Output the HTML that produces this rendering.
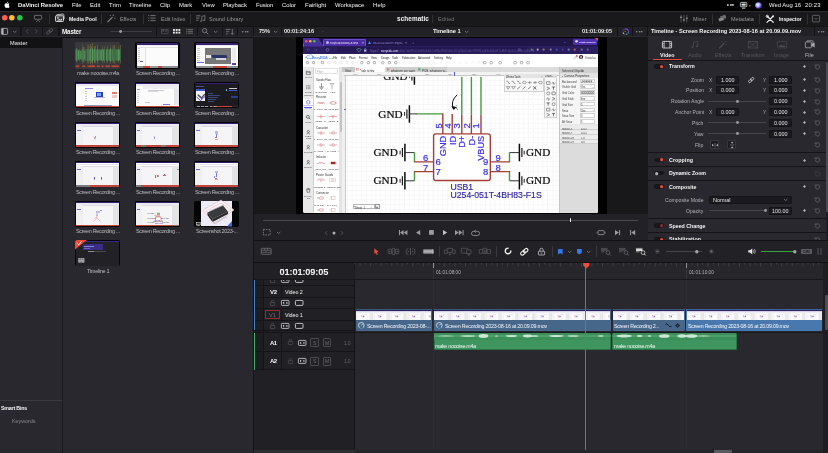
<!DOCTYPE html>
<html lang="en"><head><meta charset="utf-8"><title>DaVinci Resolve - schematic</title>
<style>
html,body{margin:0;padding:0;}
body{width:828px;height:453px;overflow:hidden;background:#28282e;position:relative;font-family:'Liberation Sans',sans-serif;}
#r{position:absolute;left:0;top:0;width:828px;height:453px;overflow:hidden;will-change:transform;}
#r div,#r svg,#r span{position:absolute;}
#r div{box-sizing:border-box;}
#r svg{overflow:visible;}
.t{white-space:nowrap;}
</style></head>
<body><div id="r">
<div style="left:0px;top:0px;width:828px;height:10.7px;background:#000;"></div>
<div style="left:0px;top:10.7px;width:828px;height:0.8px;background:#2c2c31;"></div>
<svg style="left:3.6px;top:1.2px;" width="6.2" height="7.6" viewBox="0 0 19 20"><path fill="#fff" d="M12.2 3.1c.7-.9 1.2-2 1.1-3.1-1 .1-2.200.7-2.900 1.500-.6.700-1.200 1.900-1 3 1.100.100 2.200-.600 2.800-1.400zM13.300 4.900c-1.600-.100-2.900.900-3.700.900-.800 0-1.900-.800-3.200-.800C4.700 5 3.200 6 2.400 7.500c-1.700 3-.400 7.400 1.200 9.800.800 1.200 1.800 2.500 3 2.500 1.200-.100 1.700-.800 3.100-.800 1.500 0 1.900.800 3.200.700 1.300 0 2.200-1.200 3-2.400.900-1.400 1.300-2.700 1.300-2.800 0 0-2.600-1-2.600-3.900 0-2.500 2-3.600 2.100-3.700-1.200-1.700-3-1.900-3.400-2z"/></svg>
<span class="t" style="left:18px;top:1px;font-size:23.6px;line-height:28.32px;color:#f4f4f4;transform:scale(0.25);transform-origin:0 0;font-weight:bold;letter-spacing:-0.21px;">DaVinci Resolve</span>
<span class="t" style="left:71.5px;top:1px;font-size:23.6px;line-height:28.32px;color:#f4f4f4;transform:scale(0.25);transform-origin:0 0;">File</span>
<span class="t" style="left:89.5px;top:1px;font-size:23.6px;line-height:28.32px;color:#f4f4f4;transform:scale(0.25);transform-origin:0 0;letter-spacing:0.33px;">Edit</span>
<span class="t" style="left:109px;top:1px;font-size:23.6px;line-height:28.32px;color:#f4f4f4;transform:scale(0.25);transform-origin:0 0;letter-spacing:0.42px;">Trim</span>
<span class="t" style="left:129px;top:1px;font-size:23.6px;line-height:28.32px;color:#f4f4f4;transform:scale(0.25);transform-origin:0 0;letter-spacing:0.21px;">Timeline</span>
<span class="t" style="left:160px;top:1px;font-size:23.6px;line-height:28.32px;color:#f4f4f4;transform:scale(0.25);transform-origin:0 0;letter-spacing:-0.16px;">Clip</span>
<span class="t" style="left:179px;top:1px;font-size:23.6px;line-height:28.32px;color:#f4f4f4;transform:scale(0.25);transform-origin:0 0;letter-spacing:0.19px;">Mark</span>
<span class="t" style="left:201.5px;top:1px;font-size:23.6px;line-height:28.32px;color:#f4f4f4;transform:scale(0.25);transform-origin:0 0;letter-spacing:0.12px;">View</span>
<span class="t" style="left:223px;top:1px;font-size:23.6px;line-height:28.32px;color:#f4f4f4;transform:scale(0.25);transform-origin:0 0;letter-spacing:0.03px;">Playback</span>
<span class="t" style="left:256px;top:1px;font-size:23.6px;line-height:28.32px;color:#f4f4f4;transform:scale(0.25);transform-origin:0 0;letter-spacing:-0.47px;">Fusion</span>
<span class="t" style="left:282px;top:1px;font-size:23.6px;line-height:28.32px;color:#f4f4f4;transform:scale(0.25);transform-origin:0 0;letter-spacing:-0.08px;">Color</span>
<span class="t" style="left:305px;top:1px;font-size:23.6px;line-height:28.32px;color:#f4f4f4;transform:scale(0.25);transform-origin:0 0;letter-spacing:0.14px;">Fairlight</span>
<span class="t" style="left:335px;top:1px;font-size:23.6px;line-height:28.32px;color:#f4f4f4;transform:scale(0.25);transform-origin:0 0;letter-spacing:-0.05px;">Workspace</span>
<span class="t" style="left:372.5px;top:1px;font-size:23.6px;line-height:28.32px;color:#f4f4f4;transform:scale(0.25);transform-origin:0 0;letter-spacing:0.67px;">Help</span>
<svg style="left:726.6px;top:4.4px;" width="1.8" height="1.8" viewBox="0 0 1.8 1.8"><circle cx=".9" cy=".9" r=".9" fill="#e8e8e8"/></svg>
<svg style="left:729.5px;top:4.4px;" width="1.8" height="1.8" viewBox="0 0 1.8 1.8"><circle cx=".9" cy=".9" r=".9" fill="#e8e8e8"/></svg>
<svg style="left:732.4px;top:4.4px;" width="1.8" height="1.8" viewBox="0 0 1.8 1.8"><circle cx=".9" cy=".9" r=".9" fill="#e8e8e8"/></svg>
<svg style="left:739.5px;top:2.2px;" width="8.5" height="6.5" viewBox="0 0 8.5 6.5"><rect x=".4" y=".4" width="6.4" height="4.4" rx="1" fill="none" stroke="#eee" stroke-width=".8"/><rect x="1.6" y="1.6" width="4" height="2" fill="#eee"/><path d="M2 6.200h3.200" stroke="#eee" stroke-width=".8"/></svg>
<svg style="left:749.3px;top:4.6px;" width="1.6" height="1.6" viewBox="0 0 1.6 1.6"><circle cx=".8" cy=".8" r=".8" fill="#ff5a4c"/></svg>
<svg style="left:755.3px;top:2px;" width="7" height="7" viewBox="0 0 7 7"><defs><radialGradient id="sg" cx="40%" cy="40%"><stop offset="0" stop-color="#fff"/><stop offset=".45" stop-color="#9fd0ff"/><stop offset=".8" stop-color="#b06cff"/><stop offset="1" stop-color="#3a3aa0"/></radialGradient></defs><circle cx="3.5" cy="3.5" r="3.3" fill="url(#sg)"/></svg>
<span class="t" style="left:769.3px;top:1px;font-size:23.6px;line-height:28.32px;color:#f4f4f4;transform:scale(0.25);transform-origin:0 0;">Wed Aug 16</span>
<span class="t" style="left:804.7px;top:1px;font-size:23.6px;line-height:28.32px;color:#f4f4f4;transform:scale(0.25);transform-origin:0 0;letter-spacing:0.67px;">20:23</span>
<div style="left:0px;top:11.5px;width:828px;height:14.6px;background:#19191c;"></div>
<svg style="left:1.6px;top:15.4px;" width="5.6" height="5.6" viewBox="0 0 5.6 5.6"><circle cx="2.8" cy="2.8" r="2.8" fill="#fe5f57"/></svg>
<svg style="left:9.1px;top:15.4px;" width="5.6" height="5.6" viewBox="0 0 5.6 5.6"><circle cx="2.8" cy="2.8" r="2.8" fill="#febc2e"/></svg>
<svg style="left:17.1px;top:15.4px;" width="5.6" height="5.6" viewBox="0 0 5.6 5.6"><circle cx="2.8" cy="2.8" r="2.8" fill="#28c840"/></svg>
<svg style="left:34px;top:14.8px;" width="8" height="7.5" viewBox="0 0 8 7.5"><rect x=".4" y=".4" width="7.200" height="3.900" rx=".5" fill="none" stroke="#7d7d82" stroke-width=".8"/><path d="M2.200 7 4 5.200 5.800 7" fill="none" stroke="#7d7d82" stroke-width=".8"/></svg>
<div style="left:49.1px;top:13.5px;width:0.8px;height:10.5px;background:#303035;"></div>
<svg style="left:54.5px;top:14.3px;" width="9.5" height="8" viewBox="0 0 9.5 8"><rect x="1.600" y=".4" width="7.400" height="5.400" rx=".8" fill="none" stroke="#d8d8d8" stroke-width=".8" transform="rotate(-6 5 3)"/><rect x=".5" y="1.800" width="8" height="5.700" rx=".8" fill="#3a3a3e" stroke="#e4e4e4" stroke-width=".9"/><circle cx="3" cy="3.900" r=".8" fill="#e4e4e4"/><path d="M2 6.500 4.200 5 5.400 5.800 7 4.600v1.900z" fill="#e4e4e4"/></svg>
<span class="t" style="left:68.5px;top:16px;font-size:20.8px;line-height:24.96px;color:#f4f4f4;transform:scale(0.25);transform-origin:0 0;font-weight:bold;letter-spacing:0.1px;">Media Pool</span>
<div style="left:101.1px;top:13.5px;width:0.8px;height:10.5px;background:#303035;"></div>
<svg style="left:106.5px;top:14.3px;" width="9" height="8.5" viewBox="0 0 9 8.5"><path d="M.8 7.800 5.200 3.400" stroke="#8a8a8f" stroke-width="1.100" stroke-linecap="round"/><path d="M6.300 .5v1.600M5.500 1.300h1.600M7.800 3.600v1.200M7.200 4.200h1.200M3.300 1v1M2.800 1.500h1" stroke="#8a8a8f" stroke-width=".5"/></svg>
<span class="t" style="left:120px;top:16px;font-size:22px;line-height:26.4px;color:#98989d;transform:scale(0.25);transform-origin:0 0;letter-spacing:-0.24px;">Effects</span>
<div style="left:142.6px;top:13.5px;width:0.8px;height:10.5px;background:#303035;"></div>
<svg style="left:147.5px;top:15.3px;" width="8" height="6.5" viewBox="0 0 8 6.5"><path d="M2.400 .6h5.200M2.400 3.100h5.200M2.400 5.600h5.200" stroke="#8a8a8f" stroke-width=".8"/><path d="M.2 .6h1.100M.2 3.100h1.100M.2 5.600h1.100" stroke="#8a8a8f" stroke-width=".8"/></svg>
<span class="t" style="left:160.5px;top:16px;font-size:22px;line-height:26.4px;color:#98989d;transform:scale(0.25);transform-origin:0 0;">Edit Index</span>
<div style="left:190.1px;top:13.5px;width:0.8px;height:10.5px;background:#303035;"></div>
<svg style="left:195.5px;top:14.8px;" width="9.5" height="7.5" viewBox="0 0 9.5 7.5"><path d="M.2 .8h4.200M.2 3h3.200M.2 5.200h2.200" stroke="#8a8a8f" stroke-width=".8"/><path d="M5.800 6V1.300L8.900.6v4.600" fill="none" stroke="#8a8a8f" stroke-width=".7"/><ellipse cx="5" cy="6.100" rx=".9" ry=".7" fill="#8a8a8f"/><ellipse cx="8.100" cy="5.300" rx=".9" ry=".7" fill="#8a8a8f"/></svg>
<span class="t" style="left:209px;top:16px;font-size:22px;line-height:26.4px;color:#98989d;transform:scale(0.25);transform-origin:0 0;">Sound Library</span>
<span class="t" style="left:396.7px;top:15px;font-size:25.6px;line-height:30.72px;color:#f4f4f4;transform:scale(0.25);transform-origin:0 0;font-weight:bold;letter-spacing:0.31px;">schematic</span>
<div style="left:432.3px;top:14.5px;width:0.8px;height:8.5px;background:#303035;"></div>
<span class="t" style="left:437.7px;top:16px;font-size:22px;line-height:26.4px;color:#77777c;transform:scale(0.25);transform-origin:0 0;letter-spacing:0.67px;">Edited</span>
<svg style="left:679.8px;top:14.8px;" width="7.8" height="7.4" viewBox="0 0 7.8 7.4"><path d="M1 0v7.400M3.900 0v7.400M6.800 0v7.400" stroke="#77777c" stroke-width=".6"/><path d="M0 2.200h2M2.900 5h2M5.800 3.200h2" stroke="#9a9a9f" stroke-width="1.100"/></svg>
<span class="t" style="left:692.7px;top:16px;font-size:22px;line-height:26.4px;color:#98989d;transform:scale(0.25);transform-origin:0 0;letter-spacing:0.04px;">Mixer</span>
<div style="left:711.6px;top:13.5px;width:0.8px;height:10.5px;background:#303035;"></div>
<svg style="left:717.5px;top:15px;" width="9" height="7" viewBox="0 0 9 7"><rect x="2.600" y=".6" width="5.600" height="3.400" rx=".7" fill="#77777c" transform="rotate(-18 5 3)"/><rect x=".4" y="2.600" width="5.600" height="3.400" rx=".7" fill="#8a8a8f" stroke="#19191c" stroke-width=".4" transform="rotate(-18 3 4)"/></svg>
<span class="t" style="left:731px;top:16px;font-size:22px;line-height:26.4px;color:#98989d;transform:scale(0.25);transform-origin:0 0;letter-spacing:-0.12px;">Metadata</span>
<div style="left:758.9px;top:13.5px;width:0.8px;height:10.5px;background:#303035;"></div>
<svg style="left:765.5px;top:14.6px;" width="8.5" height="8" viewBox="0 0 8.5 8"><path d="M1 7.300 7.300 1M1 1 7.300 7.300" stroke="#f0f0f0" stroke-width="1.200" stroke-linecap="round"/><circle cx="1.300" cy="1.300" r="1.200" fill="none" stroke="#f0f0f0" stroke-width=".7"/><circle cx="7" cy="1.300" r=".9" fill="#f0f0f0"/></svg>
<span class="t" style="left:778.7px;top:16px;font-size:20.8px;line-height:24.96px;color:#f4f4f4;transform:scale(0.25);transform-origin:0 0;font-weight:bold;letter-spacing:-0.4px;">Inspector</span>
<div style="left:806.6px;top:13.5px;width:0.8px;height:10.5px;background:#303035;"></div>
<svg style="left:812.3px;top:14.7px;" width="8" height="7.4" viewBox="0 0 8 7.4"><rect x=".4" y=".4" width="7.200" height="6.600" rx="1" fill="none" stroke="#7d7d82" stroke-width=".7"/><path d="M2.400 3 4 4.600 5.600 3" fill="none" stroke="#7d7d82" stroke-width=".7"/></svg>
<div style="left:0px;top:26.1px;width:828px;height:10.4px;background:#141416;"></div>
<div style="left:0px;top:26.5px;width:20.3px;height:9.6px;background:#222226;"></div>
<div style="left:21.6px;top:26.5px;width:20.2px;height:9.6px;background:#222226;"></div>
<div style="left:43px;top:26.5px;width:15.3px;height:9.6px;background:#222226;"></div>
<div style="left:59.6px;top:26.5px;width:96.7px;height:9.6px;background:#222226;"></div>
<div style="left:157.4px;top:26.5px;width:39.5px;height:9.6px;background:#222226;"></div>
<div style="left:198.1px;top:26.5px;width:23.9px;height:9.6px;background:#222226;"></div>
<div style="left:223.2px;top:26.5px;width:13.8px;height:9.6px;background:#222226;"></div>
<div style="left:238.2px;top:26.5px;width:14.8px;height:9.6px;background:#222226;"></div>
<div style="left:254.2px;top:26.5px;width:26.4px;height:9.6px;background:#222226;"></div>
<div style="left:281.6px;top:26.5px;width:335.4px;height:9.6px;background:#222226;"></div>
<div style="left:618.2px;top:26.5px;width:13.8px;height:9.6px;background:#222226;"></div>
<div style="left:633.2px;top:26.5px;width:14.1px;height:9.6px;background:#222226;"></div>
<div style="left:648.3px;top:26.5px;width:165.7px;height:9.6px;background:#222226;"></div>
<div style="left:815.2px;top:26.5px;width:12.8px;height:9.6px;background:#222226;"></div>
<svg style="left:1.2px;top:27.7px;" width="7" height="6.8" viewBox="0 0 7 6.8"><rect x=".4" y=".4" width="6.200" height="6" rx=".8" fill="none" stroke="#b4b4b8" stroke-width=".8"/><rect x=".6" y=".6" width="2" height="5.600" fill="#b4b4b8"/></svg>
<svg style="left:12.8px;top:30.65px;" width="3.4" height="1.7" viewBox="0 0 3.4 1.7"><path d="M0 0 1.7 1.53 3.4 0" fill="none" stroke="#8a8a8f" stroke-width="0.7"/></svg>
<svg style="left:25.6px;top:29.2px;" width="2.4" height="4.4" viewBox="0 0 2.4 4.4"><path d="M2.100 .2.400 2.200 2.100 4.200" fill="none" stroke="#5a5a60" stroke-width=".7"/></svg>
<svg style="left:35px;top:29.2px;" width="2.4" height="4.4" viewBox="0 0 2.4 4.4"><path d="M.3 .2 2 2.200.3 4.200" fill="none" stroke="#5a5a60" stroke-width=".7"/></svg>
<svg style="left:46.3px;top:27.8px;" width="7.4" height="6.8" viewBox="0 0 7.4 6.8"><g fill="none" stroke="#5a5a60" stroke-width=".8" transform="rotate(-40 3.700 3.400)"><rect x=".2" y="2.200" width="4" height="2.400" rx="1.200"/><rect x="3.200" y="2.200" width="4" height="2.400" rx="1.200"/></g></svg>
<span class="t" style="left:62px;top:28px;font-size:25.2px;line-height:30.24px;color:#f4f4f4;transform:scale(0.25);transform-origin:0 0;font-weight:bold;letter-spacing:-0.74px;">Master</span>
<div style="left:110px;top:31.1px;width:42px;height:0.6px;background:#3c3c42;"></div>
<svg style="left:118.9px;top:29.7px;" width="3.2" height="3.2" viewBox="0 0 3.2 3.2"><circle cx="1.600" cy="1.600" r="1.500" fill="#9a9a9f"/></svg>
<svg style="left:160.5px;top:29px;" width="7.4" height="4.6" viewBox="0 0 7.4 4.6"><rect x=".3" y=".3" width="6.800" height="4" fill="none" stroke="#5a5a60" stroke-width=".6"/><rect x="1.200" y="1.200" width="2" height="1.300" fill="#5a5a60"/><path d="M4 1.500h2.300M4 2.600h2.300" stroke="#5a5a60" stroke-width=".5"/></svg>
<svg style="left:173.2px;top:29.1px;" width="7.4" height="4.6" viewBox="0 0 7.4 4.6"><rect x="0" y="0" width="1.900" height="1.900" fill="#e8e8e8"/><rect x="0" y="2.7" width="1.900" height="1.900" fill="#e8e8e8"/><rect x="2.7" y="0" width="1.900" height="1.900" fill="#e8e8e8"/><rect x="2.7" y="2.7" width="1.900" height="1.900" fill="#e8e8e8"/><rect x="5.4" y="0" width="1.900" height="1.900" fill="#e8e8e8"/><rect x="5.4" y="2.7" width="1.900" height="1.900" fill="#e8e8e8"/></svg>
<svg style="left:185.8px;top:29.1px;" width="7" height="4.6" viewBox="0 0 7 4.6"><path d="M1.600 .4h5.400M1.600 2.300h5.400M1.600 4.200h5.400" stroke="#8a8a8f" stroke-width=".7"/><path d="M0 .4h.9M0 2.300h.9M0 4.200h.9" stroke="#8a8a8f" stroke-width=".7"/></svg>
<svg style="left:202px;top:28.3px;" width="6.6" height="6.6" viewBox="0 0 6.6 6.6"><circle cx="2.600" cy="2.600" r="2.100" fill="none" stroke="#8a8a8f" stroke-width=".8"/><path d="M4.200 4.200 6.200 6.200" stroke="#8a8a8f" stroke-width=".9"/></svg>
<svg style="left:213.6px;top:30.75px;" width="3.4" height="1.7" viewBox="0 0 3.4 1.7"><path d="M0 0 1.7 1.53 3.4 0" fill="none" stroke="#8a8a8f" stroke-width="0.7"/></svg>
<svg style="left:225.5px;top:28.6px;" width="8" height="5.8" viewBox="0 0 8 5.8"><path d="M0 .5h4.400M0 2.700h3.200M0 4.900h2" stroke="#8a8a8f" stroke-width=".7"/><path d="M6.300 0v5.400M4.900 4 6.300 5.500 7.700 4" fill="none" stroke="#8a8a8f" stroke-width=".7"/></svg>
<svg style="left:242.35px;top:30.55px;" width="1.5" height="1.5" viewBox="0 0 1.5 1.5"><circle cx="0.75" cy="0.75" r="0.75" fill="#9a9a9f"/></svg>
<svg style="left:244.85px;top:30.55px;" width="1.5" height="1.5" viewBox="0 0 1.5 1.5"><circle cx="0.75" cy="0.75" r="0.75" fill="#9a9a9f"/></svg>
<svg style="left:247.35px;top:30.55px;" width="1.5" height="1.5" viewBox="0 0 1.5 1.5"><circle cx="0.75" cy="0.75" r="0.75" fill="#9a9a9f"/></svg>
<span class="t" style="left:259.3px;top:28px;font-size:22.4px;line-height:26.88px;color:#e8e8e8;transform:scale(0.25);transform-origin:0 0;font-weight:bold;letter-spacing:-0.54px;">75%</span>
<svg style="left:273.8px;top:30.65px;" width="3.4" height="1.7" viewBox="0 0 3.4 1.7"><path d="M0 0 1.7 1.53 3.4 0" fill="none" stroke="#8a8a8f" stroke-width="0.7"/></svg>
<span class="t" style="left:284.3px;top:28px;font-size:22.4px;line-height:26.88px;color:#e8e8e8;transform:scale(0.25);transform-origin:0 0;font-weight:bold;letter-spacing:-0.19px;">00:01:24:16</span>
<svg style="left:322px;top:30.7px;" width="1.4" height="1.4" viewBox="0 0 1.4 1.4"><circle cx=".7" cy=".7" r=".6" fill="#4a4a50"/></svg>
<span class="t" style="left:432.7px;top:28px;font-size:23.2px;line-height:27.84px;color:#f4f4f4;transform:scale(0.25);transform-origin:0 0;font-weight:bold;letter-spacing:-0.26px;">Timeline 1</span>
<svg style="left:464.6px;top:30.65px;" width="3.4" height="1.7" viewBox="0 0 3.4 1.7"><path d="M0 0 1.7 1.53 3.4 0" fill="none" stroke="#8a8a8f" stroke-width="0.7"/></svg>
<span class="t" style="left:582px;top:28px;font-size:22.4px;line-height:26.88px;color:#e8e8e8;transform:scale(0.25);transform-origin:0 0;font-weight:bold;letter-spacing:-0.19px;">01:01:09:05</span>
<svg style="left:621.5px;top:27.8px;" width="7.4" height="7.4" viewBox="0 0 7.4 7.4"><circle cx="3.700" cy="3.700" r="2.900" fill="#1c1c20" stroke="#4a3a8a" stroke-width=".9"/><path d="M3.700 .8a2.900 2.900 0 0 1 2.900 2.900" fill="none" stroke="#7a5ad8" stroke-width=".9"/><circle cx="1.500" cy="5.300" r=".8" fill="#f0c030"/><circle cx="3.200" cy="3.300" r=".6" fill="#f09030"/><circle cx="4.600" cy="6.300" r=".7" fill="#40b060"/><circle cx="6.300" cy="4.800" r=".7" fill="#4a70e0"/><circle cx="3.400" cy="1" r=".6" fill="#e04a3a"/></svg>
<svg style="left:636.25px;top:30.55px;" width="1.5" height="1.5" viewBox="0 0 1.5 1.5"><circle cx="0.75" cy="0.75" r="0.75" fill="#9a9a9f"/></svg>
<svg style="left:638.75px;top:30.55px;" width="1.5" height="1.5" viewBox="0 0 1.5 1.5"><circle cx="0.75" cy="0.75" r="0.75" fill="#9a9a9f"/></svg>
<svg style="left:641.25px;top:30.55px;" width="1.5" height="1.5" viewBox="0 0 1.5 1.5"><circle cx="0.75" cy="0.75" r="0.75" fill="#9a9a9f"/></svg>
<span class="t" style="left:651px;top:28px;font-size:22.4px;line-height:26.88px;color:#f4f4f4;transform:scale(0.25);transform-origin:0 0;font-weight:bold;letter-spacing:0.12px;">Timeline - Screen Recording 2023-08-16 at 20.09.09.mov</span>
<svg style="left:818.05px;top:30.55px;" width="1.5" height="1.5" viewBox="0 0 1.5 1.5"><circle cx="0.75" cy="0.75" r="0.75" fill="#9a9a9f"/></svg>
<svg style="left:820.55px;top:30.55px;" width="1.5" height="1.5" viewBox="0 0 1.5 1.5"><circle cx="0.75" cy="0.75" r="0.75" fill="#9a9a9f"/></svg>
<svg style="left:823.05px;top:30.55px;" width="1.5" height="1.5" viewBox="0 0 1.5 1.5"><circle cx="0.75" cy="0.75" r="0.75" fill="#9a9a9f"/></svg>
<div style="left:0px;top:36.5px;width:253.4px;height:416.5px;background:#28282e;"></div>
<div style="left:0px;top:36.5px;width:828px;height:0.5px;background:#101012;"></div>
<div style="left:0px;top:37px;width:62px;height:10.8px;background:#121214;"></div>
<span class="t" style="left:9.5px;top:40px;font-size:22.4px;line-height:26.88px;color:#f0f0f0;transform:scale(0.25);transform-origin:0 0;letter-spacing:0.26px;">Master</span>
<div style="left:62px;top:37px;width:0.9px;height:416px;background:#1b1b1f;"></div>
<div style="left:0px;top:400.3px;width:62px;height:0.6px;background:#3a3a40;"></div>
<span class="t" style="left:0.6px;top:405px;font-size:21.2px;line-height:25.44px;color:#f4f4f4;transform:scale(0.25);transform-origin:0 0;font-weight:bold;letter-spacing:-0.79px;">Smart Bins</span>
<span class="t" style="left:11.9px;top:418px;font-size:22px;line-height:26.4px;color:#85858a;transform:scale(0.25);transform-origin:0 0;letter-spacing:-0.37px;">Keywords</span>
<div style="left:253px;top:37px;width:0.9px;height:416px;background:#151517;"></div>
<div style="left:75.3px;top:42.4px;width:45.2px;height:26.2px;background:#38383b;border-radius:2px;overflow:hidden;"></div>
<svg style="left:75.3px;top:42.4px;" width="45.2" height="26.2" viewBox="0 0 45.2 26.2"><rect x="0.4" y="7.73" width=".9" height="10.53" fill="#457f4c"/><rect x="1.3" y="6.41" width=".9" height="13.18" fill="#5a9f5d"/><rect x="2.2" y="7.58" width=".9" height="10.84" fill="#457f4c"/><rect x="3.1" y="8.48" width=".9" height="9.03" fill="#5a9f5d"/><rect x="4" y="7.24" width=".9" height="11.53" fill="#457f4c"/><rect x="4.9" y="8.74" width=".9" height="8.53" fill="#5a9f5d"/><rect x="5.8" y="8.75" width=".9" height="8.51" fill="#457f4c"/><rect x="6.7" y="7.06" width=".9" height="11.88" fill="#5a9f5d"/><rect x="6.9" y="1.92" width=".5" height="5.14" fill="#66664f"/><rect x="6.9" y="18.94" width=".5" height="3.09" fill="#66664f"/><rect x="7.6" y="7.17" width=".9" height="11.66" fill="#457f4c"/><rect x="7.8" y="4.67" width=".5" height="2.5" fill="#8f8340"/><rect x="7.8" y="18.83" width=".5" height="1.5" fill="#8f8340"/><rect x="8.5" y="7.52" width=".9" height="10.96" fill="#5a9f5d"/><rect x="8.7" y="4.91" width=".5" height="2.61" fill="#8f8340"/><rect x="8.7" y="18.48" width=".5" height="1.57" fill="#8f8340"/><rect x="9.4" y="8.92" width=".9" height="8.17" fill="#5a9f5d"/><rect x="10.3" y="7.1" width=".9" height="11.81" fill="#457f4c"/><rect x="11.7" y="6.97" width=".9" height="12.06" fill="#457f4c"/><rect x="11.9" y="3.37" width=".5" height="3.6" fill="#66664f"/><rect x="11.9" y="19.03" width=".5" height="2.16" fill="#66664f"/><rect x="12.6" y="7.07" width=".9" height="11.86" fill="#5a9f5d"/><rect x="12.8" y="1.88" width=".5" height="5.19" fill="#66664f"/><rect x="12.8" y="18.93" width=".5" height="3.12" fill="#66664f"/><rect x="13.5" y="6.46" width=".9" height="13.09" fill="#457f4c"/><rect x="13.7" y="3.45" width=".5" height="3.01" fill="#8f8340"/><rect x="13.7" y="19.54" width=".5" height="1.81" fill="#8f8340"/><rect x="14.4" y="7.34" width=".9" height="11.32" fill="#5a9f5d"/><rect x="15.3" y="6.57" width=".9" height="12.85" fill="#5a9f5d"/><rect x="15.5" y="1.86" width=".5" height="4.71" fill="#8f8340"/><rect x="15.5" y="19.43" width=".5" height="2.83" fill="#8f8340"/><rect x="16.2" y="6.27" width=".9" height="13.47" fill="#457f4c"/><rect x="16.4" y="4.27" width=".5" height="2" fill="#8f8340"/><rect x="16.4" y="19.73" width=".5" height="1.2" fill="#8f8340"/><rect x="17.1" y="6.34" width=".9" height="13.31" fill="#5a9f5d"/><rect x="17.3" y="1.21" width=".5" height="5.14" fill="#8f8340"/><rect x="17.3" y="19.66" width=".5" height="3.08" fill="#8f8340"/><rect x="18" y="7.68" width=".9" height="10.63" fill="#457f4c"/><rect x="18.9" y="6.55" width=".9" height="12.89" fill="#5a9f5d"/><rect x="19.1" y="4.28" width=".5" height="2.28" fill="#8f8340"/><rect x="19.1" y="19.45" width=".5" height="1.37" fill="#8f8340"/><rect x="19.8" y="6.26" width=".9" height="13.49" fill="#457f4c"/><rect x="20" y="3.88" width=".5" height="2.38" fill="#8f8340"/><rect x="20" y="19.74" width=".5" height="1.43" fill="#8f8340"/><rect x="20.7" y="7.64" width=".9" height="10.72" fill="#5a9f5d"/><rect x="22.1" y="6.52" width=".9" height="12.95" fill="#5a9f5d"/><rect x="22.3" y="2.74" width=".5" height="3.79" fill="#8f8340"/><rect x="22.3" y="19.48" width=".5" height="2.27" fill="#8f8340"/><rect x="23" y="7.49" width=".9" height="11.01" fill="#457f4c"/><rect x="23.9" y="7.59" width=".9" height="10.82" fill="#457f4c"/><rect x="24.8" y="7.61" width=".9" height="10.77" fill="#5a9f5d"/><rect x="26.2" y="7.46" width=".9" height="11.08" fill="#5a9f5d"/><rect x="27.1" y="6.25" width=".9" height="13.51" fill="#457f4c"/><rect x="27.3" y="3.27" width=".5" height="2.97" fill="#66664f"/><rect x="27.3" y="19.75" width=".5" height="1.78" fill="#66664f"/><rect x="28" y="7.46" width=".9" height="11.07" fill="#5a9f5d"/><rect x="28.9" y="6.43" width=".9" height="13.13" fill="#457f4c"/><rect x="29.1" y="4.11" width=".5" height="2.32" fill="#66664f"/><rect x="29.1" y="19.57" width=".5" height="1.39" fill="#66664f"/><rect x="30.8" y="7.46" width=".9" height="11.08" fill="#5a9f5d"/><rect x="31.7" y="6.56" width=".9" height="12.87" fill="#5a9f5d"/><rect x="31.9" y="3.62" width=".5" height="2.95" fill="#8f8340"/><rect x="31.9" y="19.44" width=".5" height="1.77" fill="#8f8340"/><rect x="32.6" y="7.66" width=".9" height="10.69" fill="#457f4c"/><rect x="33.5" y="7.41" width=".9" height="11.18" fill="#457f4c"/><rect x="34.4" y="7.21" width=".9" height="11.59" fill="#5a9f5d"/><rect x="35.3" y="6.27" width=".9" height="13.47" fill="#5a9f5d"/><rect x="35.5" y="2.43" width=".5" height="3.84" fill="#66664f"/><rect x="35.5" y="19.73" width=".5" height="2.3" fill="#66664f"/><rect x="36.7" y="7.51" width=".9" height="10.99" fill="#5a9f5d"/><rect x="37.6" y="6.35" width=".9" height="13.31" fill="#457f4c"/><rect x="37.8" y="3.55" width=".5" height="2.8" fill="#8f8340"/><rect x="37.8" y="19.65" width=".5" height="1.68" fill="#8f8340"/><rect x="38.5" y="6.62" width=".9" height="12.77" fill="#457f4c"/><rect x="38.7" y="3.99" width=".5" height="2.63" fill="#66664f"/><rect x="38.7" y="19.38" width=".5" height="1.58" fill="#66664f"/><rect x="39.4" y="6.39" width=".9" height="13.22" fill="#457f4c"/><rect x="39.6" y="3.04" width=".5" height="3.35" fill="#8f8340"/><rect x="39.6" y="19.61" width=".5" height="2.01" fill="#8f8340"/><rect x="40.3" y="7.74" width=".9" height="10.52" fill="#457f4c"/><rect x="41.2" y="7.42" width=".9" height="11.16" fill="#457f4c"/><rect x="42.1" y="7.39" width=".9" height="11.22" fill="#457f4c"/><rect x="43" y="6.85" width=".9" height="12.31" fill="#5a9f5d"/><rect x="43.2" y="4.28" width=".5" height="2.56" fill="#66664f"/><rect x="43.2" y="19.15" width=".5" height="1.54" fill="#66664f"/><rect x="43.9" y="7.69" width=".9" height="10.62" fill="#5a9f5d"/><rect x="44.8" y="6.91" width=".9" height="12.19" fill="#457f4c"/><rect x="45" y="2.94" width=".5" height="3.97" fill="#8f8340"/><rect x="45" y="19.09" width=".5" height="2.38" fill="#8f8340"/><rect x="0.7" y="23.400" width="3.5" height="1.700" fill="#c4432e"/><rect x="7.4" y="23.400" width="2.8" height="1.700" fill="#c4432e"/><rect x="12.4" y="23.400" width="7.7" height="1.700" fill="#c4432e"/><rect x="21.9" y="23.400" width="2.8" height="1.700" fill="#c4432e"/><rect x="26.5" y="23.400" width="2.1" height="1.700" fill="#c4432e"/><rect x="30.4" y="23.400" width="4.6" height="1.700" fill="#c4432e"/><rect x="36.4" y="23.400" width="7.4" height="1.700" fill="#c4432e"/></svg>
<div style="left:134.7px;top:42.4px;width:45.2px;height:26.2px;background:#050505;border-radius:2px;"></div>
<div style="left:136.8px;top:43.3px;width:41.5px;height:24.4px;background:#fbfbfb;"></div>
<div style="left:136.8px;top:43.3px;width:41.5px;height:1.4px;background:#34226f;"></div>
<div style="left:136.8px;top:44.7px;width:41.5px;height:1.8px;background:#e9e7f2;"></div>
<div style="left:136.8px;top:66.2px;width:41.5px;height:1.5px;background:#c2453b;"></div>
<div style="left:136.8px;top:46.7px;width:41.5px;height:0.6px;background:#e2e2e8;"></div>
<div style="left:137.8px;top:48.3px;width:2.5px;height:0.6px;background:#c9c9d2;"></div>
<div style="left:137.8px;top:50.3px;width:2.5px;height:0.6px;background:#c9c9d2;"></div>
<div style="left:137.8px;top:52.3px;width:2.5px;height:0.6px;background:#c9c9d2;"></div>
<div style="left:137.8px;top:54.3px;width:2.5px;height:0.6px;background:#c9c9d2;"></div>
<div style="left:137.8px;top:56.3px;width:2.5px;height:0.6px;background:#c9c9d2;"></div>
<div style="left:137.8px;top:58.3px;width:2.5px;height:0.6px;background:#c9c9d2;"></div>
<div style="left:137.8px;top:60.3px;width:2.5px;height:0.6px;background:#c9c9d2;"></div>
<div style="left:140.1px;top:60.6px;width:3px;height:1.6px;background:#5b5e9a;"></div>
<div style="left:144.8px;top:46.7px;width:0.4px;height:19.5px;background:#e0e0e6;"></div>
<div style="left:136.8px;top:66.2px;width:6px;height:1.5px;background:#8d8d92;"></div>
<div style="left:149.8px;top:66.2px;width:8px;height:1.5px;background:#9a9a9e;"></div>
<div style="left:161.8px;top:66.2px;width:16.5px;height:1.5px;background:#8d8d92;"></div>
<div style="left:194.2px;top:42.4px;width:45.2px;height:26.2px;background:#050505;border-radius:2px;"></div>
<div style="left:196.3px;top:43.3px;width:41.5px;height:24.4px;background:#fbfbfb;"></div>
<div style="left:196.3px;top:43.3px;width:41.5px;height:1.4px;background:#34226f;"></div>
<div style="left:196.3px;top:44.7px;width:41.5px;height:1.8px;background:#e9e7f2;"></div>
<div style="left:196.3px;top:66.2px;width:41.5px;height:1.5px;background:#c2453b;"></div>
<div style="left:197.3px;top:48.3px;width:3px;height:0.6px;background:#c9c9d2;"></div>
<div style="left:197.3px;top:50.3px;width:3px;height:0.6px;background:#c9c9d2;"></div>
<div style="left:197.3px;top:52.3px;width:3px;height:0.6px;background:#c9c9d2;"></div>
<div style="left:197.3px;top:54.3px;width:3px;height:0.6px;background:#c9c9d2;"></div>
<div style="left:197.3px;top:56.3px;width:3px;height:0.6px;background:#c9c9d2;"></div>
<div style="left:197.3px;top:58.3px;width:3px;height:0.6px;background:#c9c9d2;"></div>
<div style="left:197.3px;top:60.3px;width:3px;height:0.6px;background:#c9c9d2;"></div>
<div style="left:196.8px;top:61.7px;width:7px;height:1.3px;background:#6d6af0;"></div>
<div style="left:205.3px;top:48.3px;width:25.3px;height:15.8px;background:#77777a;"></div>
<div style="left:206.3px;top:54.8px;width:4.5px;height:3px;background:#e8e8ea;"></div>
<div style="left:211.8px;top:54.6px;width:15px;height:3.4px;background:#2a3566;transform:skewX(18deg);"></div>
<div style="left:215.8px;top:57.8px;width:10px;height:2.2px;background:#d6d6dc;"></div>
<div style="left:232.3px;top:47.8px;width:4px;height:14px;background:#ececf0;"></div>
<div style="left:232.3px;top:62.8px;width:4px;height:2px;background:#5a3fc0;"></div>
<div style="left:196.3px;top:66.2px;width:17px;height:1.5px;background:#8d8d92;"></div>
<div style="left:227.3px;top:66.2px;width:10.5px;height:1.5px;background:#8d8d92;"></div>
<div style="left:75.3px;top:82px;width:45.2px;height:26.2px;background:#050505;border-radius:2px;"></div>
<div style="left:76.4px;top:82.9px;width:43px;height:24.4px;background:#fbfbfb;"></div>
<div style="left:76.4px;top:82.9px;width:43px;height:1.4px;background:#34226f;"></div>
<div style="left:76.4px;top:84.3px;width:43px;height:1.8px;background:#e9e7f2;"></div>
<div style="left:76.4px;top:105.8px;width:43px;height:1.5px;background:#c2453b;"></div>
<div style="left:85.4px;top:88.2px;width:8px;height:1.1px;background:#8f8cf5;"></div>
<div style="left:95.9px;top:91.9px;width:7.5px;height:6px;background:#2c3fb8;"></div>
<div style="left:96.9px;top:92.9px;width:4px;height:3px;background:#6fa4f0;"></div>
<div style="left:94.4px;top:97.4px;width:11px;height:0.8px;background:#b9b9e8;"></div>
<div style="left:111.9px;top:91.9px;width:5px;height:2px;background:#e07a6a;"></div>
<div style="left:111.9px;top:94.9px;width:5px;height:3.5px;background:#f1c9c4;"></div>
<div style="left:85.4px;top:90.9px;width:2px;height:0.6px;background:#d0d0d8;"></div>
<div style="left:85.4px;top:93.2px;width:2px;height:0.6px;background:#d0d0d8;"></div>
<div style="left:85.4px;top:95.5px;width:2px;height:0.6px;background:#d0d0d8;"></div>
<div style="left:85.4px;top:97.8px;width:2px;height:0.6px;background:#d0d0d8;"></div>
<div style="left:85.4px;top:100.1px;width:2px;height:0.6px;background:#d0d0d8;"></div>
<div style="left:84.4px;top:105px;width:28px;height:0.8px;background:#8aa0c8;"></div>
<div style="left:134.7px;top:82px;width:45.2px;height:26.2px;background:#050505;border-radius:2px;"></div>
<div style="left:135.8px;top:82.9px;width:43px;height:24.4px;background:#fbfbfb;"></div>
<div style="left:135.8px;top:82.9px;width:43px;height:1.4px;background:#34226f;"></div>
<div style="left:135.8px;top:84.3px;width:43px;height:1.8px;background:#e9e7f2;"></div>
<div style="left:135.8px;top:105.8px;width:43px;height:1.5px;background:#c2453b;"></div>
<div style="left:142.8px;top:86.3px;width:36px;height:2.6px;background:#ececf0;"></div>
<div style="left:136.6px;top:88.9px;width:3.5px;height:1.2px;background:#8f8cf5;"></div>
<div style="left:136.6px;top:91.9px;width:2.5px;height:0.5px;background:#d0d0d8;"></div>
<div style="left:136.6px;top:93.9px;width:2.5px;height:0.5px;background:#d0d0d8;"></div>
<div style="left:136.6px;top:95.9px;width:2.5px;height:0.5px;background:#d0d0d8;"></div>
<div style="left:136.6px;top:97.9px;width:2.5px;height:0.5px;background:#d0d0d8;"></div>
<div style="left:136.6px;top:99.9px;width:2.5px;height:0.5px;background:#d0d0d8;"></div>
<div style="left:136.6px;top:101.9px;width:2.5px;height:0.5px;background:#d0d0d8;"></div>
<div style="left:147.8px;top:89.9px;width:16px;height:0.6px;background:#c9c9d2;"></div>
<div style="left:147.8px;top:91.4px;width:10px;height:0.6px;background:#d9d9e0;"></div>
<div style="left:174.3px;top:88.9px;width:4.5px;height:16.4px;background:#e6e6ea;"></div>
<div style="left:162.8px;top:103.7px;width:7.5px;height:1px;background:#7e7bf2;"></div>
<div style="left:144.8px;top:102.4px;width:5px;height:0.6px;background:#c9c9d2;"></div>
<div style="left:194.2px;top:82px;width:45.2px;height:26.2px;background:#050505;border-radius:2px;"></div>
<div style="left:195.3px;top:82.9px;width:43px;height:24.4px;background:#1c1c20;"></div>
<div style="left:195.3px;top:82.9px;width:43px;height:1.4px;background:#34226f;"></div>
<div style="left:195.3px;top:105.8px;width:43px;height:1.5px;background:#c2453b;"></div>
<div style="left:196.3px;top:86.4px;width:8px;height:0.8px;background:#4a4a90;"></div>
<div style="left:195.9px;top:89.4px;width:9.5px;height:1.6px;background:#3d59c9;"></div>
<div style="left:195.9px;top:91px;width:9.5px;height:9.5px;background:#f2f2f6;"></div>
<svg style="left:195.9px;top:91px;" width="9.5" height="9.5" viewBox="0 0 9.5 9.5"><path d="M2 3 5.500 6 8.500 2.500 9 4 5.500 8 1.500 4.500z" fill="#4a4a52"/><path d="M.5 6 4.500 9.500 9.500 5" fill="none" stroke="#4a35c8" stroke-width=".9"/></svg>
<div style="left:207.8px;top:92.9px;width:5px;height:0.5px;background:#3a4a78;"></div>
<div style="left:207.8px;top:95px;width:12px;height:0.5px;background:#3a4a78;"></div>
<div style="left:207.8px;top:97.1px;width:10px;height:0.5px;background:#3a4a78;"></div>
<div style="left:207.8px;top:99.2px;width:8px;height:0.5px;background:#3a4a78;"></div>
<div style="left:207.8px;top:101.3px;width:6px;height:0.5px;background:#3a4a78;"></div>
<div style="left:225.8px;top:88.9px;width:0.7px;height:2px;background:#5ab0f0;"></div>
<div style="left:229.3px;top:89.7px;width:8px;height:1.4px;background:#3d59c9;"></div>
<div style="left:231.3px;top:95.9px;width:6.5px;height:1.8px;background:#2c3f8a;"></div>
<div style="left:228.8px;top:87.9px;width:8px;height:0.7px;background:#c8c8d0;"></div>
<div style="left:195.3px;top:105.8px;width:17px;height:1.5px;background:#2e2e33;"></div>
<div style="left:232.3px;top:105.8px;width:6px;height:1.5px;background:#2e2e33;"></div>
<div style="left:196.8px;top:106px;width:2.8px;height:0.7px;background:#9a9aa0;"></div>
<div style="left:201.1px;top:106px;width:2.8px;height:0.7px;background:#9a9aa0;"></div>
<div style="left:205.4px;top:106px;width:2.8px;height:0.7px;background:#9a9aa0;"></div>
<div style="left:209.7px;top:106px;width:2.8px;height:0.7px;background:#9a9aa0;"></div>
<div style="left:214px;top:106px;width:2.8px;height:0.7px;background:#9a9aa0;"></div>
<div style="left:75.3px;top:121.6px;width:45.2px;height:26.2px;background:#050505;border-radius:2px;"></div>
<div style="left:76.4px;top:122.5px;width:43px;height:24.4px;background:#fbfbfb;"></div>
<div style="left:76.4px;top:122.5px;width:43px;height:1.4px;background:#34226f;"></div>
<div style="left:76.4px;top:123.9px;width:43px;height:1.8px;background:#e9e7f2;"></div>
<div style="left:76.4px;top:145.4px;width:43px;height:1.5px;background:#c2453b;"></div>
<div style="left:76.4px;top:125.9px;width:6.5px;height:19.5px;background:#f0f0f3;"></div>
<div style="left:77.2px;top:129.5px;width:3.5px;height:0.7px;background:#6d6af0;"></div>
<div style="left:112.9px;top:125.9px;width:6.5px;height:19.5px;background:#e3e3e6;"></div>
<div style="left:82.9px;top:125.9px;width:30px;height:1px;background:#dcdce0;"></div>
<div style="left:82.9px;top:126.9px;width:30px;height:18.5px;background:#f5f5f7;"></div>
<div style="left:82.9px;top:126.9px;width:30px;height:18.5px;background:transparent;background-image:linear-gradient(90deg,rgba(0,0,0,.05) .4px,transparent .4px),linear-gradient(rgba(0,0,0,.05) .4px,transparent .4px);background-size:3.300px 3.300px;"></div>
<div style="left:94.4px;top:137px;width:1.3px;height:2px;background:#e0a0a8;"></div>
<div style="left:94.7px;top:136px;width:0.6px;height:0.8px;background:#9a9ad8;"></div>
<div style="left:134.7px;top:121.6px;width:45.2px;height:26.2px;background:#050505;border-radius:2px;"></div>
<div style="left:135.8px;top:122.5px;width:43px;height:24.4px;background:#fbfbfb;"></div>
<div style="left:135.8px;top:122.5px;width:43px;height:1.4px;background:#34226f;"></div>
<div style="left:135.8px;top:123.9px;width:43px;height:1.8px;background:#e9e7f2;"></div>
<div style="left:135.8px;top:145.4px;width:43px;height:1.5px;background:#c2453b;"></div>
<div style="left:135.8px;top:125.9px;width:6.5px;height:19.5px;background:#f0f0f3;"></div>
<div style="left:136.6px;top:129.5px;width:3.5px;height:0.7px;background:#6d6af0;"></div>
<div style="left:172.3px;top:125.9px;width:6.5px;height:19.5px;background:#e3e3e6;"></div>
<div style="left:142.3px;top:125.9px;width:30px;height:1px;background:#dcdce0;"></div>
<div style="left:142.3px;top:126.9px;width:30px;height:18.5px;background:#f5f5f7;"></div>
<div style="left:142.3px;top:126.9px;width:30px;height:18.5px;background:transparent;background-image:linear-gradient(90deg,rgba(0,0,0,.05) .4px,transparent .4px),linear-gradient(rgba(0,0,0,.05) .4px,transparent .4px);background-size:3.300px 3.300px;"></div>
<div style="left:140.8px;top:145.4px;width:5px;height:1.5px;background:#7a7a80;"></div>
<div style="left:160.8px;top:145.4px;width:5px;height:1.5px;background:#7a7a80;"></div>
<div style="left:154.1px;top:137px;width:1.1px;height:1.8px;background:#9a9ae0;"></div>
<div style="left:154.3px;top:135.9px;width:0.5px;height:0.8px;background:#c0c0e8;"></div>
<div style="left:194.2px;top:121.6px;width:45.2px;height:26.2px;background:#050505;border-radius:2px;"></div>
<div style="left:195.3px;top:122.5px;width:43px;height:24.4px;background:#fbfbfb;"></div>
<div style="left:195.3px;top:122.5px;width:43px;height:1.4px;background:#34226f;"></div>
<div style="left:195.3px;top:123.9px;width:43px;height:1.8px;background:#e9e7f2;"></div>
<div style="left:195.3px;top:145.4px;width:43px;height:1.5px;background:#c2453b;"></div>
<div style="left:195.3px;top:125.9px;width:6.5px;height:19.5px;background:#f0f0f3;"></div>
<div style="left:196.1px;top:129.5px;width:3.5px;height:0.7px;background:#6d6af0;"></div>
<div style="left:231.8px;top:125.9px;width:6.5px;height:19.5px;background:#e3e3e6;"></div>
<div style="left:201.8px;top:125.9px;width:30px;height:1px;background:#dcdce0;"></div>
<div style="left:201.8px;top:126.9px;width:30px;height:18.5px;background:#f5f5f7;"></div>
<div style="left:201.8px;top:126.9px;width:30px;height:18.5px;background:transparent;background-image:linear-gradient(90deg,rgba(0,0,0,.05) .4px,transparent .4px),linear-gradient(rgba(0,0,0,.05) .4px,transparent .4px);background-size:3.300px 3.300px;"></div>
<div style="left:214.8px;top:131px;width:3px;height:2.5px;background:#b8b4f0;"></div>
<div style="left:215.8px;top:133.5px;width:0.5px;height:3.5px;background:#7a7ae8;"></div>
<div style="left:215.3px;top:137px;width:2px;height:0.6px;background:#d86a6a;"></div>
<div style="left:214.8px;top:138.5px;width:3px;height:0.5px;background:#e8a0a0;"></div>
<div style="left:75.3px;top:161.2px;width:45.2px;height:26.2px;background:#050505;border-radius:2px;"></div>
<div style="left:76.4px;top:162.1px;width:43px;height:24.4px;background:#fbfbfb;"></div>
<div style="left:76.4px;top:162.1px;width:43px;height:1.4px;background:#34226f;"></div>
<div style="left:76.4px;top:163.5px;width:43px;height:1.8px;background:#e9e7f2;"></div>
<div style="left:76.4px;top:185px;width:43px;height:1.5px;background:#c2453b;"></div>
<div style="left:76.4px;top:165.5px;width:6.5px;height:19.5px;background:#f0f0f3;"></div>
<div style="left:77.2px;top:169.1px;width:3.5px;height:0.7px;background:#6d6af0;"></div>
<div style="left:112.9px;top:165.5px;width:6.5px;height:19.5px;background:#e3e3e6;"></div>
<div style="left:82.9px;top:165.5px;width:30px;height:1px;background:#dcdce0;"></div>
<div style="left:82.9px;top:166.5px;width:30px;height:18.5px;background:#f5f5f7;"></div>
<div style="left:82.9px;top:166.5px;width:30px;height:18.5px;background:transparent;background-image:linear-gradient(90deg,rgba(0,0,0,.05) .4px,transparent .4px),linear-gradient(rgba(0,0,0,.05) .4px,transparent .4px);background-size:3.300px 3.300px;"></div>
<div style="left:76.4px;top:185px;width:14px;height:1.5px;background:#7a7a80;"></div>
<div style="left:93.7px;top:177.3px;width:0.9px;height:1.7px;background:#5a5ae0;"></div>
<div style="left:93.7px;top:179.1px;width:0.9px;height:0.8px;background:#e08080;"></div>
<div style="left:101.2px;top:177.3px;width:0.9px;height:1.7px;background:#5a5ae0;"></div>
<div style="left:100.9px;top:179.1px;width:1.5px;height:0.8px;background:#e08080;"></div>
<div style="left:134.7px;top:161.2px;width:45.2px;height:26.2px;background:#050505;border-radius:2px;"></div>
<div style="left:135.8px;top:162.1px;width:43px;height:24.4px;background:#fbfbfb;"></div>
<div style="left:135.8px;top:162.1px;width:43px;height:1.4px;background:#34226f;"></div>
<div style="left:135.8px;top:163.5px;width:43px;height:1.8px;background:#e9e7f2;"></div>
<div style="left:135.8px;top:185px;width:43px;height:1.5px;background:#c2453b;"></div>
<div style="left:135.8px;top:165.5px;width:6.5px;height:19.5px;background:#f0f0f3;"></div>
<div style="left:136.6px;top:169.1px;width:3.5px;height:0.7px;background:#6d6af0;"></div>
<div style="left:172.3px;top:165.5px;width:6.5px;height:19.5px;background:#e3e3e6;"></div>
<div style="left:142.3px;top:165.5px;width:30px;height:1px;background:#dcdce0;"></div>
<div style="left:142.3px;top:166.5px;width:30px;height:18.5px;background:#f5f5f7;"></div>
<div style="left:142.3px;top:166.5px;width:30px;height:18.5px;background:transparent;background-image:linear-gradient(90deg,rgba(0,0,0,.05) .4px,transparent .4px),linear-gradient(rgba(0,0,0,.05) .4px,transparent .4px);background-size:3.300px 3.300px;"></div>
<div style="left:135.8px;top:185px;width:5px;height:1.5px;background:#7a7a80;"></div>
<div style="left:155.3px;top:175.1px;width:0.5px;height:2.5px;background:#d85a5a;"></div>
<div style="left:156.8px;top:175.4px;width:0.5px;height:2px;background:#d85a5a;"></div>
<div style="left:158px;top:175.1px;width:0.5px;height:2.2px;background:#e09090;"></div>
<div style="left:162.8px;top:174.9px;width:3.5px;height:0.6px;background:#d85a5a;"></div>
<div style="left:164.3px;top:173.6px;width:0.8px;height:1.3px;background:#5a5ae0;"></div>
<div style="left:176.8px;top:169.1px;width:2px;height:1px;background:#4fb86a;"></div>
<div style="left:194.2px;top:161.2px;width:45.2px;height:26.2px;background:#050505;border-radius:2px;"></div>
<div style="left:195.3px;top:162.1px;width:43px;height:24.4px;background:#fbfbfb;"></div>
<div style="left:195.3px;top:162.1px;width:43px;height:1.4px;background:#34226f;"></div>
<div style="left:195.3px;top:163.5px;width:43px;height:1.8px;background:#e9e7f2;"></div>
<div style="left:195.3px;top:185px;width:43px;height:1.5px;background:#c2453b;"></div>
<div style="left:195.3px;top:165.5px;width:6.5px;height:19.5px;background:#f0f0f3;"></div>
<div style="left:196.1px;top:169.1px;width:3.5px;height:0.7px;background:#6d6af0;"></div>
<div style="left:231.8px;top:165.5px;width:6.5px;height:19.5px;background:#e3e3e6;"></div>
<div style="left:201.8px;top:165.5px;width:30px;height:1px;background:#dcdce0;"></div>
<div style="left:201.8px;top:166.5px;width:30px;height:18.5px;background:#f5f5f7;"></div>
<div style="left:201.8px;top:166.5px;width:30px;height:18.5px;background:transparent;background-image:linear-gradient(90deg,rgba(0,0,0,.05) .4px,transparent .4px),linear-gradient(rgba(0,0,0,.05) .4px,transparent .4px);background-size:3.300px 3.300px;"></div>
<div style="left:214.8px;top:170.6px;width:3px;height:2.5px;background:#b8b4f0;"></div>
<div style="left:216.1px;top:173.1px;width:0.5px;height:4px;background:#7a7ae8;"></div>
<div style="left:214.3px;top:175.6px;width:1px;height:2.5px;background:#8a8aea;"></div>
<div style="left:215.3px;top:177.6px;width:2.2px;height:0.6px;background:#d86a6a;"></div>
<div style="left:214.8px;top:179.4px;width:3px;height:0.5px;background:#e8a0a0;"></div>
<div style="left:75.3px;top:200.8px;width:45.2px;height:26.2px;background:#050505;border-radius:2px;"></div>
<div style="left:76.4px;top:201.7px;width:43px;height:24.4px;background:#fbfbfb;"></div>
<div style="left:76.4px;top:201.7px;width:43px;height:1.4px;background:#34226f;"></div>
<div style="left:76.4px;top:203.1px;width:43px;height:1.8px;background:#e9e7f2;"></div>
<div style="left:76.4px;top:224.6px;width:43px;height:1.5px;background:#c2453b;"></div>
<div style="left:76.4px;top:205.1px;width:6.5px;height:19.5px;background:#f0f0f3;"></div>
<div style="left:77.2px;top:208.7px;width:3.5px;height:0.7px;background:#6d6af0;"></div>
<div style="left:112.9px;top:205.1px;width:6.5px;height:19.5px;background:#e3e3e6;"></div>
<div style="left:82.9px;top:205.1px;width:30px;height:1px;background:#dcdce0;"></div>
<div style="left:82.9px;top:206.1px;width:30px;height:18.5px;background:#f5f5f7;"></div>
<div style="left:82.9px;top:206.1px;width:30px;height:18.5px;background:transparent;background-image:linear-gradient(90deg,rgba(0,0,0,.05) .4px,transparent .4px),linear-gradient(rgba(0,0,0,.05) .4px,transparent .4px);background-size:3.300px 3.300px;"></div>
<div style="left:95.9px;top:210.7px;width:4px;height:2px;background:#c0bcf2;"></div>
<div style="left:100.4px;top:210.2px;width:2px;height:1.2px;background:#9a9ae8;"></div>
<svg style="left:91.4px;top:210.7px;" width="12" height="12" viewBox="0 0 12 12"><path d="M6 2.500V7L2.500 10.500M6 7 9.500 10.500M3.500 7.500 6 5.500" fill="none" stroke="#e0848a" stroke-width=".5"/><path d="M6 2.500V5" stroke="#7a7ae8" stroke-width=".6"/></svg>
<div style="left:134.7px;top:200.8px;width:45.2px;height:26.2px;background:#050505;border-radius:2px;"></div>
<div style="left:135.8px;top:201.7px;width:43px;height:24.4px;background:#fbfbfb;"></div>
<div style="left:135.8px;top:201.7px;width:43px;height:1.4px;background:#34226f;"></div>
<div style="left:135.8px;top:203.1px;width:43px;height:1.8px;background:#e9e7f2;"></div>
<div style="left:135.8px;top:224.6px;width:43px;height:1.5px;background:#c2453b;"></div>
<div style="left:135.8px;top:205.1px;width:6.5px;height:19.5px;background:#f0f0f3;"></div>
<div style="left:136.6px;top:208.7px;width:3.5px;height:0.7px;background:#6d6af0;"></div>
<div style="left:172.3px;top:205.1px;width:6.5px;height:19.5px;background:#e3e3e6;"></div>
<div style="left:142.3px;top:205.1px;width:30px;height:1px;background:#dcdce0;"></div>
<div style="left:142.3px;top:206.1px;width:30px;height:18.5px;background:#f5f5f7;"></div>
<div style="left:142.3px;top:206.1px;width:30px;height:18.5px;background:transparent;background-image:linear-gradient(90deg,rgba(0,0,0,.05) .4px,transparent .4px),linear-gradient(rgba(0,0,0,.05) .4px,transparent .4px);background-size:3.300px 3.300px;"></div>
<div style="left:173.8px;top:224.6px;width:3px;height:1.5px;background:#7a7a80;"></div>
<svg style="left:145.8px;top:209.7px;" width="24" height="15" viewBox="0 0 24 15"><g font-family="Liberation Serif,serif" font-size="2.400" fill="#111"><text x="1.500" y="4.300">GND</text><text x="18" y="9.300">GND</text><text x="1.500" y="9.300">GND</text><text x="18" y="13.300">GND</text><text x="1.500" y="13.300">GND</text></g><rect x="9.500" y="7" width="5.500" height="4.800" fill="#fff" stroke="#b8433f" stroke-width=".5"/><path d="M10.500 7V5.500H8M11.500 7V3M12.500 7V3M13.500 7V3" fill="none" stroke="#d05a5a" stroke-width=".4"/><path d="M11.500 5V2.500M12.500 5V2.500M13.500 5V2.500" stroke="#4aa04a" stroke-width=".4"/><text x="10" y="10.500" font-family="Liberation Sans,sans-serif" font-size="2" fill="#3a3ae0">USB</text><path d="M6.500 3.500H8M6.500 8.500H9.500M6.500 12.500H8V11H9.500M15 8.500H17.500M15 11H16.500V12.500H17.500" fill="none" stroke="#444" stroke-width=".4"/><text x="9" y="14.300" font-family="Liberation Sans,sans-serif" font-size="1.600" fill="#3a3ae0">U254-051T</text></svg>
<div style="left:194.2px;top:200.8px;width:45.2px;height:26.2px;background:#050505;border-radius:2px;"></div>
<div style="left:201.1px;top:200.8px;width:31px;height:25.4px;background:#eeeaf8;overflow:hidden;"></div>
<svg style="left:201.1px;top:200.8px;" width="31" height="25.4" viewBox="0 0 31 25.4"><path d="M2 9 20 -1 33 9 14 23z" fill="#f8f6fc" stroke="#e8a8a8" stroke-width=".5"/><path d="M5 10 20 2 30 9 15 19z" fill="none" stroke="#e08888" stroke-width=".4"/><path d="M6.500 11.500 22 4.500 27 10.500 11.500 18z" fill="#3a3a3e"/><path d="M6.500 11.500 11.500 18v3L6.500 14z" fill="#1e1e20"/><path d="M11.500 18 27 10.500v2.500L11.500 21z" fill="#2a2a2d"/><path d="M13 21v2M15 20v2M17 19v2M19 18v2M21 17v2M23 16v2M25 15v2" stroke="#b0b0b8" stroke-width=".9"/><path d="M8 10.500 22.500 4" stroke="#77777c" stroke-width=".5"/><path d="M31 20v5.400h-5z" fill="#3a6ad8"/></svg>
<svg style="left:196.3px;top:222px;" width="4.5" height="4" viewBox="0 0 4.5 4"><rect x=".3" y=".3" width="3.900" height="2.600" fill="none" stroke="#ddd" stroke-width=".6"/><path d="M.5 3.600h3.500" stroke="#ddd" stroke-width=".6"/><path d="M1.300 1.800l.8.700 1.200-1.400" fill="none" stroke="#ddd" stroke-width=".5"/></svg>
<div style="left:75.3px;top:240.2px;width:45.2px;height:26.2px;background:#050505;border-radius:2px;"></div>
<div style="left:75.9px;top:241px;width:43.6px;height:24.6px;background:#222226;"></div>
<div style="left:75.9px;top:241px;width:43.6px;height:1.2px;background:#3a2780;"></div>
<div style="left:83px;top:244.4px;width:19.5px;height:6px;background:#3b2d86;"></div>
<div style="left:84.3px;top:245.7px;width:10px;height:0.7px;background:#8a86d8;"></div>
<div style="left:84.3px;top:247.5px;width:6px;height:0.7px;background:#6a66c0;"></div>
<div style="left:88.3px;top:251px;width:18px;height:0.6px;background:#4a4a52;"></div>
<div style="left:88.3px;top:251px;width:6px;height:0.6px;background:#8a8a92;"></div>
<svg style="left:75.3px;top:240.2px;" width="12" height="9.5" viewBox="0 0 12 9.5"><path d="M0 2Q0 0 2 0H12L0 9.500z" fill="#ee4a35"/><path d="M2.200 3.400 3.700 4.900 6.500 1.300" fill="none" stroke="#fff" stroke-width=".9"/></svg>
<svg style="left:78.2px;top:258px;" width="6.6" height="4.8" viewBox="0 0 6.6 4.8"><rect x=".2" y=".2" width="6.200" height="4.400" rx=".5" fill="#d8d8dc"/><path d="M.2 1.700h6.200M.2 3.100h6.200" stroke="#222226" stroke-width=".5"/><path d="M2.200 .2v1.500M4.200 .2v1.500M3.200 3.100v1.500" stroke="#222226" stroke-width=".4"/></svg>
<span class="t" style="left:76.85px;top:70px;font-size:22px;line-height:26.4px;color:#bcbcc0;transform:scale(0.25);transform-origin:0 0;letter-spacing:-1.09px;">make noooise.m4a</span>
<span class="t" style="left:135.5px;top:70px;font-size:22px;line-height:26.4px;color:#bcbcc0;transform:scale(0.25);transform-origin:0 0;letter-spacing:-1.31px;">Screen Recording ...</span>
<span class="t" style="left:195px;top:70px;font-size:22px;line-height:26.4px;color:#bcbcc0;transform:scale(0.25);transform-origin:0 0;letter-spacing:-1.31px;">Screen Recording ...</span>
<span class="t" style="left:76.1px;top:110px;font-size:22px;line-height:26.4px;color:#bcbcc0;transform:scale(0.25);transform-origin:0 0;letter-spacing:-1.31px;">Screen Recording ...</span>
<span class="t" style="left:135.5px;top:110px;font-size:22px;line-height:26.4px;color:#bcbcc0;transform:scale(0.25);transform-origin:0 0;letter-spacing:-1.31px;">Screen Recording ...</span>
<span class="t" style="left:195px;top:110px;font-size:22px;line-height:26.4px;color:#bcbcc0;transform:scale(0.25);transform-origin:0 0;letter-spacing:-1.31px;">Screen Recording ...</span>
<span class="t" style="left:76.1px;top:149px;font-size:22px;line-height:26.4px;color:#bcbcc0;transform:scale(0.25);transform-origin:0 0;letter-spacing:-1.31px;">Screen Recording ...</span>
<span class="t" style="left:135.5px;top:149px;font-size:22px;line-height:26.4px;color:#bcbcc0;transform:scale(0.25);transform-origin:0 0;letter-spacing:-1.31px;">Screen Recording ...</span>
<span class="t" style="left:195px;top:149px;font-size:22px;line-height:26.4px;color:#bcbcc0;transform:scale(0.25);transform-origin:0 0;letter-spacing:-1.31px;">Screen Recording ...</span>
<span class="t" style="left:76.1px;top:189px;font-size:22px;line-height:26.4px;color:#bcbcc0;transform:scale(0.25);transform-origin:0 0;letter-spacing:-1.31px;">Screen Recording ...</span>
<span class="t" style="left:135.5px;top:189px;font-size:22px;line-height:26.4px;color:#bcbcc0;transform:scale(0.25);transform-origin:0 0;letter-spacing:-1.31px;">Screen Recording ...</span>
<span class="t" style="left:195px;top:189px;font-size:22px;line-height:26.4px;color:#bcbcc0;transform:scale(0.25);transform-origin:0 0;letter-spacing:-1.31px;">Screen Recording ...</span>
<span class="t" style="left:76.1px;top:228px;font-size:22px;line-height:26.4px;color:#bcbcc0;transform:scale(0.25);transform-origin:0 0;letter-spacing:-1.31px;">Screen Recording ...</span>
<span class="t" style="left:135.5px;top:228px;font-size:22px;line-height:26.4px;color:#bcbcc0;transform:scale(0.25);transform-origin:0 0;letter-spacing:-1.31px;">Screen Recording ...</span>
<span class="t" style="left:196.05px;top:228px;font-size:22px;line-height:26.4px;color:#bcbcc0;transform:scale(0.25);transform-origin:0 0;letter-spacing:-1.37px;">Screenshot 2023-...</span>
<span class="t" style="left:86.7px;top:268px;font-size:22px;line-height:26.4px;color:#bcbcc0;transform:scale(0.25);transform-origin:0 0;letter-spacing:-1.11px;">Timeline 1</span>
<div style="left:253.9px;top:37px;width:394.2px;height:177.2px;background:#18181b;"></div>
<div style="left:253.9px;top:214.2px;width:394.2px;height:26.4px;background:#222226;"></div>
<div style="left:295.6px;top:37px;width:311.4px;height:177.2px;background:#000;"></div>
<div style="left:303px;top:37.8px;width:295px;height:175.2px;background:#fff;overflow:hidden;border-radius:0 0 2px 2px;">
<div style="left:0px;top:0px;width:295px;height:8.5px;background:#1f1546;"></div>
<div style="left:0px;top:8.5px;width:295px;height:7.3px;background:#2b1e5e;"></div>
<svg style="left:0px;top:0px;" width="21" height="8.5" viewBox="0 0 21 8.5"><path d="M0 0H15.500L21 8.500H0z" fill="#4a2f9c"/><path d="M0 4.500 1.200 8.500H0z" fill="#e0523a"/></svg>
<svg style="left:2.2px;top:2.5px;" width="2.6" height="2.6" viewBox="0 0 2.6 2.6"><circle cx="1.300" cy="1.300" r="1.300" fill="#f0574c"/></svg>
<svg style="left:6.3px;top:2.5px;" width="2.6" height="2.6" viewBox="0 0 2.6 2.6"><circle cx="1.300" cy="1.300" r="1.300" fill="#f5b22e"/></svg>
<svg style="left:10.3px;top:2.5px;" width="2.6" height="2.6" viewBox="0 0 2.6 2.6"><circle cx="1.300" cy="1.300" r="1.300" fill="#3fc24a"/></svg>
<div style="left:20.4px;top:0.8px;width:42.3px;height:7.7px;background:#4b2da2;border-radius:1.500px 1.500px 0 0;border:.5px solid #6a4ed0;border-bottom:none;"></div>
<svg style="left:22.5px;top:2.9px;" width="3" height="3" viewBox="0 0 3 3"><circle cx="1.500" cy="1.500" r="1.500" fill="#b9a8ff"/></svg>
<span class="t" style="left:27px;top:4px;font-size:10.4px;line-height:12.48px;color:#d8d0ff;transform:scale(0.25);transform-origin:0 0;letter-spacing:-0.95px;">EasyEDA(Standard) - A Simpl</span>
<span class="t" style="left:58.5px;top:3px;font-size:14.4px;line-height:17.28px;color:#e8e0ff;transform:scale(0.25);transform-origin:0 0;">×</span>
<svg style="left:65px;top:2.9px;" width="3" height="3" viewBox="0 0 3 3"><path d="M1.500 0 3 3H0z" fill="#3f8cff"/></svg>
<span class="t" style="left:69.5px;top:4px;font-size:10.4px;line-height:12.48px;color:#8e84c8;transform:scale(0.25);transform-origin:0 0;letter-spacing:-0.69px;">BS2-16102116109S_eng.tst...</span>
<span class="t" style="left:102px;top:3px;font-size:14.4px;line-height:17.28px;color:#b0a8e0;transform:scale(0.25);transform-origin:0 0;">×</span>
<span class="t" style="left:109px;top:2px;font-size:15.2px;line-height:18.24px;color:#8a6cf0;transform:scale(0.25);transform-origin:0 0;">+</span>
<span class="t" style="left:259.5px;top:1px;font-size:16px;line-height:19.2px;color:#9088c8;transform:scale(0.25);transform-origin:0 0;">⌄</span>
<div style="left:269.5px;top:1.2px;width:24px;height:5.6px;background:#4d2fb0;border-radius:1px;"></div>
<span class="t" style="left:276px;top:3px;font-size:9.2px;line-height:11.04px;color:#ece8ff;transform:scale(0.25);transform-origin:0 0;font-weight:bold;letter-spacing:-0.51px;">Private browsing</span>
<svg style="left:271.5px;top:2.7px;" width="3" height="2.6" viewBox="0 0 3 2.6"><ellipse cx="1.500" cy="1.300" rx="1.500" ry="1.100" fill="#efeaff"/></svg>
<svg style="left:291.5px;top:0px;" width="3.5" height="3.5" viewBox="0 0 3.5 3.5"><path d="M0 0H3.500V3.500z" fill="#f0523a"/></svg>
<div style="left:34px;top:9.7px;width:190px;height:5px;background:#241852;border-radius:1px;"></div>
<svg style="left:3px;top:10.5px;" width="24" height="3.6" viewBox="0 0 24 3.6"><path d="M2.500 .4 1 1.800 2.500 3.200M1 1.800H4M9.500 .4 11 1.800 9.500 3.200M11 1.800H8" fill="none" stroke="#5a4e96" stroke-width=".5"/><circle cx="21.500" cy="1.800" r="1.300" fill="none" stroke="#8a80c0" stroke-width=".5"/></svg>
<svg style="left:52.5px;top:10.4px;" width="12" height="4" viewBox="0 0 12 4"><path d="M.5 1.500Q3 -1 5.500 1.500L3 3.800z" fill="none" stroke="#5ac8a0" stroke-width=".5"/><rect x="8" y="1.600" width="2.400" height="2" fill="#b8b0e0"/><path d="M8.600 1.600V.9a.6.600 0 0 1 1.200 0v.7" fill="none" stroke="#b8b0e0" stroke-width=".4"/></svg>
<span class="t" style="left:67px;top:11px;font-size:11.6px;line-height:13.92px;color:#7a70b0;transform:scale(0.25);transform-origin:0 0;">https:</span>
<span class="t" style="left:74.09px;top:11px;font-size:11.6px;line-height:13.92px;color:#7a70b0;transform:scale(0.25);transform-origin:0 0;">//</span>
<span class="t" style="left:77.6px;top:11px;font-size:11.6px;line-height:13.92px;color:#e8e4ff;transform:scale(0.25);transform-origin:0 0;">easyeda.com</span>
<span class="t" style="left:93.5px;top:11px;font-size:11.6px;line-height:13.92px;color:#5e5496;transform:scale(0.25);transform-origin:0 0;">/editor#id=9f3c2e0b7a1d4c5e8f6a7b8c9d0e1f2a|3b4c5d6e7f8091a2b3c4d5e6f7a8b9c0|e1f2a3b4c5d6e7f8</span>
<svg style="left:215px;top:10.7px;" width="6" height="3" viewBox="0 0 6 3"><path d="M1.500 .2 1.900 1.100 2.900 1.200 2.200 1.900 2.400 2.800 1.500 2.400.6 2.800.8 1.900.100 1.200 1.100 1.100z" fill="none" stroke="#8a80c0" stroke-width=".3"/></svg>
<svg style="left:227px;top:10.6px;" width="3.4" height="3.4" viewBox="0 0 3.4 3.4"><circle cx="1.700" cy="1.700" r="1.100" fill="#7aa060" opacity=".7"/></svg>
<svg style="left:233.2px;top:10.6px;" width="3.4" height="3.4" viewBox="0 0 3.4 3.4"><circle cx="1.700" cy="1.700" r="1.100" fill="#d8d8e8" opacity=".7"/></svg>
<svg style="left:239.4px;top:10.6px;" width="3.4" height="3.4" viewBox="0 0 3.4 3.4"><circle cx="1.700" cy="1.700" r="1.100" fill="#c0a050" opacity=".7"/></svg>
<svg style="left:245.6px;top:10.6px;" width="3.4" height="3.4" viewBox="0 0 3.4 3.4"><circle cx="1.700" cy="1.700" r="1.100" fill="#a0a0e0" opacity=".7"/></svg>
<svg style="left:251.8px;top:10.6px;" width="3.4" height="3.4" viewBox="0 0 3.4 3.4"><circle cx="1.700" cy="1.700" r="1.100" fill="#5a60c0" opacity=".7"/></svg>
<svg style="left:258px;top:10.6px;" width="3.4" height="3.4" viewBox="0 0 3.4 3.4"><circle cx="1.700" cy="1.700" r="1.100" fill="#4a50b0" opacity=".7"/></svg>
<svg style="left:264.2px;top:10.6px;" width="3.4" height="3.4" viewBox="0 0 3.4 3.4"><circle cx="1.700" cy="1.700" r="1.100" fill="#9a90d0" opacity=".7"/></svg>
<svg style="left:270.4px;top:10.6px;" width="3.4" height="3.4" viewBox="0 0 3.4 3.4"><circle cx="1.700" cy="1.700" r="1.100" fill="#e08040" opacity=".7"/></svg>
<svg style="left:276.6px;top:10.6px;" width="3.4" height="3.4" viewBox="0 0 3.4 3.4"><circle cx="1.700" cy="1.700" r="1.100" fill="#8a80c0" opacity=".7"/></svg>
<svg style="left:282.8px;top:10.6px;" width="3.4" height="3.4" viewBox="0 0 3.4 3.4"><circle cx="1.700" cy="1.700" r="1.100" fill="#7a70b8" opacity=".7"/></svg>
<svg style="left:1.6px;top:17.6px;" width="9" height="4" viewBox="0 0 9 4"><path d="M2 3.500H7.500A1.300 1.300 0 0 0 7.500 1 2 2 0 0 0 3.800.8 1.500 1.500 0 0 0 2 3.500z" fill="none" stroke="#5a8cff" stroke-width=".6"/><circle cx="1" cy="2.500" r=".6" fill="#5a8cff"/></svg>
<span class="t" style="left:9.3px;top:17px;font-size:15.2px;line-height:18.24px;color:#5a8cff;transform:scale(0.25);transform-origin:0 0;font-weight:bold;letter-spacing:-0.8px;">EasyEDA</span>
<span class="t" style="left:25.7px;top:19px;font-size:10px;line-height:12px;color:#4db06a;transform:scale(0.25);transform-origin:0 0;">STD</span>
<span class="t" style="left:30.3px;top:18px;font-size:11.6px;line-height:13.92px;color:#333;transform:scale(0.25);transform-origin:0 0;letter-spacing:-0.27px;">File</span>
<span class="t" style="left:38.3px;top:18px;font-size:11.6px;line-height:13.92px;color:#333;transform:scale(0.25);transform-origin:0 0;letter-spacing:-0.6px;">Edit</span>
<span class="t" style="left:46px;top:18px;font-size:11.6px;line-height:13.92px;color:#333;transform:scale(0.25);transform-origin:0 0;letter-spacing:-0.52px;">Place</span>
<span class="t" style="left:56.2px;top:18px;font-size:11.6px;line-height:13.92px;color:#333;transform:scale(0.25);transform-origin:0 0;letter-spacing:-0.59px;">Format</span>
<span class="t" style="left:68.1px;top:18px;font-size:11.6px;line-height:13.92px;color:#333;transform:scale(0.25);transform-origin:0 0;letter-spacing:-0.43px;">View</span>
<span class="t" style="left:77.5px;top:18px;font-size:11.6px;line-height:13.92px;color:#333;transform:scale(0.25);transform-origin:0 0;letter-spacing:-0.48px;">Design</span>
<span class="t" style="left:89.4px;top:18px;font-size:11.6px;line-height:13.92px;color:#333;transform:scale(0.25);transform-origin:0 0;letter-spacing:-0.7px;">Tools</span>
<span class="t" style="left:98.7px;top:18px;font-size:11.6px;line-height:13.92px;color:#333;transform:scale(0.25);transform-origin:0 0;letter-spacing:-0.42px;">Fabrication</span>
<span class="t" style="left:115.2px;top:18px;font-size:11.6px;line-height:13.92px;color:#333;transform:scale(0.25);transform-origin:0 0;letter-spacing:-0.45px;">Advanced</span>
<span class="t" style="left:130.5px;top:18px;font-size:11.6px;line-height:13.92px;color:#333;transform:scale(0.25);transform-origin:0 0;">Setting</span>
<span class="t" style="left:143px;top:18px;font-size:11.6px;line-height:13.92px;color:#333;transform:scale(0.25);transform-origin:0 0;letter-spacing:-0.46px;">Help</span>
<svg style="left:0px;top:23.2px;" width="295" height="3.4" viewBox="0 0 295 3.4"><rect x="3" y="0.500" width="2.300" height="2.300" rx=".5" fill="none" stroke="#707074" stroke-width=".5"/><rect x="9" y="0.500" width="2.300" height="2.300" rx=".5" fill="none" stroke="#707074" stroke-width=".5"/><rect x="18" y="0.500" width="2.300" height="2.300" rx=".5" fill="none" stroke="#707074" stroke-width=".5"/><rect x="24.5" y="0.500" width="2.300" height="2.300" rx=".5" fill="none" stroke="#d4d4d8" stroke-width=".5"/><rect x="30.5" y="0.500" width="2.300" height="2.300" rx=".5" fill="none" stroke="#d4d4d8" stroke-width=".5"/><rect x="36.5" y="0.500" width="2.300" height="2.300" rx=".5" fill="none" stroke="#d4d4d8" stroke-width=".5"/><rect x="42.5" y="0.500" width="2.300" height="2.300" rx=".5" fill="none" stroke="#d4d4d8" stroke-width=".5"/><rect x="48.5" y="0.500" width="2.300" height="2.300" rx=".5" fill="none" stroke="#d4d4d8" stroke-width=".5"/><rect x="57.5" y="0.500" width="2.300" height="2.300" rx=".5" fill="none" stroke="#707074" stroke-width=".5"/><rect x="64" y="0.500" width="2.300" height="2.300" rx=".5" fill="none" stroke="#707074" stroke-width=".5"/><rect x="70" y="0.500" width="2.300" height="2.300" rx=".5" fill="none" stroke="#707074" stroke-width=".5"/><rect x="78.5" y="0.500" width="2.300" height="2.300" rx=".5" fill="none" stroke="#707074" stroke-width=".5"/><rect x="85" y="0.500" width="2.300" height="2.300" rx=".5" fill="none" stroke="#707074" stroke-width=".5"/><rect x="91.5" y="0.500" width="2.300" height="2.300" rx=".5" fill="none" stroke="#707074" stroke-width=".5"/><path d="M100 2.900l1.300-2.600 1.300 2.600" fill="none" stroke="#e0e0e4" stroke-width=".4"/><path d="M106.2 2.900l1.300-2.600 1.300 2.600" fill="none" stroke="#e0e0e4" stroke-width=".4"/><path d="M112.4 2.900l1.300-2.600 1.300 2.600" fill="none" stroke="#e0e0e4" stroke-width=".4"/><path d="M118.6 2.900l1.300-2.600 1.300 2.600" fill="none" stroke="#e0e0e4" stroke-width=".4"/><path d="M124.8 2.900l1.300-2.600 1.300 2.600" fill="none" stroke="#e0e0e4" stroke-width=".4"/><path d="M131 2.900l1.300-2.600 1.300 2.600" fill="none" stroke="#e0e0e4" stroke-width=".4"/><path d="M137.2 2.900l1.300-2.600 1.300 2.600" fill="none" stroke="#e0e0e4" stroke-width=".4"/><path d="M143.4 2.900l1.300-2.600 1.300 2.600" fill="none" stroke="#e0e0e4" stroke-width=".4"/><path d="M149.6 2.900l1.300-2.600 1.300 2.600" fill="none" stroke="#e0e0e4" stroke-width=".4"/><path d="M155.8 2.900l1.300-2.600 1.300 2.600" fill="none" stroke="#e0e0e4" stroke-width=".4"/><path d="M162 2.900l1.300-2.600 1.300 2.600" fill="none" stroke="#e0e0e4" stroke-width=".4"/><path d="M168.2 2.900l1.300-2.600 1.300 2.600" fill="none" stroke="#e0e0e4" stroke-width=".4"/><path d="M174.4 2.900l1.300-2.600 1.300 2.600" fill="none" stroke="#e0e0e4" stroke-width=".4"/><path d="M15 -.3v3.800" stroke="#ddd" stroke-width=".4"/><path d="M54 -.3v3.800" stroke="#ddd" stroke-width=".4"/><path d="M75 -.3v3.800" stroke="#ddd" stroke-width=".4"/><path d="M96.5 -.3v3.800" stroke="#ddd" stroke-width=".4"/><path d="M179 -.3v3.800" stroke="#ddd" stroke-width=".4"/><rect x="180.5" y="0.500" width="2.500" height="2.300" rx=".5" fill="none" stroke="#77777b" stroke-width=".5"/><rect x="187" y="0.500" width="2.500" height="2.300" rx=".5" fill="none" stroke="#77777b" stroke-width=".5"/><rect x="196" y="0.500" width="2.500" height="2.300" rx=".5" fill="none" stroke="#77777b" stroke-width=".5"/><rect x="211" y="0.500" width="2.500" height="2.300" rx=".5" fill="none" stroke="#77777b" stroke-width=".5"/><rect x="217.5" y="0.500" width="2.500" height="2.300" rx=".5" fill="none" stroke="#77777b" stroke-width=".5"/><rect x="224" y="0.500" width="2.500" height="2.300" rx=".5" fill="none" stroke="#77777b" stroke-width=".5"/></svg>
<svg style="left:270px;top:17.7px;" width="5" height="4" viewBox="0 0 5 4"><path d="M.5 3 3.500 .5 4.500 1.800 1.500 4z" fill="#e8e8ee" stroke="#aaa" stroke-width=".3"/><circle cx="3.800" cy=".9" r=".9" fill="#f04a3a"/></svg>
<svg style="left:275.8px;top:17.3px;" width="4.2" height="4.2" viewBox="0 0 4.2 4.2"><circle cx="2.100" cy="2.100" r="2.100" fill="#1a1a1a"/><circle cx="2.100" cy="1.600" r=".8" fill="#f0e0d0"/><path d="M.7 3.600a1.400 1.400 0 0 1 2.800 0z" fill="#f0e0d0"/></svg>
<span class="t" style="left:282px;top:18px;font-size:11.2px;line-height:13.44px;color:#555;transform:scale(0.25);transform-origin:0 0;">Digitalua ⌄</span>
<div style="left:0px;top:29px;width:295px;height:5.6px;background:#dcdcdc;"></div>
<div style="left:0px;top:29px;width:43.2px;height:8px;background:#f4f4f4;"></div>
<div style="left:39px;top:29.5px;width:12.8px;height:5.1px;background:#c8c8c8;"></div>
<span class="t" style="left:41.5px;top:31px;font-size:12px;line-height:14.4px;color:#444;transform:scale(0.25);transform-origin:0 0;">Start</span>
<div style="left:51.8px;top:29.5px;width:30.2px;height:5.2px;background:#fff;"></div>
<svg style="left:53.3px;top:30.6px;" width="2.6" height="2.8" viewBox="0 0 2.6 2.8"><rect x=".2" y=".2" width="2.200" height="2.400" fill="none" stroke="#e05a5a" stroke-width=".4"/><path d="M.2 1h2.200" stroke="#e05a5a" stroke-width=".4"/></svg>
<span class="t" style="left:57.3px;top:31px;font-size:12px;line-height:14.4px;color:#222;transform:scale(0.25);transform-origin:0 0;">*usb to ttry</span>
<div style="left:82.6px;top:29.5px;width:30px;height:5.1px;background:#d0d0d0;"></div>
<span class="t" style="left:88px;top:31px;font-size:12px;line-height:14.4px;color:#333;transform:scale(0.25);transform-origin:0 0;">whatever we want</span>
<svg style="left:83.8px;top:30.6px;" width="2.6" height="2.8" viewBox="0 0 2.6 2.8"><path d="M.5 0v2.800M1.700 0v2.800" stroke="#e04a4a" stroke-width=".5"/></svg>
<div style="left:113.2px;top:29.5px;width:30.6px;height:5.1px;background:#d0d0d0;"></div>
<span class="t" style="left:119px;top:31px;font-size:12px;line-height:14.4px;color:#333;transform:scale(0.25);transform-origin:0 0;">PCB_whatever w...</span>
<svg style="left:114.5px;top:30.6px;" width="2.6" height="2.8" viewBox="0 0 2.6 2.8"><rect x=".2" y=".2" width="2.200" height="2.400" fill="#4db06a"/></svg>
<div style="left:256.6px;top:29px;width:38.4px;height:147px;background:#e9e9e9;"></div>
<div style="left:256.6px;top:29px;width:38.4px;height:6px;background:#cfcfcf;"></div>
<span class="t" style="left:259px;top:31px;font-size:11.6px;line-height:13.92px;color:#333;transform:scale(0.25);transform-origin:0 0;">Selected Objects</span>
<span class="t" style="left:277.8px;top:31px;font-size:11.6px;line-height:13.92px;color:#333;transform:scale(0.25);transform-origin:0 0;">0</span>
<div style="left:256.6px;top:35.6px;width:38.4px;height:4.5px;background:#e2e2e2;"></div>
<span class="t" style="left:258.8px;top:36px;font-size:12.4px;line-height:14.88px;color:#333;transform:scale(0.25);transform-origin:0 0;">- Canvas Properties</span>
<div style="left:257.3px;top:40.1px;width:37.7px;height:46.3px;background:#f5f5f5;"></div>
<span class="t" style="left:259.1px;top:42px;font-size:10.8px;line-height:12.96px;color:#444;transform:scale(0.25);transform-origin:0 0;">Background</span>
<div style="left:276.9px;top:40.8px;width:15px;height:4.6px;background:#fff;border:.3px solid #d4d4d4;"></div>
<span class="t" style="left:278px;top:42px;font-size:10.8px;line-height:12.96px;color:#333;transform:scale(0.25);transform-origin:0 0;">#FFFFFF</span>
<span class="t" style="left:259.1px;top:47px;font-size:10.8px;line-height:12.96px;color:#444;transform:scale(0.25);transform-origin:0 0;">Visible Grid</span>
<div style="left:276.9px;top:46.59px;width:15px;height:4.6px;background:#fff;border:.3px solid #d4d4d4;"></div>
<span class="t" style="left:278px;top:47px;font-size:10.8px;line-height:12.96px;color:#333;transform:scale(0.25);transform-origin:0 0;">Yes</span>
<span class="t" style="left:289.3px;top:47px;font-size:12px;line-height:14.4px;color:#555;transform:scale(0.25);transform-origin:0 0;">⌄</span>
<span class="t" style="left:259.1px;top:53px;font-size:10.8px;line-height:12.96px;color:#444;transform:scale(0.25);transform-origin:0 0;">Grid Color</span>
<div style="left:276.9px;top:52.38px;width:15px;height:4.6px;background:#c9c9c9;border:.3px solid #d4d4d4;"></div>
<span class="t" style="left:278px;top:53px;font-size:10.8px;line-height:12.96px;color:#333;transform:scale(0.25);transform-origin:0 0;">#CCCCCC</span>
<span class="t" style="left:259.1px;top:59px;font-size:10.8px;line-height:12.96px;color:#444;transform:scale(0.25);transform-origin:0 0;">Grid Style</span>
<div style="left:276.9px;top:58.17px;width:15px;height:4.6px;background:#fff;border:.3px solid #d4d4d4;"></div>
<span class="t" style="left:278px;top:59px;font-size:10.8px;line-height:12.96px;color:#333;transform:scale(0.25);transform-origin:0 0;">line</span>
<span class="t" style="left:289.3px;top:59px;font-size:12px;line-height:14.4px;color:#555;transform:scale(0.25);transform-origin:0 0;">⌄</span>
<span class="t" style="left:259.1px;top:65px;font-size:10.8px;line-height:12.96px;color:#444;transform:scale(0.25);transform-origin:0 0;">Grid Size</span>
<div style="left:276.9px;top:63.96px;width:15px;height:4.6px;background:#fff;border:.3px solid #d4d4d4;"></div>
<span class="t" style="left:278px;top:65px;font-size:10.8px;line-height:12.96px;color:#333;transform:scale(0.25);transform-origin:0 0;">5</span>
<span class="t" style="left:259.1px;top:71px;font-size:10.8px;line-height:12.96px;color:#444;transform:scale(0.25);transform-origin:0 0;">Snap</span>
<div style="left:276.9px;top:69.75px;width:15px;height:4.6px;background:#fff;border:.3px solid #d4d4d4;"></div>
<span class="t" style="left:278px;top:71px;font-size:10.8px;line-height:12.96px;color:#333;transform:scale(0.25);transform-origin:0 0;">Yes</span>
<span class="t" style="left:289.3px;top:70px;font-size:12px;line-height:14.4px;color:#555;transform:scale(0.25);transform-origin:0 0;">⌄</span>
<span class="t" style="left:259.1px;top:76px;font-size:10.8px;line-height:12.96px;color:#444;transform:scale(0.25);transform-origin:0 0;">Snap Size</span>
<div style="left:276.9px;top:75.54px;width:15px;height:4.6px;background:#fff;border:.3px solid #d4d4d4;"></div>
<span class="t" style="left:278px;top:76px;font-size:10.8px;line-height:12.96px;color:#333;transform:scale(0.25);transform-origin:0 0;">5</span>
<span class="t" style="left:259.1px;top:82px;font-size:10.8px;line-height:12.96px;color:#444;transform:scale(0.25);transform-origin:0 0;">Alt Snap</span>
<div style="left:276.9px;top:81.33px;width:15px;height:4.6px;background:#fff;border:.3px solid #d4d4d4;"></div>
<span class="t" style="left:278px;top:82px;font-size:10.8px;line-height:12.96px;color:#333;transform:scale(0.25);transform-origin:0 0;">5</span>
<div style="left:257.3px;top:88.5px;width:37.7px;height:4.2px;background:#ececec;border-bottom:.4px solid #d0d0d0;"></div>
<span class="t" style="left:259.1px;top:90px;font-size:10.4px;line-height:12.48px;color:#444;transform:scale(0.25);transform-origin:0 0;">Mouse-X</span>
<span class="t" style="left:277.5px;top:90px;font-size:10.4px;line-height:12.48px;color:#444;transform:scale(0.25);transform-origin:0 0;">4215</span>
<div style="left:257.3px;top:93.05px;width:37.7px;height:4.2px;background:#ececec;border-bottom:.4px solid #d0d0d0;"></div>
<span class="t" style="left:259.1px;top:94px;font-size:10.4px;line-height:12.48px;color:#444;transform:scale(0.25);transform-origin:0 0;">Mouse-Y</span>
<span class="t" style="left:277.5px;top:94px;font-size:10.4px;line-height:12.48px;color:#444;transform:scale(0.25);transform-origin:0 0;">4215</span>
<div style="left:257.3px;top:97.6px;width:37.7px;height:4.2px;background:#ececec;border-bottom:.4px solid #d0d0d0;"></div>
<span class="t" style="left:259.1px;top:99px;font-size:10.4px;line-height:12.48px;color:#444;transform:scale(0.25);transform-origin:0 0;">Mouse-DX</span>
<span class="t" style="left:277.5px;top:99px;font-size:10.4px;line-height:12.48px;color:#444;transform:scale(0.25);transform-origin:0 0;">1.0</span>
<div style="left:257.3px;top:102.15px;width:37.7px;height:4.2px;background:#ececec;border-bottom:.4px solid #d0d0d0;"></div>
<span class="t" style="left:259.1px;top:103px;font-size:10.4px;line-height:12.48px;color:#444;transform:scale(0.25);transform-origin:0 0;">Mouse-DY</span>
<span class="t" style="left:277.5px;top:103px;font-size:10.4px;line-height:12.48px;color:#444;transform:scale(0.25);transform-origin:0 0;">0.8</span>
<div style="left:256.6px;top:106.5px;width:38.4px;height:70px;background:#dcdcdc;"></div>
<div style="left:256.3px;top:29px;width:0.5px;height:147px;background:#c4c4c4;"></div>
<div style="left:0px;top:29px;width:10.2px;height:147px;background:#e9e9e9;"></div>
<div style="left:0px;top:61.5px;width:10.2px;height:10.2px;background:#fff;"></div>
<div style="left:10.2px;top:29px;width:26px;height:147px;background:#fff;"></div>
<div style="left:36.2px;top:29px;width:3.2px;height:147px;background:#e4e4e4;"></div>
<div style="left:36.8px;top:44.2px;width:2px;height:50px;background:#c2c2c2;border-radius:1px;"></div>
<div style="left:39.4px;top:34.6px;width:3.8px;height:141px;background:#f0f0f0;"></div>
<div style="left:10px;top:29px;width:0.4px;height:147px;background:#d0d0d0;"></div>
<svg style="left:2.8px;top:32px;" width="4.6" height="4.4" viewBox="0 0 4.6 4.4"><path d="M.3 1.200h1.500l.5.600h2v2.600h-4z" fill="none" stroke="#444" stroke-width=".6"/><path d="M.3 2.300h4" stroke="#444" stroke-width=".4"/></svg>
<span class="t" style="left:1.68px;top:38px;font-size:8.8px;line-height:10.56px;color:#444;transform:scale(0.25);transform-origin:0 0;">Project</span>
<svg style="left:2.8px;top:47.5px;" width="4.6" height="4.4" viewBox="0 0 4.6 4.4"><path d="M.3 .7h1M.3 2.200h1M.3 3.700h1" stroke="#444" stroke-width=".8"/><path d="M2 .7h2.400M2 2.200h2.400M2 3.700h2.400" stroke="#444" stroke-width=".5"/></svg>
<span class="t" style="left:1.68px;top:53px;font-size:8.8px;line-height:10.56px;color:#444;transform:scale(0.25);transform-origin:0 0;">Design</span>
<span class="t" style="left:0.76px;top:56px;font-size:8.8px;line-height:10.56px;color:#444;transform:scale(0.25);transform-origin:0 0;">Manager</span>
<svg style="left:2.8px;top:62.2px;" width="4.6" height="4.4" viewBox="0 0 4.6 4.4"><rect x="1" y=".3" width="2.600" height="3.800" rx="1" fill="none" stroke="#5a5af0" stroke-width=".6"/><path d="M0 1.500h1M0 3h1M3.600 1.500h1M3.600 3h1" stroke="#5a5af0" stroke-width=".4"/></svg>
<span class="t" style="left:-0.16px;top:66px;font-size:8.8px;line-height:10.56px;color:#5a5af0;transform:scale(0.25);transform-origin:0 0;">Commonly</span>
<span class="t" style="left:1.74px;top:69px;font-size:8.8px;line-height:10.56px;color:#5a5af0;transform:scale(0.25);transform-origin:0 0;">Library</span>
<svg style="left:2.8px;top:77px;" width="4.6" height="4.4" viewBox="0 0 4.6 4.4"><circle cx="1.900" cy="1.900" r="1.500" fill="none" stroke="#444" stroke-width=".7"/><path d="M3 3 4.300 4.300" stroke="#444" stroke-width=".8"/></svg>
<span class="t" style="left:1.74px;top:83px;font-size:8.8px;line-height:10.56px;color:#444;transform:scale(0.25);transform-origin:0 0;">Library</span>
<svg style="left:2.8px;top:92px;" width="4.6" height="4.4" viewBox="0 0 4.6 4.4"><circle cx="2.300" cy="1.500" r="1.100" fill="none" stroke="#444" stroke-width=".6"/><path d="M.6 4.200q1.700-2.400 3.400 0" fill="none" stroke="#444" stroke-width=".6"/></svg>
<span class="t" style="left:2.17px;top:97px;font-size:8.8px;line-height:10.56px;color:#444;transform:scale(0.25);transform-origin:0 0;">LCSC</span>
<span class="t" style="left:2.53px;top:99px;font-size:8.8px;line-height:10.56px;color:#444;transform:scale(0.25);transform-origin:0 0;">Parts</span>
<svg style="left:2.8px;top:107px;" width="4.6" height="4.4" viewBox="0 0 4.6 4.4"><circle cx="2.300" cy="1.500" r="1.100" fill="none" stroke="#444" stroke-width=".6"/><path d="M.6 4.200q1.700-2.400 3.400 0" fill="none" stroke="#444" stroke-width=".6"/></svg>
<span class="t" style="left:0.88px;top:113px;font-size:8.8px;line-height:10.56px;color:#444;transform:scale(0.25);transform-origin:0 0;">JLCPCB</span>
<svg style="left:2.8px;top:122px;" width="4.6" height="4.4" viewBox="0 0 4.6 4.4"><circle cx="2.300" cy="1.500" r="1.100" fill="none" stroke="#444" stroke-width=".6"/><path d="M.6 4.200q1.700-2.400 3.400 0" fill="none" stroke="#444" stroke-width=".6"/></svg>
<span class="t" style="left:1.25px;top:128px;font-size:8.8px;line-height:10.56px;color:#444;transform:scale(0.25);transform-origin:0 0;">Support</span>
<svg style="left:2.8px;top:150.5px;" width="4.6" height="4.4" viewBox="0 0 4.6 4.4"><path d="M.8 1.200h3l-.3 3.100h-2.400z" fill="none" stroke="#444" stroke-width=".6"/><path d="M.3 1.100h4M1.700 .4h1.200" stroke="#444" stroke-width=".5"/></svg>
<span class="t" style="left:1.19px;top:157px;font-size:8.8px;line-height:10.56px;color:#444;transform:scale(0.25);transform-origin:0 0;">Recycle</span>
<span class="t" style="left:3.51px;top:159px;font-size:8.8px;line-height:10.56px;color:#444;transform:scale(0.25);transform-origin:0 0;">Bin</span>
<div style="left:1.3px;top:68.9px;width:7.6px;height:0.5px;background:#5a5af0;"></div>
<div style="left:12.3px;top:30.6px;width:22.6px;height:5.3px;background:#fff;border:.4px solid #e2e2e2;border-radius:.8px;"></div>
<span class="t" style="left:14.3px;top:32px;font-size:10.8px;line-height:12.96px;color:#aaa;transform:scale(0.25);transform-origin:0 0;">Filter</span>
<span class="t" style="left:13px;top:40px;font-size:11.2px;line-height:13.44px;color:#333;transform:scale(0.25);transform-origin:0 0;">Supply Flag</span>
<svg style="left:15px;top:45.2px;" width="20" height="8" viewBox="0 0 20 8"><path d="M3.500 0v4M1 4h5M2 5.200h3M3 6.400h1" stroke="#333" stroke-width=".5" fill="none"/><path d="M14 6.500V2.500M12 .5 14 2.500 16 .5M12 .5h4" stroke="#777" stroke-width=".5" fill="none"/></svg>
<span class="t" style="left:11.5px;top:53px;font-size:10px;line-height:12px;color:#333;transform:scale(0.25);transform-origin:0 0;">IO Ground</span>
<span class="t" style="left:27px;top:53px;font-size:10px;line-height:12px;color:#333;transform:scale(0.25);transform-origin:0 0;">VCC</span>
<span class="t" style="left:13px;top:57px;font-size:11.2px;line-height:13.44px;color:#333;transform:scale(0.25);transform-origin:0 0;">Resistor</span>
<svg style="left:13.8px;top:63px;" width="20" height="4" viewBox="0 0 20 4"><path d="M0 2h1.500l.5-1 1 2 1-2 1 2 1-2 .5 1H8" fill="none" stroke="#c0504d" stroke-width=".45"/><path d="M12 2h2M18.500 2h1.500" stroke="#c0504d" stroke-width=".45"/><rect x="14" y=".9" width="4.500" height="2.200" fill="none" stroke="#c0504d" stroke-width=".45"/></svg>
<span class="t" style="left:11px;top:70px;font-size:10px;line-height:12px;color:#333;transform:scale(0.25);transform-origin:0 0;">1_0603_US</span>
<span class="t" style="left:24px;top:70px;font-size:10px;line-height:12px;color:#333;transform:scale(0.25);transform-origin:0 0;">_0603_EU</span>
<span class="t" style="left:13px;top:-39px;font-size:11.2px;line-height:13.44px;color:#333;transform:scale(0.25);transform-origin:0 0;"></span>
<svg style="left:13.8px;top:76px;" width="20" height="4" viewBox="0 0 20 4"><path d="M0 2.500h8M12 2.500h8M4 2.500V.3M16 2.500 14.500 .8M16 2.500 17.500 .8" fill="none" stroke="#c0504d" stroke-width=".45"/><path d="M3 3.800h2M15 3.800h2" stroke="#c0504d" stroke-width=".45"/></svg>
<span class="t" style="left:11px;top:82px;font-size:10px;line-height:12px;color:#333;transform:scale(0.25);transform-origin:0 0;">_0388F_U</span>
<span class="t" style="left:24px;top:82px;font-size:10px;line-height:12px;color:#333;transform:scale(0.25);transform-origin:0 0;">_0388F_E</span>
<span class="t" style="left:13px;top:88px;font-size:11.2px;line-height:13.44px;color:#333;transform:scale(0.25);transform-origin:0 0;">Capacitor</span>
<svg style="left:13.8px;top:93.2px;" width="20" height="4" viewBox="0 0 20 4"><path d="M0 2h3.300M4.700 2H8M3.300 .3v3.400M4.700 .3v3.400M12 2h3.300M16.700 2H20M15.300 .3v3.400" fill="none" stroke="#c0504d" stroke-width=".45"/><path d="M16.700 .3q1 1.700 0 3.400" fill="none" stroke="#c0504d" stroke-width=".45"/></svg>
<span class="t" style="left:11px;top:100px;font-size:10px;line-height:12px;color:#333;transform:scale(0.25);transform-origin:0 0;">1_0603_US</span>
<span class="t" style="left:24px;top:100px;font-size:10px;line-height:12px;color:#333;transform:scale(0.25);transform-origin:0 0;">_0603_EU</span>
<span class="t" style="left:13px;top:-39px;font-size:11.2px;line-height:13.44px;color:#333;transform:scale(0.25);transform-origin:0 0;"></span>
<svg style="left:13.8px;top:105.2px;" width="20" height="4" viewBox="0 0 20 4"><path d="M0 2h3.300M4.700 2H8M3.300 .3v3.400M4.700 .3v3.400M12 2h3.300M16.700 2H20M15.300 .3v3.400" fill="none" stroke="#c0504d" stroke-width=".45"/><path d="M16.700 .3q1 1.700 0 3.400" fill="none" stroke="#c0504d" stroke-width=".45"/></svg>
<span class="t" style="left:11px;top:112px;font-size:10px;line-height:12px;color:#333;transform:scale(0.25);transform-origin:0 0;">er_0805_A</span>
<span class="t" style="left:24px;top:112px;font-size:10px;line-height:12px;color:#333;transform:scale(0.25);transform-origin:0 0;">er_0805_A</span>
<span class="t" style="left:13px;top:117px;font-size:11.2px;line-height:13.44px;color:#333;transform:scale(0.25);transform-origin:0 0;">Inductor</span>
<svg style="left:13.8px;top:123px;" width="20" height="4" viewBox="0 0 20 4"><path d="M0 2.500h1.500q.8-2.500 1.600 0 .8-2.500 1.600 0 .8-2.500 1.600 0H8" fill="none" stroke="#c0504d" stroke-width=".45"/><path d="M12 2h2M18.500 2H20" stroke="#c0504d" stroke-width=".45"/><rect x="14" y=".8" width="4.500" height="2.400" fill="#a02c20"/></svg>
<span class="t" style="left:11px;top:130px;font-size:10px;line-height:12px;color:#333;transform:scale(0.25);transform-origin:0 0;">_0603_US</span>
<span class="t" style="left:24px;top:130px;font-size:10px;line-height:12px;color:#333;transform:scale(0.25);transform-origin:0 0;">_0603_EU</span>
<span class="t" style="left:13px;top:135px;font-size:11.2px;line-height:13.44px;color:#333;transform:scale(0.25);transform-origin:0 0;">Power Supply</span>
<svg style="left:13.8px;top:140.7px;" width="20" height="4" viewBox="0 0 20 4"><path d="M0 2h2l1-1.500L4 3.500 5 .5 6 2h2" fill="none" stroke="#c0504d" stroke-width=".4"/><rect x="12.500" y=".5" width="6" height="3" fill="none" stroke="#c0504d" stroke-width=".4" stroke-dasharray=".8 .5"/><path d="M14 2h3" stroke="#c0504d" stroke-width=".4"/></svg>
<span class="t" style="left:11px;top:148px;font-size:10px;line-height:12px;color:#333;transform:scale(0.25);transform-origin:0 0;">CR1220-2</span>
<span class="t" style="left:24px;top:148px;font-size:10px;line-height:12px;color:#333;transform:scale(0.25);transform-origin:0 0;">C55095-T20</span>
<span class="t" style="left:13px;top:153px;font-size:11.2px;line-height:13.44px;color:#333;transform:scale(0.25);transform-origin:0 0;">Connector</span>
<svg style="left:13.8px;top:158.7px;" width="20" height="4" viewBox="0 0 20 4"><path d="M0 2h2" stroke="#c0504d" stroke-width=".45"/><rect x="2" y=".9" width="4.500" height="2.200" rx="1.100" fill="none" stroke="#c0504d" stroke-width=".45"/><rect x="14.500" y=".2" width="3.500" height="3.600" fill="none" stroke="#d8a0a0" stroke-width=".4"/><path d="M12.500 1.200h2M12.500 2.800h2" stroke="#d8a0a0" stroke-width=".4"/></svg>
<span class="t" style="left:11px;top:166px;font-size:10px;line-height:12px;color:#333;transform:scale(0.25);transform-origin:0 0;">R-M-2.54_</span>
<span class="t" style="left:24px;top:166px;font-size:10px;line-height:12px;color:#333;transform:scale(0.25);transform-origin:0 0;">R-F-2.54_</span>
<span class="t" style="left:13px;top:-39px;font-size:11.2px;line-height:13.44px;color:#333;transform:scale(0.25);transform-origin:0 0;"></span>
<svg style="left:13.8px;top:170.7px;" width="20" height="4" viewBox="0 0 20 4"><path d="M0 2h2" stroke="#c0504d" stroke-width=".45"/><rect x="2" y=".9" width="4.500" height="2.200" rx="1.100" fill="none" stroke="#c0504d" stroke-width=".45"/><rect x="14.500" y=".2" width="3.500" height="3.600" fill="none" stroke="#d8a0a0" stroke-width=".4"/><path d="M12.500 1.200h2M12.500 2.800h2" stroke="#d8a0a0" stroke-width=".4"/></svg>
<div style="left:43.3px;top:38.7px;width:213px;height:136.5px;background:#fff;background-image:linear-gradient(90deg,#f7f7f7 .5px,transparent .5px),linear-gradient(#f7f7f7 .5px,transparent .5px);background-size:4.780px 4.780px;background-position:.9px 4.200px;"></div>
<div style="left:41px;top:34.6px;width:215.3px;height:4.1px;background:#f3f3f3;border-bottom:.4px solid #c8c8c8;background-image:linear-gradient(90deg,#b8b8b8 .4px,transparent .4px);background-size:4.780px 1.500px;background-repeat:repeat-x;background-position:3.100px 2.900px;"></div>
<div style="left:41px;top:38.7px;width:2.3px;height:137px;background:#f1f1f1;border-right:.4px solid #c8c8c8;background-image:linear-gradient(#c0c0c0 .4px,transparent .4px);background-size:1.200px 4.780px;background-repeat:repeat-y;background-position:1.100px 4.400px;"></div>
<span class="t" style="left:49.8px;top:35px;font-size:7.6px;line-height:9.12px;color:#777;transform:scale(0.25);transform-origin:0 0;">4100</span>
<span class="t" style="left:73.7px;top:35px;font-size:7.6px;line-height:9.12px;color:#777;transform:scale(0.25);transform-origin:0 0;">4150</span>
<span class="t" style="left:97.6px;top:35px;font-size:7.6px;line-height:9.12px;color:#777;transform:scale(0.25);transform-origin:0 0;">4200</span>
<span class="t" style="left:121.5px;top:35px;font-size:7.6px;line-height:9.12px;color:#777;transform:scale(0.25);transform-origin:0 0;">4250</span>
<span class="t" style="left:145.4px;top:35px;font-size:7.6px;line-height:9.12px;color:#777;transform:scale(0.25);transform-origin:0 0;">4300</span>
<span class="t" style="left:169.3px;top:35px;font-size:7.6px;line-height:9.12px;color:#777;transform:scale(0.25);transform-origin:0 0;">4350</span>
<span class="t" style="left:193.2px;top:35px;font-size:7.6px;line-height:9.12px;color:#777;transform:scale(0.25);transform-origin:0 0;">4400</span>
<span class="t" style="left:217.1px;top:35px;font-size:7.6px;line-height:9.12px;color:#777;transform:scale(0.25);transform-origin:0 0;">4450</span>
<span class="t" style="left:241px;top:35px;font-size:7.6px;line-height:9.12px;color:#777;transform:scale(0.25);transform-origin:0 0;">4500</span>
<div style="left:151.2px;top:34.6px;width:0.5px;height:4.1px;background:#5a5af0;"></div>
<div style="left:41px;top:71px;width:2.3px;height:0.5px;background:#5a5af0;"></div>
<svg style="left:0px;top:0px;" width="295" height="175.2" viewBox="303 37.800 295 175.200"><defs><clipPath id="cv"><rect x="346.300" y="76.500" width="213" height="136.500"/></clipPath></defs><g clip-path="url(#cv)"><g font-family="Liberation Serif,serif" font-size="11.200" fill="#111" stroke="#111" stroke-width=".25"><text x="383.3" y="79.4">GND</text><path d="M409.6 73.8v3.800" stroke="#222" stroke-width="1" fill="none"/><path d="M411.9 71.2v9" stroke="#1a1a1a" stroke-width="1.200" fill="none"/><path d="M414.4 66.95v17.500" stroke="#0c0c0c" stroke-width="1.500" fill="none"/><text x="378.3" y="117.4">GND</text><path d="M404.6 111.8v3.800" stroke="#222" stroke-width="1" fill="none"/><path d="M406.9 109.2v9" stroke="#1a1a1a" stroke-width="1.200" fill="none"/><path d="M409.4 104.95v17.500" stroke="#0c0c0c" stroke-width="1.500" fill="none"/><text x="373.5" y="156.1">GND</text><path d="M400.1 150.5v3.800" stroke="#222" stroke-width="1" fill="none"/><path d="M402.4 147.9v9" stroke="#1a1a1a" stroke-width="1.200" fill="none"/><path d="M404.9 143.65v17.500" stroke="#0c0c0c" stroke-width="1.500" fill="none"/><text x="373.5" y="184.3">GND</text><path d="M400.1 178.7v3.800" stroke="#222" stroke-width="1" fill="none"/><path d="M402.4 176.1v9" stroke="#1a1a1a" stroke-width="1.200" fill="none"/><path d="M404.9 171.85v17.500" stroke="#0c0c0c" stroke-width="1.500" fill="none"/><text x="526" y="156.1">GND</text><path d="M519.4 143.65v17.500" stroke="#0c0c0c" stroke-width="1.500" fill="none"/><path d="M521.9 147.9v9" stroke="#1a1a1a" stroke-width="1.200" fill="none"/><path d="M524.2 150.5v3.800" stroke="#222" stroke-width="1" fill="none"/><text x="526" y="184.3">GND</text><path d="M519.4 171.85v17.500" stroke="#0c0c0c" stroke-width="1.500" fill="none"/><path d="M521.9 176.1v9" stroke="#1a1a1a" stroke-width="1.200" fill="none"/><path d="M524.2 178.7v3.800" stroke="#222" stroke-width="1" fill="none"/></g><path d="M409.300 113.700H418.500M404.900 152.400H414.500M404.900 180.600H414.500M509.500 152.400H519.400M509.500 180.600H519.400" stroke="#333" stroke-width="1" fill="none"/><path d="M418.500 113.700H442.800M414.500 152.400V161.700M414.500 180.600V171.400M509.500 152.400V161.700M509.500 180.600V171.400M461.800 76.500V114.500M471.400 76.500V114.500M481 76.500V114.500" stroke="#3f9e3a" stroke-width="1.400" fill="none"/><path d="M442.800 113.200V133.700M452.200 113.700V133.700M461.800 114.500V133.700M471.400 114.500V133.700M481 114.500V133.700M414 161.700H433.500M414 171.400H433.500M490.300 161.700H510M490.300 171.400H510" stroke="#a43e38" stroke-width="1.400" fill="none"/><rect x="433.600" y="133.700" width="56.700" height="46.600" rx="2.200" fill="#fff" stroke="#a43e38" stroke-width="1.400"/><g font-family="Liberation Sans,sans-serif" font-size="8.900" fill="#3a30ee" stroke="#3a30ee" stroke-width=".2"><text font-size="9.500" transform="translate(441.5 128.200) rotate(-90)">5</text><text font-size="9.500" transform="translate(450.7 128.200) rotate(-90)">4</text><text font-size="9.500" transform="translate(460.2 128.200) rotate(-90)">3</text><text font-size="9.500" transform="translate(469.8 128.200) rotate(-90)">2</text><text font-size="9.500" transform="translate(479.4 128.200) rotate(-90)">1</text><text font-size="9.200" transform="translate(446.2 156.04) rotate(-90)">GND</text><text font-size="9.200" transform="translate(455.6 144.8) rotate(-90)">ID</text><text font-size="9.200" transform="translate(465.2 147.62) rotate(-90)">D+</text><text font-size="9.200" transform="translate(474.7 145.31) rotate(-90)">D-</text><text font-size="9.200" transform="translate(484.3 160.65) rotate(-90)">VBUS</text><g font-size="9.500"><text x="423" y="160.900">6</text><text x="423" y="170.900">7</text><text x="435.600" y="165.100">6</text><text x="435.600" y="174.700">7</text><text x="483" y="165.100">9</text><text x="483" y="174.700">8</text><text x="495.400" y="160.900">9</text><text x="495.400" y="170.900">8</text></g></g><g font-family="Liberation Sans,sans-serif" font-size="8.700" fill="#2a1fa8" stroke="#2a1fa8" stroke-width=".15"><text x="450.500" y="189.500">USB1</text><text x="450.500" y="198.200">U254-051T-4BH83-F1S</text></g><path d="M457.200 94.600Q450.200 101 453.300 108.500" fill="none" stroke="#111" stroke-width="1"/><path d="M451.300 105.800 453.700 109.700 456.600 106.700z" fill="#111"/><path d="M455.800 106.800 457.500 109.500" stroke="#111" stroke-width=".6"/><circle cx="456.600" cy="105.500" r=".5" fill="#3f9e3a"/></g></svg>
<div style="left:41px;top:34.6px;width:215.3px;height:4.1px;background:#f3f3f3;border-bottom:.4px solid #c8c8c8;background-image:linear-gradient(90deg,#b8b8b8 .4px,transparent .4px);background-size:4.780px 1.500px;background-repeat:repeat-x;background-position:3.100px 2.900px;"></div>
<span class="t" style="left:49.8px;top:35px;font-size:7.6px;line-height:9.12px;color:#777;transform:scale(0.25);transform-origin:0 0;">4100</span>
<span class="t" style="left:73.7px;top:35px;font-size:7.6px;line-height:9.12px;color:#777;transform:scale(0.25);transform-origin:0 0;">4150</span>
<span class="t" style="left:97.6px;top:35px;font-size:7.6px;line-height:9.12px;color:#777;transform:scale(0.25);transform-origin:0 0;">4200</span>
<span class="t" style="left:121.5px;top:35px;font-size:7.6px;line-height:9.12px;color:#777;transform:scale(0.25);transform-origin:0 0;">4250</span>
<span class="t" style="left:145.4px;top:35px;font-size:7.6px;line-height:9.12px;color:#777;transform:scale(0.25);transform-origin:0 0;">4300</span>
<span class="t" style="left:169.3px;top:35px;font-size:7.6px;line-height:9.12px;color:#777;transform:scale(0.25);transform-origin:0 0;">4350</span>
<span class="t" style="left:193.2px;top:35px;font-size:7.6px;line-height:9.12px;color:#777;transform:scale(0.25);transform-origin:0 0;">4400</span>
<span class="t" style="left:217.1px;top:35px;font-size:7.6px;line-height:9.12px;color:#777;transform:scale(0.25);transform-origin:0 0;">4450</span>
<span class="t" style="left:241px;top:35px;font-size:7.6px;line-height:9.12px;color:#777;transform:scale(0.25);transform-origin:0 0;">4500</span>
<div style="left:151.2px;top:34.6px;width:0.5px;height:4.1px;background:#5a5af0;"></div>
<div style="left:201px;top:36px;width:39.6px;height:17.8px;background:#f7f7f7;border:.4px solid #d0d0d0;"></div>
<div style="left:201px;top:36px;width:39.6px;height:4px;background:#e4e4e4;"></div>
<span class="t" style="left:202.5px;top:37px;font-size:10.8px;line-height:12.96px;color:#333;transform:scale(0.25);transform-origin:0 0;">Wiring Tools</span>
<span class="t" style="left:237.5px;top:36px;font-size:10.8px;line-height:12.96px;color:#555;transform:scale(0.25);transform-origin:0 0;">–</span>
<svg style="left:201px;top:36px;" width="39.6" height="17.8" viewBox="0 0 39.6 17.8"><path d="M2.3 7.3l1.500 0 1 2.200 1.300 0" fill="none" stroke="#444" stroke-width=".5"/><path d="M7.67 7.3l1.500 0 1 2.200 1.300 0" fill="none" stroke="#444" stroke-width=".5"/><path d="M13.04 7.3l1.500 0 1 2.200 1.300 0" fill="none" stroke="#444" stroke-width=".5"/><ellipse cx="20.31" cy="8.5" rx="1.900" ry="1.200" fill="none" stroke="#555" stroke-width=".5"/><path d="M23.78 8.6h3.800M25.68 7v3" stroke="#555" stroke-width=".5"/><path d="M29.15 8.6h3.800M31.05 7v3" stroke="#555" stroke-width=".5"/><ellipse cx="36.42" cy="8.5" rx="1.900" ry="1.200" fill="none" stroke="#555" stroke-width=".5"/><path d="M2.3 12.6h3.600l-1.800 2.600z" fill="none" stroke="#555" stroke-width=".5"/><path d="M7.67 12.6h3.600l-1.800 2.600z" fill="none" stroke="#555" stroke-width=".5"/><path d="M13.04 15.2l3.200-2.600" stroke="#444" stroke-width=".6"/><path d="M18.41 15.2l3.200-2.600" stroke="#444" stroke-width=".6"/><path d="M23.78 15.2l3.200-2.600" stroke="#444" stroke-width=".6"/><path d="M29.15 12.3l3.200 3.200M32.35 12.3l-3.200 3.200" stroke="#333" stroke-width=".7"/></svg>
<div style="left:241.3px;top:36px;width:13px;height:44.3px;background:#f7f7f7;border:.4px solid #d0d0d0;"></div>
<div style="left:241.3px;top:36px;width:13px;height:4px;background:#e4e4e4;"></div>
<span class="t" style="left:242.3px;top:37px;font-size:10.4px;line-height:12.48px;color:#333;transform:scale(0.25);transform-origin:0 0;">Drawi...</span>
<span class="t" style="left:252px;top:37px;font-size:10.4px;line-height:12.48px;color:#555;transform:scale(0.25);transform-origin:0 0;">–</span>
<svg style="left:241.3px;top:36px;" width="13" height="44.3" viewBox="0 0 13 44.3"><rect x="2.5" y="7.6" width="3.400" height="2.800" rx=".4" fill="none" stroke="#444" stroke-width=".55"/><path d="M7.9 9.9q1.700-3.400 1.700-.6t1.700-.6" fill="none" stroke="#555" stroke-width=".55"/><path d="M2.7 12.8l3 1.500-3 1.500" fill="none" stroke="#444" stroke-width=".6"/><path d="M7.9 13h3.200M9.5 13v2.800" stroke="#444" stroke-width=".7"/><circle cx="4.2" cy="19.4" r="1.500" fill="none" stroke="#555" stroke-width=".55"/><rect x="7.9" y="17.9" width="3.400" height="2.800" rx=".4" fill="none" stroke="#444" stroke-width=".55"/><path d="M2.5 25.6q1.700-3.400 1.700-.6t1.700-.6" fill="none" stroke="#555" stroke-width=".55"/><path d="M8.1 23.3l3 1.500-3 1.500" fill="none" stroke="#444" stroke-width=".6"/><path d="M2.5 28.9h3.200M4.1 28.9v2.800" stroke="#444" stroke-width=".7"/><circle cx="9.6" cy="30.2" r="1.500" fill="none" stroke="#555" stroke-width=".55"/><rect x="2.5" y="34.2" width="3.400" height="2.800" rx=".4" fill="none" stroke="#444" stroke-width=".55"/><path d="M7.9 36.5q1.700-3.400 1.700-.6t1.700-.6" fill="none" stroke="#555" stroke-width=".55"/><path d="M2.7 39.3l3 1.500-3 1.500" fill="none" stroke="#444" stroke-width=".6"/><path d="M7.9 39.5h3.200M9.5 39.5v2.800" stroke="#444" stroke-width=".7"/></svg>
<div style="left:49.5px;top:166.5px;width:22px;height:4.9px;background:#fff;border:.4px solid #b8b8b8;"></div>
<span class="t" style="left:51px;top:168px;font-size:10.8px;line-height:12.96px;color:#333;transform:scale(0.25);transform-origin:0 0;">*Sheet_1</span>
<span class="t" style="left:67px;top:167px;font-size:12px;line-height:14.4px;color:#777;transform:scale(0.25);transform-origin:0 0;">⌄</span>
<div style="left:72.2px;top:166.5px;width:4.4px;height:4.9px;background:#f4f4f4;border:.4px solid #999;"></div>
<span class="t" style="left:73.3px;top:167px;font-size:14.4px;line-height:17.28px;color:#333;transform:scale(0.25);transform-origin:0 0;font-weight:bold;">+</span>
</div>
<div style="left:262.6px;top:219.9px;width:375.4px;height:0.7px;background:#4a4a50;"></div>
<div style="left:569.5px;top:217.5px;width:1.3px;height:4.6px;background:#f0f0f0;border-radius:.5px;"></div>
<svg style="left:262.8px;top:229.4px;" width="7.6" height="6.4" viewBox="0 0 7.6 6.4"><rect x=".4" y=".4" width="6.800" height="5.600" fill="none" stroke="#9b9ba0" stroke-width=".7" stroke-dasharray="1.600 1"/></svg>
<svg style="left:276.6px;top:231.95px;" width="3.4" height="1.7" viewBox="0 0 3.4 1.7"><path d="M0 0 1.7 1.53 3.4 0" fill="none" stroke="#8a8a8f" stroke-width="0.7"/></svg>
<svg style="left:324.5px;top:230.8px;" width="18" height="4" viewBox="0 0 18 4"><path d="M2 .2.300 2 2 3.800M16 .2 17.700 2 16 3.800" fill="none" stroke="#77777c" stroke-width=".6"/><circle cx="9" cy="2" r="1.500" fill="#b0b0b4"/></svg>
<svg style="left:399.2px;top:230px;" width="8.6" height="5.2" viewBox="0 0 8.6 5.2"><path d="M.5 0v5.200" stroke="#9b9ba0" stroke-width="1"/><path d="M4.600 0v5.200L1 2.600zM8.400 0v5.200L4.800 2.600z" fill="#9b9ba0"/></svg>
<svg style="left:416px;top:230px;" width="4.2" height="5.2" viewBox="0 0 4.2 5.2"><path d="M4.200 0v5.200L0 2.600z" fill="#9b9ba0"/></svg>
<svg style="left:429.1px;top:230.2px;" width="4.8" height="4.8" viewBox="0 0 4.8 4.8"><rect width="4.800" height="4.800" rx=".4" fill="#9b9ba0"/></svg>
<svg style="left:443.4px;top:230px;" width="4.2" height="5.2" viewBox="0 0 4.2 5.2"><path d="M0 0v5.200L4.200 2.600z" fill="#c4c4c8"/></svg>
<svg style="left:455.4px;top:230px;" width="8.6" height="5.2" viewBox="0 0 8.6 5.2"><path d="M8.100 0v5.200" stroke="#9b9ba0" stroke-width="1"/><path d="M0 0v5.200L3.600 2.600zM3.800 0v5.200L7.400 2.600z" fill="#9b9ba0"/></svg>
<svg style="left:471.4px;top:229.6px;" width="9" height="6" viewBox="0 0 9 6"><rect x=".5" y="1.300" width="8" height="4.200" rx="2.100" fill="none" stroke="#9b9ba0" stroke-width=".8"/><path d="M4.800 -.2 3.300 1.300 4.800 2.800" fill="none" stroke="#9b9ba0" stroke-width=".7"/></svg>
<svg style="left:596.6px;top:230px;" width="8.2" height="5.2" viewBox="0 0 8.2 5.2"><rect x="1" y=".6" width="6.200" height="4" rx=".8" fill="none" stroke="#9b9ba0" stroke-width=".8"/><path d="M0 1.800v1.600M8.200 1.800v1.600" stroke="#9b9ba0" stroke-width=".6"/></svg>
<svg style="left:614.5px;top:230px;" width="5.2" height="5.2" viewBox="0 0 5.2 5.2"><path d="M0 0v5.200L3.900 2.600z" fill="#9b9ba0"/><path d="M4.600 0v5.200" stroke="#9b9ba0" stroke-width="1"/></svg>
<svg style="left:630px;top:230px;" width="5.2" height="5.2" viewBox="0 0 5.2 5.2"><path d="M5.200 0v5.200L1.300 2.600z" fill="#9b9ba0"/><path d="M.6 0v5.200" stroke="#9b9ba0" stroke-width="1"/></svg>
<div style="left:647.8px;top:36.5px;width:180.2px;height:204.1px;background:#28282e;"></div>
<svg style="left:662.3px;top:41.2px;" width="10" height="7.4" viewBox="0 0 10 7.4"><rect x=".4" y=".4" width="9.200" height="6.600" rx=".8" fill="none" stroke="#e8e8e8" stroke-width=".8"/><path d="M2.200 .4v6.600M7.800 .4v6.600M.4 2.600h1.800M.4 4.800h1.800M7.800 2.600h1.800M7.800 4.800h1.800" stroke="#e8e8e8" stroke-width=".6"/></svg>
<span class="t" style="left:660px;top:52px;font-size:21.6px;line-height:25.92px;color:#f4f4f4;transform:scale(0.25);transform-origin:0 0;font-weight:bold;">Video</span>
<svg style="left:689.8px;top:41.2px;" width="10" height="7.4" viewBox="0 0 10 7.4"><path d="M3.400 6V1.300L7.800 .4v4.800" fill="none" stroke="#4c4c52" stroke-width=".7"/><ellipse cx="2.500" cy="6.100" rx="1.100" ry=".8" fill="#4c4c52"/><ellipse cx="6.900" cy="5.300" rx="1.100" ry=".8" fill="#4c4c52"/></svg>
<span class="t" style="left:687.89px;top:52px;font-size:21.6px;line-height:25.92px;color:#56565c;transform:scale(0.25);transform-origin:0 0;">Audio</span>
<svg style="left:717.7px;top:41.2px;" width="10" height="7.4" viewBox="0 0 10 7.4"><path d="M1.500 7 6 2.500" stroke="#4c4c52" stroke-width="1.100" stroke-linecap="round"/><path d="M7.200 0v1.600M6.400 .8h1.600M8.600 3v1.200M8 3.600h1.200M4 .3v1M3.500 .8h1" stroke="#4c4c52" stroke-width=".5"/></svg>
<span class="t" style="left:714.5px;top:52px;font-size:21.6px;line-height:25.92px;color:#56565c;transform:scale(0.25);transform-origin:0 0;">Effects</span>
<svg style="left:747.5px;top:41.2px;" width="10" height="7.4" viewBox="0 0 10 7.4"><rect x=".4" y=".4" width="9.200" height="6.600" fill="none" stroke="#4c4c52" stroke-width=".7"/><path d="M.4 .4 5 3.700.4 7M9.600 .4 5 3.700 9.600 7" fill="none" stroke="#4c4c52" stroke-width=".6"/></svg>
<span class="t" style="left:740.75px;top:52px;font-size:21.6px;line-height:25.92px;color:#56565c;transform:scale(0.25);transform-origin:0 0;">Transition</span>
<svg style="left:776.6px;top:41.2px;" width="10" height="7.4" viewBox="0 0 10 7.4"><rect x=".4" y=".4" width="9.200" height="6.600" rx=".8" fill="none" stroke="#4c4c52" stroke-width=".7"/><path d="M1.500 6 4 3.500 5.500 5 7 4 8.800 6z" fill="#4c4c52"/></svg>
<span class="t" style="left:774.1px;top:52px;font-size:21.6px;line-height:25.92px;color:#56565c;transform:scale(0.25);transform-origin:0 0;">Image</span>
<svg style="left:804.5px;top:41.2px;" width="10" height="7.4" viewBox="0 0 10 7.4"><rect x=".4" y="1" width="6" height="5.800" rx=".6" fill="none" stroke="#a8a8ac" stroke-width=".8"/><path d="M2 1V-.2H8V5" fill="none" stroke="#a8a8ac" stroke-width=".7"/><path d="M6.400 3 9.600 1.400v5L6.400 4.800z" fill="#a8a8ac"/></svg>
<span class="t" style="left:805.15px;top:52px;font-size:21.6px;line-height:25.92px;color:#b4b4b8;transform:scale(0.25);transform-origin:0 0;">File</span>
<div style="left:653.4px;top:58.5px;width:28.4px;height:1px;background:#e5473a;"></div>
<div style="left:647.8px;top:59.6px;width:180.2px;height:0.7px;background:#151517;"></div>
<div style="left:654.3px;top:64.1px;width:10px;height:4.6px;background:#17171a;border-radius:2.300px;"></div>
<svg style="left:659.8px;top:64.7px;" width="3.4" height="3.4" viewBox="0 0 3.4 3.4"><circle cx="1.700" cy="1.700" r="1.600" fill="#ee4b3a"/></svg>
<span class="t" style="left:668.7px;top:63px;font-size:21.2px;line-height:25.44px;color:#f4f4f4;transform:scale(0.25);transform-origin:0 0;font-weight:bold;letter-spacing:-0.05px;">Transform</span>
<svg style="left:803.1px;top:64.9px;" width="3" height="3" viewBox="0 0 3 3"><path d="M1.500 0 3 1.500 1.500 3 0 1.500z" fill="#b4b4b8"/></svg>
<svg style="left:815.4px;top:63.8px;" width="5.2" height="5.2" viewBox="0 0 5.2 5.2"><path d="M1.100 1.300A2.200 2.200 0 1 1 .4 2.900" fill="none" stroke="#77777c" stroke-width=".6"/><path d="M.2 .3v1.600h1.600" fill="none" stroke="#77777c" stroke-width=".6"/></svg>
<span class="t" style="left:690.66px;top:77px;font-size:20.4px;line-height:24.48px;color:#b4b4b8;transform:scale(0.25);transform-origin:0 0;">Zoom</span>
<span class="t" style="left:709.4px;top:77px;font-size:20px;line-height:24px;color:#a4a4a8;transform:scale(0.25);transform-origin:0 0;">X</span>
<div style="left:715.8px;top:75.6px;width:23.2px;height:8px;background:#1b1b1f;border-radius:1px;border:.5px solid #141416;"></div>
<span class="t" style="left:720.64px;top:77px;font-size:21.6px;line-height:25.92px;color:#e4e4e6;transform:scale(0.25);transform-origin:0 0;">1.000</span>
<span class="t" style="left:762.9px;top:77px;font-size:20px;line-height:24px;color:#a4a4a8;transform:scale(0.25);transform-origin:0 0;">Y</span>
<div style="left:769.1px;top:75.6px;width:23.2px;height:8px;background:#1b1b1f;border-radius:1px;border:.5px solid #141416;"></div>
<span class="t" style="left:773.94px;top:77px;font-size:21.6px;line-height:25.92px;color:#e4e4e6;transform:scale(0.25);transform-origin:0 0;">1.000</span>
<svg style="left:803.1px;top:78.1px;" width="3" height="3" viewBox="0 0 3 3"><path d="M1.500 0 3 1.500 1.500 3 0 1.500z" fill="#b4b4b8"/></svg>
<svg style="left:815.4px;top:77px;" width="5.2" height="5.2" viewBox="0 0 5.2 5.2"><path d="M1.100 1.300A2.200 2.200 0 1 1 .4 2.900" fill="none" stroke="#77777c" stroke-width=".6"/><path d="M.2 .3v1.600h1.600" fill="none" stroke="#77777c" stroke-width=".6"/></svg>
<span class="t" style="left:685.56px;top:87px;font-size:20.4px;line-height:24.48px;color:#b4b4b8;transform:scale(0.25);transform-origin:0 0;">Position</span>
<span class="t" style="left:709.4px;top:87px;font-size:20px;line-height:24px;color:#a4a4a8;transform:scale(0.25);transform-origin:0 0;">X</span>
<div style="left:715.8px;top:86.2px;width:23.2px;height:8px;background:#1b1b1f;border-radius:1px;border:.5px solid #141416;"></div>
<span class="t" style="left:720.64px;top:87px;font-size:21.6px;line-height:25.92px;color:#e4e4e6;transform:scale(0.25);transform-origin:0 0;">0.000</span>
<span class="t" style="left:762.9px;top:87px;font-size:20px;line-height:24px;color:#a4a4a8;transform:scale(0.25);transform-origin:0 0;">Y</span>
<div style="left:769.1px;top:86.2px;width:23.2px;height:8px;background:#1b1b1f;border-radius:1px;border:.5px solid #141416;"></div>
<span class="t" style="left:773.94px;top:87px;font-size:21.6px;line-height:25.92px;color:#e4e4e6;transform:scale(0.25);transform-origin:0 0;">0.000</span>
<svg style="left:803.1px;top:88.7px;" width="3" height="3" viewBox="0 0 3 3"><path d="M1.500 0 3 1.500 1.500 3 0 1.500z" fill="#b4b4b8"/></svg>
<svg style="left:815.4px;top:87.6px;" width="5.2" height="5.2" viewBox="0 0 5.2 5.2"><path d="M1.100 1.300A2.200 2.200 0 1 1 .4 2.900" fill="none" stroke="#77777c" stroke-width=".6"/><path d="M.2 .3v1.600h1.600" fill="none" stroke="#77777c" stroke-width=".6"/></svg>
<span class="t" style="left:670.52px;top:98px;font-size:20.4px;line-height:24.48px;color:#b4b4b8;transform:scale(0.25);transform-origin:0 0;">Rotation Angle</span>
<div style="left:708.4px;top:100.75px;width:57.9px;height:0.7px;background:#45454b;"></div>
<svg style="left:736.1px;top:99.6px;" width="3" height="3" viewBox="0 0 3 3"><circle cx="1.500" cy="1.500" r="1.450" fill="#9c9ca1"/></svg>
<div style="left:769.1px;top:97.1px;width:23.2px;height:8px;background:#1b1b1f;border-radius:1px;border:.5px solid #141416;"></div>
<span class="t" style="left:773.94px;top:98px;font-size:21.6px;line-height:25.92px;color:#e4e4e6;transform:scale(0.25);transform-origin:0 0;">0.000</span>
<svg style="left:803.1px;top:99.6px;" width="3" height="3" viewBox="0 0 3 3"><path d="M1.500 0 3 1.500 1.500 3 0 1.500z" fill="#b4b4b8"/></svg>
<svg style="left:815.4px;top:98.5px;" width="5.2" height="5.2" viewBox="0 0 5.2 5.2"><path d="M1.100 1.300A2.200 2.200 0 1 1 .4 2.900" fill="none" stroke="#77777c" stroke-width=".6"/><path d="M.2 .3v1.600h1.600" fill="none" stroke="#77777c" stroke-width=".6"/></svg>
<span class="t" style="left:674.5px;top:109px;font-size:20.4px;line-height:24.48px;color:#b4b4b8;transform:scale(0.25);transform-origin:0 0;">Anchor Point</span>
<span class="t" style="left:709.4px;top:109px;font-size:20px;line-height:24px;color:#a4a4a8;transform:scale(0.25);transform-origin:0 0;">X</span>
<div style="left:715.8px;top:108px;width:23.2px;height:8px;background:#1b1b1f;border-radius:1px;border:.5px solid #141416;"></div>
<span class="t" style="left:720.64px;top:109px;font-size:21.6px;line-height:25.92px;color:#e4e4e6;transform:scale(0.25);transform-origin:0 0;">0.000</span>
<span class="t" style="left:762.9px;top:109px;font-size:20px;line-height:24px;color:#a4a4a8;transform:scale(0.25);transform-origin:0 0;">Y</span>
<div style="left:769.1px;top:108px;width:23.2px;height:8px;background:#1b1b1f;border-radius:1px;border:.5px solid #141416;"></div>
<span class="t" style="left:773.94px;top:109px;font-size:21.6px;line-height:25.92px;color:#e4e4e6;transform:scale(0.25);transform-origin:0 0;">0.000</span>
<svg style="left:803.1px;top:110.5px;" width="3" height="3" viewBox="0 0 3 3"><path d="M1.500 0 3 1.500 1.500 3 0 1.500z" fill="#b4b4b8"/></svg>
<svg style="left:815.4px;top:109.4px;" width="5.2" height="5.2" viewBox="0 0 5.2 5.2"><path d="M1.100 1.300A2.200 2.200 0 1 1 .4 2.900" fill="none" stroke="#77777c" stroke-width=".6"/><path d="M.2 .3v1.600h1.600" fill="none" stroke="#77777c" stroke-width=".6"/></svg>
<span class="t" style="left:692.36px;top:120px;font-size:20.4px;line-height:24.48px;color:#b4b4b8;transform:scale(0.25);transform-origin:0 0;">Pitch</span>
<div style="left:708.4px;top:122.45px;width:57.9px;height:0.7px;background:#45454b;"></div>
<svg style="left:736.1px;top:121.3px;" width="3" height="3" viewBox="0 0 3 3"><circle cx="1.500" cy="1.500" r="1.450" fill="#9c9ca1"/></svg>
<div style="left:769.1px;top:118.8px;width:23.2px;height:8px;background:#1b1b1f;border-radius:1px;border:.5px solid #141416;"></div>
<span class="t" style="left:773.94px;top:120px;font-size:21.6px;line-height:25.92px;color:#e4e4e6;transform:scale(0.25);transform-origin:0 0;">0.000</span>
<svg style="left:803.1px;top:121.3px;" width="3" height="3" viewBox="0 0 3 3"><path d="M1.500 0 3 1.500 1.500 3 0 1.500z" fill="#b4b4b8"/></svg>
<svg style="left:815.4px;top:120.2px;" width="5.2" height="5.2" viewBox="0 0 5.2 5.2"><path d="M1.100 1.300A2.200 2.200 0 1 1 .4 2.900" fill="none" stroke="#77777c" stroke-width=".6"/><path d="M.2 .3v1.600h1.600" fill="none" stroke="#77777c" stroke-width=".6"/></svg>
<span class="t" style="left:694.16px;top:131px;font-size:20.4px;line-height:24.48px;color:#b4b4b8;transform:scale(0.25);transform-origin:0 0;">Yaw</span>
<div style="left:708.4px;top:133.15px;width:57.9px;height:0.7px;background:#45454b;"></div>
<svg style="left:736.1px;top:132px;" width="3" height="3" viewBox="0 0 3 3"><circle cx="1.500" cy="1.500" r="1.450" fill="#9c9ca1"/></svg>
<div style="left:769.1px;top:129.5px;width:23.2px;height:8px;background:#1b1b1f;border-radius:1px;border:.5px solid #141416;"></div>
<span class="t" style="left:773.94px;top:131px;font-size:21.6px;line-height:25.92px;color:#e4e4e6;transform:scale(0.25);transform-origin:0 0;">0.000</span>
<svg style="left:803.1px;top:132px;" width="3" height="3" viewBox="0 0 3 3"><path d="M1.500 0 3 1.500 1.500 3 0 1.500z" fill="#b4b4b8"/></svg>
<svg style="left:815.4px;top:130.9px;" width="5.2" height="5.2" viewBox="0 0 5.2 5.2"><path d="M1.100 1.300A2.200 2.200 0 1 1 .4 2.900" fill="none" stroke="#77777c" stroke-width=".6"/><path d="M.2 .3v1.600h1.600" fill="none" stroke="#77777c" stroke-width=".6"/></svg>
<svg style="left:747.5px;top:76.6px;" width="6.4" height="6" viewBox="0 0 6.4 6"><g fill="none" stroke="#c8c8cc" stroke-width=".9" transform="rotate(-45 3.200 3)"><rect x="0" y="1.900" width="3.600" height="2.200" rx="1.100"/><rect x="2.800" y="1.900" width="3.600" height="2.200" rx="1.100"/></g></svg>
<span class="t" style="left:695.48px;top:142px;font-size:20.4px;line-height:24.48px;color:#b4b4b8;transform:scale(0.25);transform-origin:0 0;">Flip</span>
<div style="left:710.2px;top:140.3px;width:8.8px;height:8.8px;background:#1d1d21;border-radius:1px;border:.5px solid #38383e;"></div>
<svg style="left:711.6px;top:142.5px;" width="6" height="4.4" viewBox="0 0 6 4.4"><path d="M3 0v4.400" stroke="#b0b0b4" stroke-width=".5"/><path d="M0 .8 1.800 2.200 0 3.600zM6 .8 4.200 2.200 6 3.600z" fill="#b0b0b4"/></svg>
<div style="left:727.4px;top:140.3px;width:8.8px;height:8.8px;background:#1d1d21;border-radius:1px;border:.5px solid #38383e;"></div>
<svg style="left:729.6px;top:141.7px;" width="4.4" height="6" viewBox="0 0 4.4 6"><path d="M0 3h4.400" stroke="#b0b0b4" stroke-width=".5"/><path d="M.8 0 2.200 1.800 3.600 0zM.8 6 2.200 4.200 3.600 6z" fill="#b0b0b4"/></svg>
<svg style="left:815.4px;top:142px;" width="5.2" height="5.2" viewBox="0 0 5.2 5.2"><path d="M1.100 1.300A2.200 2.200 0 1 1 .4 2.900" fill="none" stroke="#77777c" stroke-width=".6"/><path d="M.2 .3v1.600h1.600" fill="none" stroke="#77777c" stroke-width=".6"/></svg>
<div style="left:647.8px;top:152.2px;width:178.2px;height:0.8px;background:#151517;"></div>
<div style="left:654.3px;top:157.7px;width:10px;height:4.6px;background:#17171a;border-radius:2.300px;"></div>
<svg style="left:659.8px;top:158.3px;" width="3.4" height="3.4" viewBox="0 0 3.4 3.4"><circle cx="1.700" cy="1.700" r="1.600" fill="#ee4b3a"/></svg>
<span class="t" style="left:668.7px;top:157px;font-size:21.2px;line-height:25.44px;color:#f4f4f4;transform:scale(0.25);transform-origin:0 0;font-weight:bold;letter-spacing:0.22px;">Cropping</span>
<svg style="left:803.1px;top:158.5px;" width="3" height="3" viewBox="0 0 3 3"><path d="M1.500 0 3 1.500 1.500 3 0 1.500z" fill="#b4b4b8"/></svg>
<svg style="left:815.4px;top:157.4px;" width="5.2" height="5.2" viewBox="0 0 5.2 5.2"><path d="M1.100 1.300A2.200 2.200 0 1 1 .4 2.900" fill="none" stroke="#77777c" stroke-width=".6"/><path d="M.2 .3v1.600h1.600" fill="none" stroke="#77777c" stroke-width=".6"/></svg>
<div style="left:647.8px;top:166.1px;width:178.2px;height:0.8px;background:#151517;"></div>
<div style="left:654.3px;top:170.9px;width:10px;height:4.6px;background:#17171a;border-radius:2.300px;"></div>
<svg style="left:655.4px;top:171.5px;" width="3.4" height="3.4" viewBox="0 0 3.4 3.4"><circle cx="1.700" cy="1.700" r="1.600" fill="#b0b0b4"/></svg>
<span class="t" style="left:668.7px;top:170px;font-size:21.2px;line-height:25.44px;color:#f4f4f4;transform:scale(0.25);transform-origin:0 0;font-weight:bold;letter-spacing:-0.33px;">Dynamic Zoom</span>
<svg style="left:815.4px;top:170.6px;" width="5.2" height="5.2" viewBox="0 0 5.2 5.2"><path d="M1.100 1.300A2.200 2.200 0 1 1 .4 2.900" fill="none" stroke="#47474d" stroke-width=".6"/><path d="M.2 .3v1.600h1.600" fill="none" stroke="#47474d" stroke-width=".6"/></svg>
<div style="left:647.8px;top:179.6px;width:178.2px;height:0.8px;background:#151517;"></div>
<div style="left:654.3px;top:184.3px;width:10px;height:4.6px;background:#17171a;border-radius:2.300px;"></div>
<svg style="left:659.8px;top:184.9px;" width="3.4" height="3.4" viewBox="0 0 3.4 3.4"><circle cx="1.700" cy="1.700" r="1.600" fill="#ee4b3a"/></svg>
<span class="t" style="left:668.7px;top:184px;font-size:21.2px;line-height:25.44px;color:#f4f4f4;transform:scale(0.25);transform-origin:0 0;font-weight:bold;letter-spacing:0.05px;">Composite</span>
<svg style="left:803.1px;top:185.1px;" width="3" height="3" viewBox="0 0 3 3"><path d="M1.500 0 3 1.500 1.500 3 0 1.500z" fill="#b4b4b8"/></svg>
<svg style="left:815.4px;top:184px;" width="5.2" height="5.2" viewBox="0 0 5.2 5.2"><path d="M1.100 1.300A2.200 2.200 0 1 1 .4 2.900" fill="none" stroke="#77777c" stroke-width=".6"/><path d="M.2 .3v1.600h1.600" fill="none" stroke="#77777c" stroke-width=".6"/></svg>
<span class="t" style="left:665.15px;top:197px;font-size:20.4px;line-height:24.48px;color:#b4b4b8;transform:scale(0.25);transform-origin:0 0;">Composite Mode</span>
<div style="left:708.5px;top:195.8px;width:83.9px;height:8px;background:#1b1b1f;border-radius:1px;border:.5px solid #141416;"></div>
<span class="t" style="left:713px;top:197px;font-size:21.6px;line-height:25.92px;color:#e4e4e6;transform:scale(0.25);transform-origin:0 0;">Normal</span>
<svg style="left:783.6px;top:199.15px;" width="3.4" height="1.7" viewBox="0 0 3.4 1.7"><path d="M0 0 1.7 1.53 3.4 0" fill="none" stroke="#8a8a8f" stroke-width="0.7"/></svg>
<svg style="left:815.4px;top:197.2px;" width="5.2" height="5.2" viewBox="0 0 5.2 5.2"><path d="M1.100 1.300A2.200 2.200 0 1 1 .4 2.900" fill="none" stroke="#77777c" stroke-width=".6"/><path d="M.2 .3v1.600h1.600" fill="none" stroke="#77777c" stroke-width=".6"/></svg>
<span class="t" style="left:686.41px;top:208px;font-size:20.4px;line-height:24.48px;color:#b4b4b8;transform:scale(0.25);transform-origin:0 0;">Opacity</span>
<div style="left:708.5px;top:210.25px;width:56.5px;height:0.7px;background:#45454b;"></div>
<svg style="left:764.1px;top:209.1px;" width="3" height="3" viewBox="0 0 3 3"><circle cx="1.500" cy="1.500" r="1.450" fill="#9c9ca1"/></svg>
<div style="left:769.1px;top:206.6px;width:23.2px;height:8px;background:#1b1b1f;border-radius:1px;border:.5px solid #141416;"></div>
<span class="t" style="left:772.44px;top:208px;font-size:21.6px;line-height:25.92px;color:#e4e4e6;transform:scale(0.25);transform-origin:0 0;">100.00</span>
<svg style="left:803.1px;top:209.1px;" width="3" height="3" viewBox="0 0 3 3"><path d="M1.500 0 3 1.500 1.500 3 0 1.500z" fill="#b4b4b8"/></svg>
<svg style="left:815.4px;top:208px;" width="5.2" height="5.2" viewBox="0 0 5.2 5.2"><path d="M1.100 1.300A2.200 2.200 0 1 1 .4 2.900" fill="none" stroke="#77777c" stroke-width=".6"/><path d="M.2 .3v1.600h1.600" fill="none" stroke="#77777c" stroke-width=".6"/></svg>
<div style="left:647.8px;top:218.2px;width:178.2px;height:0.8px;background:#151517;"></div>
<div style="left:654.3px;top:223.4px;width:10px;height:4.6px;background:#17171a;border-radius:2.300px;"></div>
<svg style="left:659.8px;top:224px;" width="3.4" height="3.4" viewBox="0 0 3.4 3.4"><circle cx="1.700" cy="1.700" r="1.600" fill="#8a3028"/></svg>
<span class="t" style="left:668.7px;top:223px;font-size:21.2px;line-height:25.44px;color:#f4f4f4;transform:scale(0.25);transform-origin:0 0;font-weight:bold;letter-spacing:-0.1px;">Speed Change</span>
<svg style="left:815.4px;top:223.1px;" width="5.2" height="5.2" viewBox="0 0 5.2 5.2"><path d="M1.100 1.300A2.200 2.200 0 1 1 .4 2.900" fill="none" stroke="#77777c" stroke-width=".6"/><path d="M.2 .3v1.600h1.600" fill="none" stroke="#77777c" stroke-width=".6"/></svg>
<div style="left:647.8px;top:232px;width:178.2px;height:0.8px;background:#151517;"></div>
<div style="left:654.3px;top:237px;width:10px;height:4.6px;background:#17171a;border-radius:2.300px;"></div>
<svg style="left:659.8px;top:237.6px;" width="3.4" height="3.4" viewBox="0 0 3.4 3.4"><circle cx="1.700" cy="1.700" r="1.600" fill="#ee4b3a"/></svg>
<span class="t" style="left:668.7px;top:236px;font-size:21.2px;line-height:25.44px;color:#f4f4f4;transform:scale(0.25);transform-origin:0 0;font-weight:bold;letter-spacing:0.24px;">Stabilization</span>
<svg style="left:815.4px;top:236.7px;" width="5.2" height="5.2" viewBox="0 0 5.2 5.2"><path d="M1.100 1.300A2.200 2.200 0 1 1 .4 2.900" fill="none" stroke="#77777c" stroke-width=".6"/><path d="M.2 .3v1.600h1.600" fill="none" stroke="#77777c" stroke-width=".6"/></svg>
<div style="left:825.8px;top:60.3px;width:2.2px;height:180px;background:#1d1d21;"></div>
<div style="left:826.2px;top:62px;width:1.6px;height:150px;background:#4a4a50;border-radius:.8px;"></div>
<div style="left:253.9px;top:240.6px;width:574.1px;height:21.8px;background:#222226;"></div>
<div style="left:253.9px;top:240.3px;width:574.1px;height:0.8px;background:#111113;"></div>
<div style="left:253.9px;top:262px;width:574.1px;height:0.8px;background:#111113;"></div>
<svg style="left:261.3px;top:248px;" width="10.4" height="6.6" viewBox="0 0 10.4 6.6"><rect x=".3" y=".3" width="9.800" height="6" rx=".5" fill="none" stroke="#8a8a8f" stroke-width=".6"/><path d="M.3 2.300h9.800M.3 4.300h9.800M3.500 .3v2M6.500 .3v2M5 2.300v2" stroke="#8a8a8f" stroke-width=".5"/></svg>
<svg style="left:373.6px;top:247.8px;" width="5" height="7.2" viewBox="0 0 5 7.2"><path d="M.3 .2V6L1.800 4.700 2.900 7 3.900 6.500 2.800 4.300 4.700 4.100z" fill="#e8503c"/></svg>
<svg style="left:387.8px;top:247.9px;" width="11" height="7" viewBox="0 0 11 7"><rect x=".3" y="1.200" width="3.200" height="4.600" rx=".5" fill="none" stroke="#66666c" stroke-width=".6"/><rect x="7.500" y="1.200" width="3.200" height="4.600" rx=".5" fill="none" stroke="#66666c" stroke-width=".6"/><rect x="4.300" y=".3" width="2.400" height="6.400" rx=".6" fill="none" stroke="#66666c" stroke-width=".6"/><path d="M2.500 3.500 1.300 2.600v1.800zM8.500 3.500 9.700 2.600v1.800z" fill="#66666c"/></svg>
<svg style="left:405.2px;top:247.9px;" width="11" height="7" viewBox="0 0 11 7"><path d="M3.300 .5Q1 .5 1 3.500T3.300 6.500M7.700 .5Q10 .5 10 3.500T7.700 6.500" fill="none" stroke="#66666c" stroke-width=".6"/><path d="M5.500 0v7" stroke="#66666c" stroke-width=".7"/><path d="M4 3.500 2.800 2.600v1.800zM7 3.500 8.200 2.600v1.800z" fill="#66666c"/></svg>
<svg style="left:422.6px;top:247.9px;" width="11" height="7" viewBox="0 0 11 7"><rect x=".3" y="1.300" width="10.400" height="4.400" rx=".8" fill="#b4b4b8"/><path d="M2 1.300v1.200M4 1.300v1.200M6 1.300v1.200M8 1.300v1.200M2 5.700v-1.200M4 5.700v-1.200M6 5.700v-1.200M8 5.700v-1.200" stroke="#222226" stroke-width=".7"/></svg>
<div style="left:439.3px;top:245.6px;width:0.8px;height:11.6px;background:#38383e;"></div>
<svg style="left:443.9px;top:247.8px;" width="12" height="7.6" viewBox="0 0 12 7.6"><rect x="3" y=".3" width="5.600" height="4" rx=".5" fill="none" stroke="#66666c" stroke-width=".6"/><rect x=".3" y="2" width="3" height="3.600" rx=".4" fill="#222226" stroke="#66666c" stroke-width=".6"/><rect x="8.300" y="2" width="3" height="3.600" rx=".4" fill="#222226" stroke="#66666c" stroke-width=".6"/><path d="M5.800 4.800V7M4.800 6 5.800 7.200 6.800 6" fill="none" stroke="#66666c" stroke-width=".6"/></svg>
<svg style="left:461.2px;top:247.8px;" width="12" height="7.6" viewBox="0 0 12 7.6"><rect x=".3" y=".3" width="6.400" height="4.800" rx=".5" fill="none" stroke="#66666c" stroke-width=".6"/><rect x="5.500" y="1.800" width="4.500" height="3.800" rx=".4" fill="#222226" stroke="#66666c" stroke-width=".6"/><path d="M7.800 6V7.200M6.800 6.300 7.800 7.400 8.800 6.300" fill="none" stroke="#66666c" stroke-width=".6"/></svg>
<svg style="left:478.6px;top:247.8px;" width="12" height="7.6" viewBox="0 0 12 7.6"><rect x=".3" y="1.500" width="3.600" height="4" rx=".4" fill="none" stroke="#66666c" stroke-width=".6"/><rect x="3.900" y=".3" width="4" height="5.200" rx=".4" fill="#222226" stroke="#66666c" stroke-width=".6"/><rect x="7.900" y="1.500" width="3.600" height="4" rx=".4" fill="none" stroke="#66666c" stroke-width=".6"/><path d="M5.900 1.500v2.800M4.900 3.300 5.900 4.500 6.900 3.300" fill="none" stroke="#66666c" stroke-width=".6"/></svg>
<div style="left:495.8px;top:245.6px;width:0.8px;height:11.6px;background:#38383e;"></div>
<svg style="left:503.8px;top:247.4px;" width="8" height="8" viewBox="0 0 8 8"><path d="M4.700 1.200A2.800 2.800 0 1 0 6.800 3.300" fill="none" stroke="#f0f0f0" stroke-width="1.400"/><path d="M4.200 .3 5.400 1.500M6.500 2.600 7.700 3.800" stroke="#222226" stroke-width=".5"/></svg>
<svg style="left:520px;top:247.6px;" width="8.6" height="7.6" viewBox="0 0 8.6 7.6"><g fill="none" stroke="#f0f0f0" stroke-width="1.100" transform="rotate(-40 4.300 3.800)"><rect x="0" y="2.200" width="5" height="3.200" rx="1.600"/><rect x="3.600" y="2.200" width="5" height="3.200" rx="1.600"/></g></svg>
<svg style="left:537.7px;top:247.6px;" width="7" height="7.4" viewBox="0 0 7 7.4"><rect x=".4" y="3.200" width="6.200" height="3.800" rx=".5" fill="none" stroke="#c4c4c8" stroke-width=".8"/><path d="M1.800 3.200V2a1.700 1.700 0 0 1 3.400 0v1.200" fill="none" stroke="#c4c4c8" stroke-width=".8"/><path d="M2.500 5.100h2" stroke="#c4c4c8" stroke-width=".7"/></svg>
<div style="left:552.4px;top:245.6px;width:0.8px;height:11.6px;background:#38383e;"></div>
<svg style="left:558.4px;top:248.6px;" width="4.6" height="5.6" viewBox="0 0 4.6 5.6"><path d="M0 0h4.600v5.600L2.300 3.900 0 5.600z" fill="#2f7bf0"/></svg>
<svg style="left:567.7px;top:250.75px;" width="3.4" height="1.7" viewBox="0 0 3.4 1.7"><path d="M0 0 1.7 1.53 3.4 0" fill="none" stroke="#8a8a8f" stroke-width="0.7"/></svg>
<svg style="left:577.3px;top:248.7px;" width="4.8" height="5.6" viewBox="0 0 4.8 5.6"><path d="M0 0h4.800v3.800L2.400 5.600 0 3.800z" fill="#2f7bf0"/></svg>
<svg style="left:587.3px;top:250.75px;" width="3.4" height="1.7" viewBox="0 0 3.4 1.7"><path d="M0 0 1.7 1.53 3.4 0" fill="none" stroke="#8a8a8f" stroke-width="0.7"/></svg>
<div style="left:595.7px;top:245.6px;width:0.8px;height:11.6px;background:#38383e;"></div>
<svg style="left:600.8px;top:247.8px;" width="10.4" height="7.6" viewBox="0 0 10.4 7.6"><path d="M0 .4h6.500M0 3.800h3.500" stroke="#6a6a70" stroke-width=".6"/><rect x="0" y=".9" width="6.500" height="2.100" fill="#6a6a70" opacity=".5"/><circle cx="7" cy="4.600" r="1.900" fill="none" stroke="#6a6a70" stroke-width=".7"/><path d="M8.300 6 9.800 7.500" stroke="#6a6a70" stroke-width=".8"/></svg>
<svg style="left:619px;top:247.8px;" width="10.4" height="7.6" viewBox="0 0 10.4 7.6"><path d="M0 .4h6.500M0 3.800h3.500" stroke="#6a6a70" stroke-width=".6"/><rect x="0" y=".9" width="6.500" height="2.100" fill="#6a6a70" opacity=".5"/><circle cx="7" cy="4.600" r="1.900" fill="none" stroke="#6a6a70" stroke-width=".7"/><path d="M8.300 6 9.800 7.500" stroke="#6a6a70" stroke-width=".8"/></svg>
<svg style="left:636.4px;top:247.8px;" width="10.4" height="7.6" viewBox="0 0 10.4 7.6"><path d="M0 .4h6.500M0 3.800h3.500" stroke="#e8e8e8" stroke-width=".6"/><rect x="0" y=".9" width="6.500" height="2.100" fill="#e8e8e8" opacity=".9"/><circle cx="7" cy="4.600" r="1.900" fill="none" stroke="#e8e8e8" stroke-width=".7"/><path d="M8.300 6 9.800 7.500" stroke="#e8e8e8" stroke-width=".8"/></svg>
<svg style="left:654.6px;top:249px;" width="4.8" height="4.8" viewBox="0 0 4.8 4.8"><circle cx="2.400" cy="2.400" r="2.300" fill="#3a3a40"/><path d="M1.300 2.400h2.200" stroke="#8a8a8f" stroke-width=".6"/></svg>
<div style="left:665.7px;top:251.1px;width:36.8px;height:0.7px;background:#45454b;"></div>
<svg style="left:695.2px;top:249.6px;" width="3.6" height="3.6" viewBox="0 0 3.6 3.6"><circle cx="1.800" cy="1.800" r="1.700" fill="#a4a4a9"/></svg>
<svg style="left:709.4px;top:249px;" width="4.8" height="4.8" viewBox="0 0 4.8 4.8"><circle cx="2.400" cy="2.400" r="2.300" fill="#3a3a40"/><path d="M1.300 2.400h2.200M2.400 1.300v2.200" stroke="#8a8a8f" stroke-width=".6"/></svg>
<svg style="left:748px;top:248px;" width="8.4" height="6.8" viewBox="0 0 8.4 6.8"><path d="M.3 2.300H2L4.300 .4V6.400L2 4.500H.3z" fill="#e8e8e8"/><path d="M5.400 2.100Q6.300 3.400 5.400 4.700M6.500 1Q8.100 3.400 6.500 5.800" fill="none" stroke="#e8e8e8" stroke-width=".6"/></svg>
<div style="left:761px;top:250.7px;width:34px;height:1.3px;background:#3aa53a;border-radius:.6px;"></div>
<svg style="left:793.4px;top:249.6px;" width="3.6" height="3.6" viewBox="0 0 3.6 3.6"><circle cx="1.800" cy="1.800" r="1.700" fill="#a4a4a9"/></svg>
<div style="left:801px;top:248.7px;width:10.8px;height:5.4px;background:#5c5c62;border-radius:1px;"></div>
<span class="t" style="left:802.92px;top:249px;font-size:15.2px;line-height:18.24px;color:#1e1e22;transform:scale(0.25);transform-origin:0 0;font-weight:bold;">DIM</span>
<div style="left:817.2px;top:247.8px;width:1.6px;height:7.2px;background:#3a3a40;"></div>
<div style="left:820px;top:247.8px;width:1.6px;height:7.2px;background:#3a3a40;"></div>
<div style="left:253.9px;top:262.8px;width:100.7px;height:190.2px;background:#212125;"></div>
<div style="left:354.6px;top:262.8px;width:473.4px;height:190.2px;background:#28282e;"></div>
<div style="left:354.2px;top:262.8px;width:0.9px;height:190.2px;background:#151517;"></div>
<div style="left:354.6px;top:262.8px;width:473.4px;height:16.7px;background:#26262b;"></div>
<div style="left:253.9px;top:279.3px;width:574.1px;height:0.7px;background:#18181b;"></div>
<span class="t" style="left:279.6px;top:267px;font-size:9.2px;line-height:11.04px;color:#f0f0f0;font-weight:bold;letter-spacing:-0.14px;">01:01:09:05</span>
<svg style="left:354.6px;top:263.2px;" width="473.4" height="4" viewBox="0 0 473.4 4"><path d="M-0.15 0v1.600" stroke="#606066" stroke-width=".5"/><path d="M5.12 0v3.500" stroke="#606066" stroke-width=".5"/><path d="M10.39 0v1.600" stroke="#606066" stroke-width=".5"/><path d="M15.66 0v3.500" stroke="#606066" stroke-width=".5"/><path d="M20.93 0v1.600" stroke="#606066" stroke-width=".5"/><path d="M26.2 0v3.500" stroke="#606066" stroke-width=".5"/><path d="M31.47 0v1.600" stroke="#606066" stroke-width=".5"/><path d="M36.74 0v3.500" stroke="#606066" stroke-width=".5"/><path d="M42.01 0v1.600" stroke="#606066" stroke-width=".5"/><path d="M47.28 0v3.500" stroke="#606066" stroke-width=".5"/><path d="M52.55 0v1.600" stroke="#606066" stroke-width=".5"/><path d="M57.82 0v3.500" stroke="#606066" stroke-width=".5"/><path d="M63.09 0v1.600" stroke="#606066" stroke-width=".5"/><path d="M68.36 0v3.500" stroke="#606066" stroke-width=".5"/><path d="M73.63 0v1.600" stroke="#606066" stroke-width=".5"/><path d="M78.9 0v3.500" stroke="#606066" stroke-width=".5"/><path d="M84.17 0v1.600" stroke="#606066" stroke-width=".5"/><path d="M89.44 0v3.500" stroke="#606066" stroke-width=".5"/><path d="M94.71 0v1.600" stroke="#606066" stroke-width=".5"/><path d="M99.98 0v3.500" stroke="#606066" stroke-width=".5"/><path d="M105.25 0v1.600" stroke="#606066" stroke-width=".5"/><path d="M110.52 0v3.500" stroke="#606066" stroke-width=".5"/><path d="M115.79 0v1.600" stroke="#606066" stroke-width=".5"/><path d="M121.06 0v3.500" stroke="#606066" stroke-width=".5"/><path d="M126.33 0v1.600" stroke="#606066" stroke-width=".5"/><path d="M131.6 0v3.500" stroke="#606066" stroke-width=".5"/><path d="M136.87 0v1.600" stroke="#606066" stroke-width=".5"/><path d="M142.14 0v3.500" stroke="#606066" stroke-width=".5"/><path d="M147.41 0v1.600" stroke="#606066" stroke-width=".5"/><path d="M152.68 0v3.500" stroke="#606066" stroke-width=".5"/><path d="M157.95 0v1.600" stroke="#606066" stroke-width=".5"/><path d="M163.22 0v3.500" stroke="#606066" stroke-width=".5"/><path d="M168.49 0v1.600" stroke="#606066" stroke-width=".5"/><path d="M173.76 0v3.500" stroke="#606066" stroke-width=".5"/><path d="M179.03 0v1.600" stroke="#606066" stroke-width=".5"/><path d="M184.3 0v3.500" stroke="#606066" stroke-width=".5"/><path d="M189.57 0v1.600" stroke="#606066" stroke-width=".5"/><path d="M194.84 0v3.500" stroke="#606066" stroke-width=".5"/><path d="M200.11 0v1.600" stroke="#606066" stroke-width=".5"/><path d="M205.38 0v3.500" stroke="#606066" stroke-width=".5"/><path d="M210.65 0v1.600" stroke="#606066" stroke-width=".5"/><path d="M215.92 0v3.500" stroke="#606066" stroke-width=".5"/><path d="M221.19 0v1.600" stroke="#606066" stroke-width=".5"/><path d="M226.46 0v3.500" stroke="#606066" stroke-width=".5"/><path d="M231.73 0v1.600" stroke="#606066" stroke-width=".5"/><path d="M237 0v3.500" stroke="#606066" stroke-width=".5"/><path d="M242.27 0v1.600" stroke="#606066" stroke-width=".5"/><path d="M247.54 0v3.500" stroke="#606066" stroke-width=".5"/><path d="M252.81 0v1.600" stroke="#606066" stroke-width=".5"/><path d="M258.08 0v3.500" stroke="#606066" stroke-width=".5"/><path d="M263.35 0v1.600" stroke="#606066" stroke-width=".5"/><path d="M268.62 0v3.500" stroke="#606066" stroke-width=".5"/><path d="M273.89 0v1.600" stroke="#606066" stroke-width=".5"/><path d="M279.16 0v3.500" stroke="#606066" stroke-width=".5"/><path d="M284.43 0v1.600" stroke="#606066" stroke-width=".5"/><path d="M289.7 0v3.500" stroke="#606066" stroke-width=".5"/><path d="M294.97 0v1.600" stroke="#606066" stroke-width=".5"/><path d="M300.24 0v3.500" stroke="#606066" stroke-width=".5"/><path d="M305.51 0v1.600" stroke="#606066" stroke-width=".5"/><path d="M310.78 0v3.500" stroke="#606066" stroke-width=".5"/><path d="M316.05 0v1.600" stroke="#606066" stroke-width=".5"/><path d="M321.32 0v3.500" stroke="#606066" stroke-width=".5"/><path d="M326.59 0v1.600" stroke="#606066" stroke-width=".5"/><path d="M331.86 0v3.500" stroke="#606066" stroke-width=".5"/><path d="M337.13 0v1.600" stroke="#606066" stroke-width=".5"/><path d="M342.4 0v3.500" stroke="#606066" stroke-width=".5"/><path d="M347.67 0v1.600" stroke="#606066" stroke-width=".5"/><path d="M352.94 0v3.500" stroke="#606066" stroke-width=".5"/><path d="M358.21 0v1.600" stroke="#606066" stroke-width=".5"/><path d="M363.48 0v3.500" stroke="#606066" stroke-width=".5"/><path d="M368.75 0v1.600" stroke="#606066" stroke-width=".5"/><path d="M374.02 0v3.500" stroke="#606066" stroke-width=".5"/><path d="M379.29 0v1.600" stroke="#606066" stroke-width=".5"/><path d="M384.56 0v3.500" stroke="#606066" stroke-width=".5"/><path d="M389.83 0v1.600" stroke="#606066" stroke-width=".5"/><path d="M395.1 0v3.500" stroke="#606066" stroke-width=".5"/><path d="M400.37 0v1.600" stroke="#606066" stroke-width=".5"/><path d="M405.64 0v3.500" stroke="#606066" stroke-width=".5"/><path d="M410.91 0v1.600" stroke="#606066" stroke-width=".5"/><path d="M416.18 0v3.500" stroke="#606066" stroke-width=".5"/><path d="M421.45 0v1.600" stroke="#606066" stroke-width=".5"/><path d="M426.72 0v3.500" stroke="#606066" stroke-width=".5"/><path d="M431.99 0v1.600" stroke="#606066" stroke-width=".5"/><path d="M437.26 0v3.500" stroke="#606066" stroke-width=".5"/><path d="M442.53 0v1.600" stroke="#606066" stroke-width=".5"/><path d="M447.8 0v3.500" stroke="#606066" stroke-width=".5"/><path d="M453.07 0v1.600" stroke="#606066" stroke-width=".5"/><path d="M458.34 0v3.500" stroke="#606066" stroke-width=".5"/><path d="M463.61 0v1.600" stroke="#606066" stroke-width=".5"/><path d="M468.88 0v3.500" stroke="#606066" stroke-width=".5"/></svg>
<div style="left:433.2px;top:263px;width:0.7px;height:16.4px;background:#36363c;"></div>
<div style="left:433.1px;top:263px;width:0.9px;height:5.2px;background:#8e8e94;"></div>
<div style="left:433.2px;top:279.4px;width:0.7px;height:170px;background:#2d2d33;"></div>
<div style="left:685.9px;top:263px;width:0.7px;height:16.4px;background:#36363c;"></div>
<div style="left:685.8px;top:263px;width:0.9px;height:5.2px;background:#8e8e94;"></div>
<div style="left:685.9px;top:279.4px;width:0.7px;height:170px;background:#2d2d33;"></div>
<span class="t" style="left:436px;top:270px;font-size:18.8px;line-height:22.56px;color:#b4b4b8;transform:scale(0.25);transform-origin:0 0;">01:01:08:00</span>
<span class="t" style="left:688.5px;top:270px;font-size:18.8px;line-height:22.56px;color:#b4b4b8;transform:scale(0.25);transform-origin:0 0;">01:01:10:00</span>
<div style="left:253.9px;top:279.9px;width:1.3px;height:50.6px;background:#3f7fc8;"></div>
<div style="left:253.9px;top:332.6px;width:1.3px;height:37.2px;background:#3fae60;"></div>
<div style="left:255.2px;top:279.9px;width:7.4px;height:89.9px;background:#1e1e22;"></div>
<div style="left:255.2px;top:284.95px;width:99.4px;height:0.7px;background:#151517;"></div>
<div style="left:255.2px;top:296.95px;width:99.4px;height:0.7px;background:#151517;"></div>
<div style="left:255.2px;top:308.15px;width:99.4px;height:0.7px;background:#151517;"></div>
<div style="left:255.2px;top:320.15px;width:99.4px;height:0.7px;background:#151517;"></div>
<div style="left:255.2px;top:330.35px;width:99.4px;height:0.7px;background:#151517;"></div>
<div style="left:255.2px;top:331.95px;width:99.4px;height:0.7px;background:#151517;"></div>
<div style="left:255.2px;top:351.15px;width:99.4px;height:0.7px;background:#151517;"></div>
<div style="left:255.2px;top:369.45px;width:99.4px;height:0.7px;background:#151517;"></div>
<div style="left:262.5px;top:279.9px;width:0.6px;height:89.9px;background:#151517;"></div>
<div style="left:281.2px;top:285.3px;width:0.7px;height:12px;background:#151517;"></div>
<div style="left:281.2px;top:308.5px;width:0.7px;height:12px;background:#151517;"></div>
<div style="left:281.2px;top:332.6px;width:0.7px;height:37.2px;background:#151517;"></div>
<svg style="left:269.7px;top:276.5px;" width="5" height="6" viewBox="0 0 5 6"><rect x=".3" y="2.600" width="4.400" height="3" rx=".4" fill="none" stroke="#5e5e64" stroke-width=".6"/><path d="M1.200 2.600V1.600a1.300 1.300 0 0 1 2.600 0v1" fill="none" stroke="#5e5e64" stroke-width=".6"/></svg>
<svg style="left:281.3px;top:276.6px;" width="8.4" height="5.8" viewBox="0 0 8.4 5.8"><rect x=".4" y=".4" width="7.600" height="5" rx=".8" fill="none" stroke="#d4d4d8" stroke-width=".8"/><path d="M3.700 2.900 2 1.700v2.400zM4.700 2.900 6.400 1.700v2.400z" fill="#d4d4d8"/></svg>
<svg style="left:295.2px;top:276.6px;" width="8.4" height="5.8" viewBox="0 0 8.4 5.8"><rect x=".4" y=".4" width="7.600" height="5" rx="1" fill="none" stroke="#d4d4d8" stroke-width=".9"/></svg>
<div style="left:253.9px;top:270px;width:100.7px;height:9.7px;background:#212125;"></div>
<div style="left:253.9px;top:279.3px;width:574.1px;height:0.7px;background:#18181b;"></div>
<span class="t" style="left:279.6px;top:267px;font-size:9.2px;line-height:11.04px;color:#f0f0f0;font-weight:bold;letter-spacing:-0.14px;">01:01:09:05</span>
<span class="t" style="left:269.5px;top:288px;font-size:24px;line-height:28.8px;color:#f4f4f4;transform:scale(0.25);transform-origin:0 0;font-weight:bold;letter-spacing:-1.28px;">V2</span>
<span class="t" style="left:285px;top:289px;font-size:21.6px;line-height:25.92px;color:#f0f0f0;transform:scale(0.25);transform-origin:0 0;letter-spacing:-0.24px;">Video 2</span>
<svg style="left:269.7px;top:300.2px;" width="5" height="6" viewBox="0 0 5 6"><rect x=".3" y="2.600" width="4.400" height="3" rx=".4" fill="none" stroke="#5e5e64" stroke-width=".6"/><path d="M1.200 2.600V1.600a1.300 1.300 0 0 1 2.600 0v1" fill="none" stroke="#5e5e64" stroke-width=".6"/></svg>
<svg style="left:281.3px;top:300.3px;" width="8.4" height="5.8" viewBox="0 0 8.4 5.8"><rect x=".4" y=".4" width="7.600" height="5" rx=".8" fill="none" stroke="#d4d4d8" stroke-width=".8"/><path d="M3.700 2.900 2 1.700v2.400zM4.700 2.900 6.400 1.700v2.400z" fill="#d4d4d8"/></svg>
<svg style="left:295.2px;top:300.3px;" width="8.4" height="5.8" viewBox="0 0 8.4 5.8"><rect x=".4" y=".4" width="7.600" height="5" rx="1" fill="none" stroke="#d4d4d8" stroke-width=".9"/></svg>
<div style="left:265.3px;top:310.3px;width:14.3px;height:8.6px;background:transparent;border:.6px solid #8f342a;border-radius:.8px;"></div>
<span class="t" style="left:269.08px;top:312px;font-size:22.4px;line-height:26.88px;color:#6e6e74;transform:scale(0.25);transform-origin:0 0;">V1</span>
<span class="t" style="left:285px;top:312px;font-size:21.6px;line-height:25.92px;color:#f0f0f0;transform:scale(0.25);transform-origin:0 0;letter-spacing:-0.24px;">Video 1</span>
<svg style="left:269.7px;top:323px;" width="5" height="6" viewBox="0 0 5 6"><rect x=".3" y="2.600" width="4.400" height="3" rx=".4" fill="none" stroke="#5e5e64" stroke-width=".6"/><path d="M1.200 2.600V1.600a1.300 1.300 0 0 1 2.600 0v1" fill="none" stroke="#5e5e64" stroke-width=".6"/></svg>
<svg style="left:281.3px;top:323.1px;" width="8.4" height="5.8" viewBox="0 0 8.4 5.8"><rect x=".4" y=".4" width="7.600" height="5" rx=".8" fill="none" stroke="#d4d4d8" stroke-width=".8"/><path d="M3.700 2.900 2 1.700v2.400zM4.700 2.900 6.400 1.700v2.400z" fill="#d4d4d8"/></svg>
<svg style="left:295.2px;top:323.1px;" width="8.4" height="5.8" viewBox="0 0 8.4 5.8"><rect x=".4" y=".4" width="7.600" height="5" rx="1" fill="none" stroke="#d4d4d8" stroke-width=".9"/></svg>
<span class="t" style="left:270px;top:339px;font-size:24px;line-height:28.8px;color:#f4f4f4;transform:scale(0.25);transform-origin:0 0;font-weight:bold;letter-spacing:-1.94px;">A1</span>
<svg style="left:288px;top:339.3px;" width="5" height="6" viewBox="0 0 5 6"><rect x=".3" y="2.600" width="4.400" height="3" rx=".4" fill="none" stroke="#55555b" stroke-width=".6"/><path d="M1.200 2.600V1.600a1.300 1.300 0 0 1 2.600 0v1" fill="none" stroke="#55555b" stroke-width=".6"/></svg>
<svg style="left:297.6px;top:339.7px;" width="8.4" height="5.8" viewBox="0 0 8.4 5.8"><rect x=".4" y=".4" width="7.600" height="5" rx=".8" fill="none" stroke="#d4d4d8" stroke-width=".8"/><path d="M3.700 2.900 2 1.700v2.400zM4.700 2.900 6.400 1.700v2.400z" fill="#d4d4d8"/></svg>
<div style="left:310px;top:338.1px;width:8.8px;height:9px;background:transparent;border:.7px solid #4a4a50;border-radius:1px;"></div>
<span class="t" style="left:312.73px;top:340px;font-size:20px;line-height:24px;color:#6e6e74;transform:scale(0.25);transform-origin:0 0;">S</span>
<div style="left:322.6px;top:338.1px;width:8.8px;height:9px;background:transparent;border:.7px solid #4a4a50;border-radius:1px;"></div>
<span class="t" style="left:324.92px;top:340px;font-size:20px;line-height:24px;color:#6e6e74;transform:scale(0.25);transform-origin:0 0;">M</span>
<span class="t" style="left:343.7px;top:340px;font-size:20px;line-height:24px;color:#66666c;transform:scale(0.25);transform-origin:0 0;letter-spacing:-0.87px;">1.0</span>
<span class="t" style="left:270px;top:357px;font-size:24px;line-height:28.8px;color:#f4f4f4;transform:scale(0.25);transform-origin:0 0;font-weight:bold;letter-spacing:-1.94px;">A2</span>
<svg style="left:288px;top:357.9px;" width="5" height="6" viewBox="0 0 5 6"><rect x=".3" y="2.600" width="4.400" height="3" rx=".4" fill="none" stroke="#55555b" stroke-width=".6"/><path d="M1.200 2.600V1.600a1.300 1.300 0 0 1 2.600 0v1" fill="none" stroke="#55555b" stroke-width=".6"/></svg>
<svg style="left:297.6px;top:358.3px;" width="8.4" height="5.8" viewBox="0 0 8.4 5.8"><rect x=".4" y=".4" width="7.600" height="5" rx=".8" fill="none" stroke="#d4d4d8" stroke-width=".8"/><path d="M3.700 2.900 2 1.700v2.400zM4.700 2.900 6.400 1.700v2.400z" fill="#d4d4d8"/></svg>
<div style="left:310px;top:356.7px;width:8.8px;height:9px;background:transparent;border:.7px solid #4a4a50;border-radius:1px;"></div>
<span class="t" style="left:312.73px;top:358px;font-size:20px;line-height:24px;color:#6e6e74;transform:scale(0.25);transform-origin:0 0;">S</span>
<div style="left:322.6px;top:356.7px;width:8.8px;height:9px;background:transparent;border:.7px solid #4a4a50;border-radius:1px;"></div>
<span class="t" style="left:324.92px;top:358px;font-size:20px;line-height:24px;color:#6e6e74;transform:scale(0.25);transform-origin:0 0;">M</span>
<span class="t" style="left:343.7px;top:358px;font-size:20px;line-height:24px;color:#66666c;transform:scale(0.25);transform-origin:0 0;letter-spacing:-0.87px;">1.0</span>
<div style="left:355.1px;top:332.1px;width:468.4px;height:0.8px;background:#1a1a1d;"></div>
<div style="left:355.6px;top:309.3px;width:76.4px;height:21.6px;background:#47678a;border-radius:1px;overflow:hidden;"></div>
<div style="left:355.6px;top:309.3px;width:76.4px;height:2px;background:#3a5980;border-radius:1px 1px 0 0;"></div>
<div style="left:356.1px;top:310.3px;width:75.4px;height:1px;background:#2a2258;"></div>
<div style="left:356.1px;top:311.200px;width:75.4px;height:8.900px;overflow:hidden;background:#cfcfd6;"><svg style="left:0;top:0" width="76.4" height="8.900"><rect x="0" y="0" width="16.9" height="8.900" fill="#fbfbfc"/><rect x="0" y="0" width="16.9" height=".9" fill="#cfcbe4"/><rect x="0" y=".9" width="16.9" height="1.300" fill="#ececf2"/><rect x="0" y="2.200" width="2.400" height="6.700" fill="#f3f3f6"/><rect x="13.4" y="2.200" width="3.200" height="6.700" fill="#e9e9ec"/><rect x="16.5" y="2.200" width=".4" height="6.700" fill="#d2d2d8"/><rect x="5.2" y="4.300" width="1.400" height="1.400" fill="#eaa0a8"/><rect x="7" y="4.700" width="1.300" height="1.300" fill="#7a74ec"/><rect x="5.6" y="6.200" width="2.600" height=".7" fill="#d4d0f4"/><rect x="8.5" y="3.300" width="3" height=".5" fill="#d8d8de"/><rect x="16.9" y="0" width="16.9" height="8.900" fill="#fbfbfc"/><rect x="16.9" y="0" width="16.9" height=".9" fill="#cfcbe4"/><rect x="16.9" y=".9" width="16.9" height="1.300" fill="#ececf2"/><rect x="16.9" y="2.200" width="2.400" height="6.700" fill="#f3f3f6"/><rect x="30.3" y="2.200" width="3.200" height="6.700" fill="#e9e9ec"/><rect x="33.4" y="2.200" width=".4" height="6.700" fill="#d2d2d8"/><rect x="22.1" y="4.300" width="1.400" height="1.400" fill="#eaa0a8"/><rect x="23.9" y="4.700" width="1.300" height="1.300" fill="#7a74ec"/><rect x="22.5" y="6.200" width="2.600" height=".7" fill="#d4d0f4"/><rect x="25.4" y="3.300" width="3" height=".5" fill="#d8d8de"/><rect x="33.8" y="0" width="16.9" height="8.900" fill="#fbfbfc"/><rect x="33.8" y="0" width="16.9" height=".9" fill="#cfcbe4"/><rect x="33.8" y=".9" width="16.9" height="1.300" fill="#ececf2"/><rect x="33.8" y="2.200" width="2.400" height="6.700" fill="#f3f3f6"/><rect x="47.2" y="2.200" width="3.200" height="6.700" fill="#e9e9ec"/><rect x="50.3" y="2.200" width=".4" height="6.700" fill="#d2d2d8"/><rect x="39" y="4.300" width="1.400" height="1.400" fill="#eaa0a8"/><rect x="40.8" y="4.700" width="1.300" height="1.300" fill="#7a74ec"/><rect x="39.4" y="6.200" width="2.600" height=".7" fill="#d4d0f4"/><rect x="42.3" y="3.300" width="3" height=".5" fill="#d8d8de"/><rect x="50.7" y="0" width="16.9" height="8.900" fill="#fbfbfc"/><rect x="50.7" y="0" width="16.9" height=".9" fill="#cfcbe4"/><rect x="50.7" y=".9" width="16.9" height="1.300" fill="#ececf2"/><rect x="50.7" y="2.200" width="2.400" height="6.700" fill="#f3f3f6"/><rect x="64.1" y="2.200" width="3.200" height="6.700" fill="#e9e9ec"/><rect x="67.2" y="2.200" width=".4" height="6.700" fill="#d2d2d8"/><rect x="55.9" y="4.300" width="1.400" height="1.400" fill="#eaa0a8"/><rect x="57.7" y="4.700" width="1.300" height="1.300" fill="#7a74ec"/><rect x="56.3" y="6.200" width="2.600" height=".7" fill="#d4d0f4"/><rect x="59.2" y="3.300" width="3" height=".5" fill="#d8d8de"/><rect x="67.6" y="0" width="16.9" height="8.900" fill="#fbfbfc"/><rect x="67.6" y="0" width="16.9" height=".9" fill="#cfcbe4"/><rect x="67.6" y=".9" width="16.9" height="1.300" fill="#ececf2"/><rect x="67.6" y="2.200" width="2.400" height="6.700" fill="#f3f3f6"/><rect x="81" y="2.200" width="3.200" height="6.700" fill="#e9e9ec"/><rect x="84.1" y="2.200" width=".4" height="6.700" fill="#d2d2d8"/><rect x="72.8" y="4.300" width="1.400" height="1.400" fill="#eaa0a8"/><rect x="74.6" y="4.700" width="1.300" height="1.300" fill="#7a74ec"/><rect x="73.2" y="6.200" width="2.600" height=".7" fill="#d4d0f4"/><rect x="76.1" y="3.300" width="3" height=".5" fill="#d8d8de"/></svg></div>
<svg style="left:357.5px;top:322.3px;" width="6.6" height="6.6" viewBox="0 0 6.6 6.6"><circle cx="3.300" cy="3.300" r="2.800" fill="none" stroke="#e4eaf2" stroke-width=".8"/><path d="M3.300 3.500 4.700 1.900" stroke="#e4eaf2" stroke-width=".8"/><path d="M1.700 5.700h3.200" stroke="#47678a" stroke-width="1.300"/></svg>
<span class="t" style="left:366.8px;top:323px;font-size:21.2px;line-height:25.44px;color:#f4f6fa;transform:scale(0.25);transform-origin:0 0;letter-spacing:-0.86px;">Screen Recording 2023-08-...</span>
<div style="left:433.9px;top:309.3px;width:176.8px;height:21.6px;background:#47678a;border-radius:1px;overflow:hidden;"></div>
<div style="left:433.9px;top:309.3px;width:176.8px;height:2px;background:#3a5980;border-radius:1px 1px 0 0;"></div>
<div style="left:434.4px;top:310.3px;width:175.8px;height:1px;background:#2a2258;"></div>
<div style="left:434.4px;top:311.200px;width:175.8px;height:8.900px;overflow:hidden;background:#cfcfd6;"><svg style="left:0;top:0" width="176.8" height="8.900"><rect x="0" y="0" width="16.9" height="8.900" fill="#fbfbfc"/><rect x="0" y="0" width="16.9" height=".9" fill="#cfcbe4"/><rect x="0" y=".9" width="16.9" height="1.300" fill="#ececf2"/><rect x="0" y="2.200" width="2.400" height="6.700" fill="#f3f3f6"/><rect x="13.4" y="2.200" width="3.200" height="6.700" fill="#e9e9ec"/><rect x="16.5" y="2.200" width=".4" height="6.700" fill="#d2d2d8"/><rect x="5.2" y="4.300" width="1.400" height="1.400" fill="#eaa0a8"/><rect x="7" y="4.700" width="1.300" height="1.300" fill="#7a74ec"/><rect x="5.6" y="6.200" width="2.600" height=".7" fill="#d4d0f4"/><rect x="8.5" y="3.300" width="3" height=".5" fill="#d8d8de"/><rect x="16.9" y="0" width="16.9" height="8.900" fill="#fbfbfc"/><rect x="16.9" y="0" width="16.9" height=".9" fill="#cfcbe4"/><rect x="16.9" y=".9" width="16.9" height="1.300" fill="#ececf2"/><rect x="16.9" y="2.200" width="2.400" height="6.700" fill="#f3f3f6"/><rect x="30.3" y="2.200" width="3.200" height="6.700" fill="#e9e9ec"/><rect x="33.4" y="2.200" width=".4" height="6.700" fill="#d2d2d8"/><rect x="22.1" y="4.300" width="1.400" height="1.400" fill="#eaa0a8"/><rect x="23.9" y="4.700" width="1.300" height="1.300" fill="#7a74ec"/><rect x="22.5" y="6.200" width="2.600" height=".7" fill="#d4d0f4"/><rect x="25.4" y="3.300" width="3" height=".5" fill="#d8d8de"/><rect x="33.8" y="0" width="16.9" height="8.900" fill="#fbfbfc"/><rect x="33.8" y="0" width="16.9" height=".9" fill="#cfcbe4"/><rect x="33.8" y=".9" width="16.9" height="1.300" fill="#ececf2"/><rect x="33.8" y="2.200" width="2.400" height="6.700" fill="#f3f3f6"/><rect x="47.2" y="2.200" width="3.200" height="6.700" fill="#e9e9ec"/><rect x="50.3" y="2.200" width=".4" height="6.700" fill="#d2d2d8"/><rect x="39" y="4.300" width="1.400" height="1.400" fill="#eaa0a8"/><rect x="40.8" y="4.700" width="1.300" height="1.300" fill="#7a74ec"/><rect x="39.4" y="6.200" width="2.600" height=".7" fill="#d4d0f4"/><rect x="42.3" y="3.300" width="3" height=".5" fill="#d8d8de"/><rect x="50.7" y="0" width="16.9" height="8.900" fill="#fbfbfc"/><rect x="50.7" y="0" width="16.9" height=".9" fill="#cfcbe4"/><rect x="50.7" y=".9" width="16.9" height="1.300" fill="#ececf2"/><rect x="50.7" y="2.200" width="2.400" height="6.700" fill="#f3f3f6"/><rect x="64.1" y="2.200" width="3.200" height="6.700" fill="#e9e9ec"/><rect x="67.2" y="2.200" width=".4" height="6.700" fill="#d2d2d8"/><rect x="55.9" y="4.300" width="1.400" height="1.400" fill="#eaa0a8"/><rect x="57.7" y="4.700" width="1.300" height="1.300" fill="#7a74ec"/><rect x="56.3" y="6.200" width="2.600" height=".7" fill="#d4d0f4"/><rect x="59.2" y="3.300" width="3" height=".5" fill="#d8d8de"/><rect x="67.6" y="0" width="16.9" height="8.900" fill="#fbfbfc"/><rect x="67.6" y="0" width="16.9" height=".9" fill="#cfcbe4"/><rect x="67.6" y=".9" width="16.9" height="1.300" fill="#ececf2"/><rect x="67.6" y="2.200" width="2.400" height="6.700" fill="#f3f3f6"/><rect x="81" y="2.200" width="3.200" height="6.700" fill="#e9e9ec"/><rect x="84.1" y="2.200" width=".4" height="6.700" fill="#d2d2d8"/><rect x="72.8" y="4.300" width="1.400" height="1.400" fill="#eaa0a8"/><rect x="74.6" y="4.700" width="1.300" height="1.300" fill="#7a74ec"/><rect x="73.2" y="6.200" width="2.600" height=".7" fill="#d4d0f4"/><rect x="76.1" y="3.300" width="3" height=".5" fill="#d8d8de"/><rect x="84.5" y="0" width="16.9" height="8.900" fill="#fbfbfc"/><rect x="84.5" y="0" width="16.9" height=".9" fill="#cfcbe4"/><rect x="84.5" y=".9" width="16.9" height="1.300" fill="#ececf2"/><rect x="84.5" y="2.200" width="2.400" height="6.700" fill="#f3f3f6"/><rect x="97.9" y="2.200" width="3.200" height="6.700" fill="#e9e9ec"/><rect x="101" y="2.200" width=".4" height="6.700" fill="#d2d2d8"/><rect x="89.7" y="4.300" width="1.400" height="1.400" fill="#eaa0a8"/><rect x="91.5" y="4.700" width="1.300" height="1.300" fill="#7a74ec"/><rect x="90.1" y="6.200" width="2.600" height=".7" fill="#d4d0f4"/><rect x="93" y="3.300" width="3" height=".5" fill="#d8d8de"/><rect x="101.4" y="0" width="16.9" height="8.900" fill="#fbfbfc"/><rect x="101.4" y="0" width="16.9" height=".9" fill="#cfcbe4"/><rect x="101.4" y=".9" width="16.9" height="1.300" fill="#ececf2"/><rect x="101.4" y="2.200" width="2.400" height="6.700" fill="#f3f3f6"/><rect x="114.8" y="2.200" width="3.200" height="6.700" fill="#e9e9ec"/><rect x="117.9" y="2.200" width=".4" height="6.700" fill="#d2d2d8"/><rect x="106.6" y="4.300" width="1.400" height="1.400" fill="#eaa0a8"/><rect x="108.4" y="4.700" width="1.300" height="1.300" fill="#7a74ec"/><rect x="107" y="6.200" width="2.600" height=".7" fill="#d4d0f4"/><rect x="109.9" y="3.300" width="3" height=".5" fill="#d8d8de"/><rect x="118.3" y="0" width="16.9" height="8.900" fill="#fbfbfc"/><rect x="118.3" y="0" width="16.9" height=".9" fill="#cfcbe4"/><rect x="118.3" y=".9" width="16.9" height="1.300" fill="#ececf2"/><rect x="118.3" y="2.200" width="2.400" height="6.700" fill="#f3f3f6"/><rect x="131.7" y="2.200" width="3.200" height="6.700" fill="#e9e9ec"/><rect x="134.8" y="2.200" width=".4" height="6.700" fill="#d2d2d8"/><rect x="123.5" y="4.300" width="1.400" height="1.400" fill="#eaa0a8"/><rect x="125.3" y="4.700" width="1.300" height="1.300" fill="#7a74ec"/><rect x="123.9" y="6.200" width="2.600" height=".7" fill="#d4d0f4"/><rect x="126.8" y="3.300" width="3" height=".5" fill="#d8d8de"/><rect x="135.2" y="0" width="16.9" height="8.900" fill="#fbfbfc"/><rect x="135.2" y="0" width="16.9" height=".9" fill="#cfcbe4"/><rect x="135.2" y=".9" width="16.9" height="1.300" fill="#ececf2"/><rect x="135.2" y="2.200" width="2.400" height="6.700" fill="#f3f3f6"/><rect x="148.6" y="2.200" width="3.200" height="6.700" fill="#e9e9ec"/><rect x="151.7" y="2.200" width=".4" height="6.700" fill="#d2d2d8"/><rect x="140.4" y="4.300" width="1.400" height="1.400" fill="#eaa0a8"/><rect x="142.2" y="4.700" width="1.300" height="1.300" fill="#7a74ec"/><rect x="140.8" y="6.200" width="2.600" height=".7" fill="#d4d0f4"/><rect x="143.7" y="3.300" width="3" height=".5" fill="#d8d8de"/><rect x="152.1" y="0" width="16.9" height="8.900" fill="#fbfbfc"/><rect x="152.1" y="0" width="16.9" height=".9" fill="#cfcbe4"/><rect x="152.1" y=".9" width="16.9" height="1.300" fill="#ececf2"/><rect x="152.1" y="2.200" width="2.400" height="6.700" fill="#f3f3f6"/><rect x="165.5" y="2.200" width="3.200" height="6.700" fill="#e9e9ec"/><rect x="168.6" y="2.200" width=".4" height="6.700" fill="#d2d2d8"/><rect x="157.3" y="4.300" width="1.400" height="1.400" fill="#eaa0a8"/><rect x="159.1" y="4.700" width="1.300" height="1.300" fill="#7a74ec"/><rect x="157.7" y="6.200" width="2.600" height=".7" fill="#d4d0f4"/><rect x="160.6" y="3.300" width="3" height=".5" fill="#d8d8de"/><rect x="169" y="0" width="16.9" height="8.900" fill="#fbfbfc"/><rect x="169" y="0" width="16.9" height=".9" fill="#cfcbe4"/><rect x="169" y=".9" width="16.9" height="1.300" fill="#ececf2"/><rect x="169" y="2.200" width="2.400" height="6.700" fill="#f3f3f6"/><rect x="182.4" y="2.200" width="3.200" height="6.700" fill="#e9e9ec"/><rect x="185.5" y="2.200" width=".4" height="6.700" fill="#d2d2d8"/><rect x="174.2" y="4.300" width="1.400" height="1.400" fill="#eaa0a8"/><rect x="176" y="4.700" width="1.300" height="1.300" fill="#7a74ec"/><rect x="174.6" y="6.200" width="2.600" height=".7" fill="#d4d0f4"/><rect x="177.5" y="3.300" width="3" height=".5" fill="#d8d8de"/></svg></div>
<svg style="left:435.8px;top:322.3px;" width="6.6" height="6.6" viewBox="0 0 6.6 6.6"><circle cx="3.300" cy="3.300" r="2.800" fill="none" stroke="#e4eaf2" stroke-width=".8"/><path d="M3.300 3.500 4.700 1.900" stroke="#e4eaf2" stroke-width=".8"/><path d="M1.700 5.700h3.200" stroke="#47678a" stroke-width="1.300"/></svg>
<span class="t" style="left:445.1px;top:323px;font-size:21.2px;line-height:25.44px;color:#f4f6fa;transform:scale(0.25);transform-origin:0 0;letter-spacing:-0.79px;">Screen Recording 2023-08-16 at 20.09.09.mov</span>
<div style="left:612.5px;top:309.3px;width:72px;height:21.6px;background:#47678a;border-radius:1px;overflow:hidden;"></div>
<div style="left:612.5px;top:309.3px;width:72px;height:2px;background:#3a5980;border-radius:1px 1px 0 0;"></div>
<div style="left:613px;top:310.3px;width:71px;height:1px;background:#2a2258;"></div>
<div style="left:613px;top:311.200px;width:71px;height:8.900px;overflow:hidden;background:#cfcfd6;"><svg style="left:0;top:0" width="72" height="8.900"><rect x="0" y="0" width="16.9" height="8.900" fill="#fbfbfc"/><rect x="0" y="0" width="16.9" height=".9" fill="#cfcbe4"/><rect x="0" y=".9" width="16.9" height="1.300" fill="#ececf2"/><rect x="0" y="2.200" width="2.400" height="6.700" fill="#f3f3f6"/><rect x="13.4" y="2.200" width="3.200" height="6.700" fill="#e9e9ec"/><rect x="16.5" y="2.200" width=".4" height="6.700" fill="#d2d2d8"/><rect x="5.2" y="4.300" width="1.400" height="1.400" fill="#eaa0a8"/><rect x="7" y="4.700" width="1.300" height="1.300" fill="#7a74ec"/><rect x="5.6" y="6.200" width="2.600" height=".7" fill="#d4d0f4"/><rect x="8.5" y="3.300" width="3" height=".5" fill="#d8d8de"/><rect x="16.9" y="0" width="16.9" height="8.900" fill="#fbfbfc"/><rect x="16.9" y="0" width="16.9" height=".9" fill="#cfcbe4"/><rect x="16.9" y=".9" width="16.9" height="1.300" fill="#ececf2"/><rect x="16.9" y="2.200" width="2.400" height="6.700" fill="#f3f3f6"/><rect x="30.3" y="2.200" width="3.200" height="6.700" fill="#e9e9ec"/><rect x="33.4" y="2.200" width=".4" height="6.700" fill="#d2d2d8"/><rect x="22.1" y="4.300" width="1.400" height="1.400" fill="#eaa0a8"/><rect x="23.9" y="4.700" width="1.300" height="1.300" fill="#7a74ec"/><rect x="22.5" y="6.200" width="2.600" height=".7" fill="#d4d0f4"/><rect x="25.4" y="3.300" width="3" height=".5" fill="#d8d8de"/><rect x="33.8" y="0" width="16.9" height="8.900" fill="#fbfbfc"/><rect x="33.8" y="0" width="16.9" height=".9" fill="#cfcbe4"/><rect x="33.8" y=".9" width="16.9" height="1.300" fill="#ececf2"/><rect x="33.8" y="2.200" width="2.400" height="6.700" fill="#f3f3f6"/><rect x="47.2" y="2.200" width="3.200" height="6.700" fill="#e9e9ec"/><rect x="50.3" y="2.200" width=".4" height="6.700" fill="#d2d2d8"/><rect x="39" y="4.300" width="1.400" height="1.400" fill="#eaa0a8"/><rect x="40.8" y="4.700" width="1.300" height="1.300" fill="#7a74ec"/><rect x="39.4" y="6.200" width="2.600" height=".7" fill="#d4d0f4"/><rect x="42.3" y="3.300" width="3" height=".5" fill="#d8d8de"/><rect x="50.7" y="0" width="16.9" height="8.900" fill="#fbfbfc"/><rect x="50.7" y="0" width="16.9" height=".9" fill="#cfcbe4"/><rect x="50.7" y=".9" width="16.9" height="1.300" fill="#ececf2"/><rect x="50.7" y="2.200" width="2.400" height="6.700" fill="#f3f3f6"/><rect x="64.1" y="2.200" width="3.200" height="6.700" fill="#e9e9ec"/><rect x="67.2" y="2.200" width=".4" height="6.700" fill="#d2d2d8"/><rect x="55.9" y="4.300" width="1.400" height="1.400" fill="#eaa0a8"/><rect x="57.7" y="4.700" width="1.300" height="1.300" fill="#7a74ec"/><rect x="56.3" y="6.200" width="2.600" height=".7" fill="#d4d0f4"/><rect x="59.2" y="3.300" width="3" height=".5" fill="#d8d8de"/><rect x="67.6" y="0" width="16.9" height="8.900" fill="#fbfbfc"/><rect x="67.6" y="0" width="16.9" height=".9" fill="#cfcbe4"/><rect x="67.6" y=".9" width="16.9" height="1.300" fill="#ececf2"/><rect x="67.6" y="2.200" width="2.400" height="6.700" fill="#f3f3f6"/><rect x="81" y="2.200" width="3.200" height="6.700" fill="#e9e9ec"/><rect x="84.1" y="2.200" width=".4" height="6.700" fill="#d2d2d8"/><rect x="72.8" y="4.300" width="1.400" height="1.400" fill="#eaa0a8"/><rect x="74.6" y="4.700" width="1.300" height="1.300" fill="#7a74ec"/><rect x="73.2" y="6.200" width="2.600" height=".7" fill="#d4d0f4"/><rect x="76.1" y="3.300" width="3" height=".5" fill="#d8d8de"/></svg></div>
<span class="t" style="left:613.9px;top:323px;font-size:21.2px;line-height:25.44px;color:#f4f6fa;transform:scale(0.25);transform-origin:0 0;letter-spacing:-1.21px;">Screen Recording 2...</span>
<svg style="left:664.8px;top:323.4px;" width="8" height="4.4" viewBox="0 0 8 4.4"><path d="M.3 1.600Q1.800 -.4 3.300 2.200T6.600 3.200" fill="none" stroke="#111820" stroke-width=".9"/></svg>
<svg style="left:675.2px;top:323px;" width="5" height="5" viewBox="0 0 5 5"><path d="M2.500 .2 4.800 2.500 2.500 4.800.2 2.500z" fill="#0e141c"/><path d="M2.500 1.400v2.200M1.400 2.500h2.200" stroke="#4a6a8c" stroke-width=".5"/></svg>
<div style="left:686.1px;top:309.3px;width:136.4px;height:21.6px;background:#4878ad;border-radius:1px;overflow:hidden;"></div>
<div style="left:686.1px;top:309.3px;width:136.4px;height:2px;background:#3d69a0;border-radius:1px 1px 0 0;"></div>
<div style="left:686.6px;top:310.3px;width:135.4px;height:1px;background:#2a2258;"></div>
<div style="left:686.6px;top:311.200px;width:135.4px;height:8.900px;overflow:hidden;background:#cfcfd6;"><svg style="left:0;top:0" width="136.4" height="8.900"><rect x="0" y="0" width="16.9" height="8.900" fill="#fbfbfc"/><rect x="0" y="0" width="16.9" height=".9" fill="#cfcbe4"/><rect x="0" y=".9" width="16.9" height="1.300" fill="#ececf2"/><rect x="0" y="2.200" width="2.400" height="6.700" fill="#f3f3f6"/><rect x="13.4" y="2.200" width="3.200" height="6.700" fill="#e9e9ec"/><rect x="16.5" y="2.200" width=".4" height="6.700" fill="#d2d2d8"/><rect x="5.2" y="4.300" width="1.400" height="1.400" fill="#eaa0a8"/><rect x="7" y="4.700" width="1.300" height="1.300" fill="#7a74ec"/><rect x="5.6" y="6.200" width="2.600" height=".7" fill="#d4d0f4"/><rect x="8.5" y="3.300" width="3" height=".5" fill="#d8d8de"/><rect x="16.9" y="0" width="16.9" height="8.900" fill="#fbfbfc"/><rect x="16.9" y="0" width="16.9" height=".9" fill="#cfcbe4"/><rect x="16.9" y=".9" width="16.9" height="1.300" fill="#ececf2"/><rect x="16.9" y="2.200" width="2.400" height="6.700" fill="#f3f3f6"/><rect x="30.3" y="2.200" width="3.200" height="6.700" fill="#e9e9ec"/><rect x="33.4" y="2.200" width=".4" height="6.700" fill="#d2d2d8"/><rect x="22.1" y="4.300" width="1.400" height="1.400" fill="#eaa0a8"/><rect x="23.9" y="4.700" width="1.300" height="1.300" fill="#7a74ec"/><rect x="22.5" y="6.200" width="2.600" height=".7" fill="#d4d0f4"/><rect x="25.4" y="3.300" width="3" height=".5" fill="#d8d8de"/><rect x="33.8" y="0" width="16.9" height="8.900" fill="#fbfbfc"/><rect x="33.8" y="0" width="16.9" height=".9" fill="#cfcbe4"/><rect x="33.8" y=".9" width="16.9" height="1.300" fill="#ececf2"/><rect x="33.8" y="2.200" width="2.400" height="6.700" fill="#f3f3f6"/><rect x="47.2" y="2.200" width="3.200" height="6.700" fill="#e9e9ec"/><rect x="50.3" y="2.200" width=".4" height="6.700" fill="#d2d2d8"/><rect x="39" y="4.300" width="1.400" height="1.400" fill="#eaa0a8"/><rect x="40.8" y="4.700" width="1.300" height="1.300" fill="#7a74ec"/><rect x="39.4" y="6.200" width="2.600" height=".7" fill="#d4d0f4"/><rect x="42.3" y="3.300" width="3" height=".5" fill="#d8d8de"/><rect x="50.7" y="0" width="16.9" height="8.900" fill="#fbfbfc"/><rect x="50.7" y="0" width="16.9" height=".9" fill="#cfcbe4"/><rect x="50.7" y=".9" width="16.9" height="1.300" fill="#ececf2"/><rect x="50.7" y="2.200" width="2.400" height="6.700" fill="#f3f3f6"/><rect x="64.1" y="2.200" width="3.200" height="6.700" fill="#e9e9ec"/><rect x="67.2" y="2.200" width=".4" height="6.700" fill="#d2d2d8"/><rect x="55.9" y="4.300" width="1.400" height="1.400" fill="#eaa0a8"/><rect x="57.7" y="4.700" width="1.300" height="1.300" fill="#7a74ec"/><rect x="56.3" y="6.200" width="2.600" height=".7" fill="#d4d0f4"/><rect x="59.2" y="3.300" width="3" height=".5" fill="#d8d8de"/><rect x="67.6" y="0" width="16.9" height="8.900" fill="#fbfbfc"/><rect x="67.6" y="0" width="16.9" height=".9" fill="#cfcbe4"/><rect x="67.6" y=".9" width="16.9" height="1.300" fill="#ececf2"/><rect x="67.6" y="2.200" width="2.400" height="6.700" fill="#f3f3f6"/><rect x="81" y="2.200" width="3.200" height="6.700" fill="#e9e9ec"/><rect x="84.1" y="2.200" width=".4" height="6.700" fill="#d2d2d8"/><rect x="72.8" y="4.300" width="1.400" height="1.400" fill="#eaa0a8"/><rect x="74.6" y="4.700" width="1.300" height="1.300" fill="#7a74ec"/><rect x="73.2" y="6.200" width="2.600" height=".7" fill="#d4d0f4"/><rect x="76.1" y="3.300" width="3" height=".5" fill="#d8d8de"/><rect x="84.5" y="0" width="16.9" height="8.900" fill="#fbfbfc"/><rect x="84.5" y="0" width="16.9" height=".9" fill="#cfcbe4"/><rect x="84.5" y=".9" width="16.9" height="1.300" fill="#ececf2"/><rect x="84.5" y="2.200" width="2.400" height="6.700" fill="#f3f3f6"/><rect x="97.9" y="2.200" width="3.200" height="6.700" fill="#e9e9ec"/><rect x="101" y="2.200" width=".4" height="6.700" fill="#d2d2d8"/><rect x="89.7" y="4.300" width="1.400" height="1.400" fill="#eaa0a8"/><rect x="91.5" y="4.700" width="1.300" height="1.300" fill="#7a74ec"/><rect x="90.1" y="6.200" width="2.600" height=".7" fill="#d4d0f4"/><rect x="93" y="3.300" width="3" height=".5" fill="#d8d8de"/><rect x="101.4" y="0" width="16.9" height="8.900" fill="#fbfbfc"/><rect x="101.4" y="0" width="16.9" height=".9" fill="#cfcbe4"/><rect x="101.4" y=".9" width="16.9" height="1.300" fill="#ececf2"/><rect x="101.4" y="2.200" width="2.400" height="6.700" fill="#f3f3f6"/><rect x="114.8" y="2.200" width="3.200" height="6.700" fill="#e9e9ec"/><rect x="117.9" y="2.200" width=".4" height="6.700" fill="#d2d2d8"/><rect x="106.6" y="4.300" width="1.400" height="1.400" fill="#eaa0a8"/><rect x="108.4" y="4.700" width="1.300" height="1.300" fill="#7a74ec"/><rect x="107" y="6.200" width="2.600" height=".7" fill="#d4d0f4"/><rect x="109.9" y="3.300" width="3" height=".5" fill="#d8d8de"/><rect x="118.3" y="0" width="16.9" height="8.900" fill="#fbfbfc"/><rect x="118.3" y="0" width="16.9" height=".9" fill="#cfcbe4"/><rect x="118.3" y=".9" width="16.9" height="1.300" fill="#ececf2"/><rect x="118.3" y="2.200" width="2.400" height="6.700" fill="#f3f3f6"/><rect x="131.7" y="2.200" width="3.200" height="6.700" fill="#e9e9ec"/><rect x="134.8" y="2.200" width=".4" height="6.700" fill="#d2d2d8"/><rect x="123.5" y="4.300" width="1.400" height="1.400" fill="#eaa0a8"/><rect x="125.3" y="4.700" width="1.300" height="1.300" fill="#7a74ec"/><rect x="123.9" y="6.200" width="2.600" height=".7" fill="#d4d0f4"/><rect x="126.8" y="3.300" width="3" height=".5" fill="#d8d8de"/><rect x="135.2" y="0" width="16.9" height="8.900" fill="#fbfbfc"/><rect x="135.2" y="0" width="16.9" height=".9" fill="#cfcbe4"/><rect x="135.2" y=".9" width="16.9" height="1.300" fill="#ececf2"/><rect x="135.2" y="2.200" width="2.400" height="6.700" fill="#f3f3f6"/><rect x="148.6" y="2.200" width="3.200" height="6.700" fill="#e9e9ec"/><rect x="151.7" y="2.200" width=".4" height="6.700" fill="#d2d2d8"/><rect x="140.4" y="4.300" width="1.400" height="1.400" fill="#eaa0a8"/><rect x="142.2" y="4.700" width="1.300" height="1.300" fill="#7a74ec"/><rect x="140.8" y="6.200" width="2.600" height=".7" fill="#d4d0f4"/><rect x="143.7" y="3.300" width="3" height=".5" fill="#d8d8de"/></svg></div>
<span class="t" style="left:687.6px;top:323px;font-size:21.2px;line-height:25.44px;color:#f8fafc;transform:scale(0.25);transform-origin:0 0;letter-spacing:-0.88px;">Screen Recording 2023-08-16 at 20.09.09.mov</span>
<div style="left:433.7px;top:332.8px;width:177px;height:17.5px;background:#3f9560;border-radius:1px;overflow:hidden;border:.4px solid #2c7448;"></div>
<div style="left:434.1px;top:333.2px;width:176.2px;height:7.3px;background:#3b9059;"></div>
<svg style="left:433.7px;top:332.4px;" width="177" height="8" viewBox="0 0 177 8"><path d="M0 4h177" stroke="#a8dab8" stroke-width=".4"/><ellipse cx="12" cy="4" rx="8" ry="0.38" fill="#cfe8d6"/><ellipse cx="34" cy="4" rx="7.7" ry="0.81" fill="#cfe8d6"/><ellipse cx="49.45" cy="4" rx="4.85" ry="1.95" fill="#cfe8d6"/><ellipse cx="62.5" cy="4" rx="1.5" ry="0.59" fill="#cfe8d6"/><ellipse cx="77.5" cy="4" rx="5.8" ry="0.98" fill="#cfe8d6"/><ellipse cx="93.5" cy="4" rx="4.5" ry="1.44" fill="#cfe8d6"/><ellipse cx="100.25" cy="4" rx="4.25" ry="0.85" fill="#cfe8d6"/><ellipse cx="122.3" cy="4" rx="7.3" ry="0.98" fill="#cfe8d6"/><ellipse cx="139.25" cy="4" rx="5.75" ry="0.68" fill="#cfe8d6"/><ellipse cx="166.8" cy="4" rx="2.9" ry="0.68" fill="#cfe8d6"/></svg>
<span class="t" style="left:435.2px;top:343px;font-size:21.2px;line-height:25.44px;color:#eef8f1;transform:scale(0.25);transform-origin:0 0;letter-spacing:-0.95px;">make noooise.m4a</span>
<div style="left:612.4px;top:332.8px;width:124.4px;height:17.5px;background:#3f9560;border-radius:1px;overflow:hidden;border:.4px solid #2c7448;"></div>
<div style="left:612.8px;top:333.2px;width:123.6px;height:7.3px;background:#3b9059;"></div>
<svg style="left:612.4px;top:332.4px;" width="124.4" height="8" viewBox="0 0 124.4 8"><path d="M0 4h124.4" stroke="#a8dab8" stroke-width=".4"/><ellipse cx="12.2" cy="4" rx="7.7" ry="1.53" fill="#cfe8d6"/><ellipse cx="27.7" cy="4" rx="2.9" ry="1.02" fill="#cfe8d6"/><ellipse cx="37.35" cy="4" rx="1.95" ry="0.68" fill="#cfe8d6"/><ellipse cx="52.3" cy="4" rx="5.3" ry="1.87" fill="#cfe8d6"/><ellipse cx="69.95" cy="4" rx="4.55" ry="1.7" fill="#cfe8d6"/><ellipse cx="79.55" cy="4" rx="6.05" ry="1.7" fill="#cfe8d6"/><ellipse cx="91.5" cy="4" rx="6.5" ry="0.51" fill="#cfe8d6"/></svg>
<span class="t" style="left:613.9px;top:343px;font-size:21.2px;line-height:25.44px;color:#eef8f1;transform:scale(0.25);transform-origin:0 0;letter-spacing:-0.95px;">make noooise.m4a</span>
<div style="left:585.4px;top:264px;width:1px;height:189px;background:#e5473a;"></div>
<svg style="left:582.6px;top:262.6px;" width="6.6" height="5.4" viewBox="0 0 6.6 5.4"><path d="M.2 0H6.400V2.400L3.300 5.400.2 2.400z" fill="#e9503f"/></svg>
<div style="left:253.9px;top:449.6px;width:100.7px;height:3.4px;background:#2d2d32;"></div>
<div style="left:355.1px;top:449.6px;width:473.4px;height:3.4px;background:#242429;"></div>
<div style="left:714.3px;top:450.2px;width:18px;height:2.8px;background:#5a5a60;border-radius:1px;"></div>
<div style="left:823.3px;top:262.8px;width:4.7px;height:190.2px;background:#1e1e22;"></div>
<div style="left:825.4px;top:295px;width:2.6px;height:34.7px;background:#4c4c52;border-radius:1px;"></div>
</div></body></html>
